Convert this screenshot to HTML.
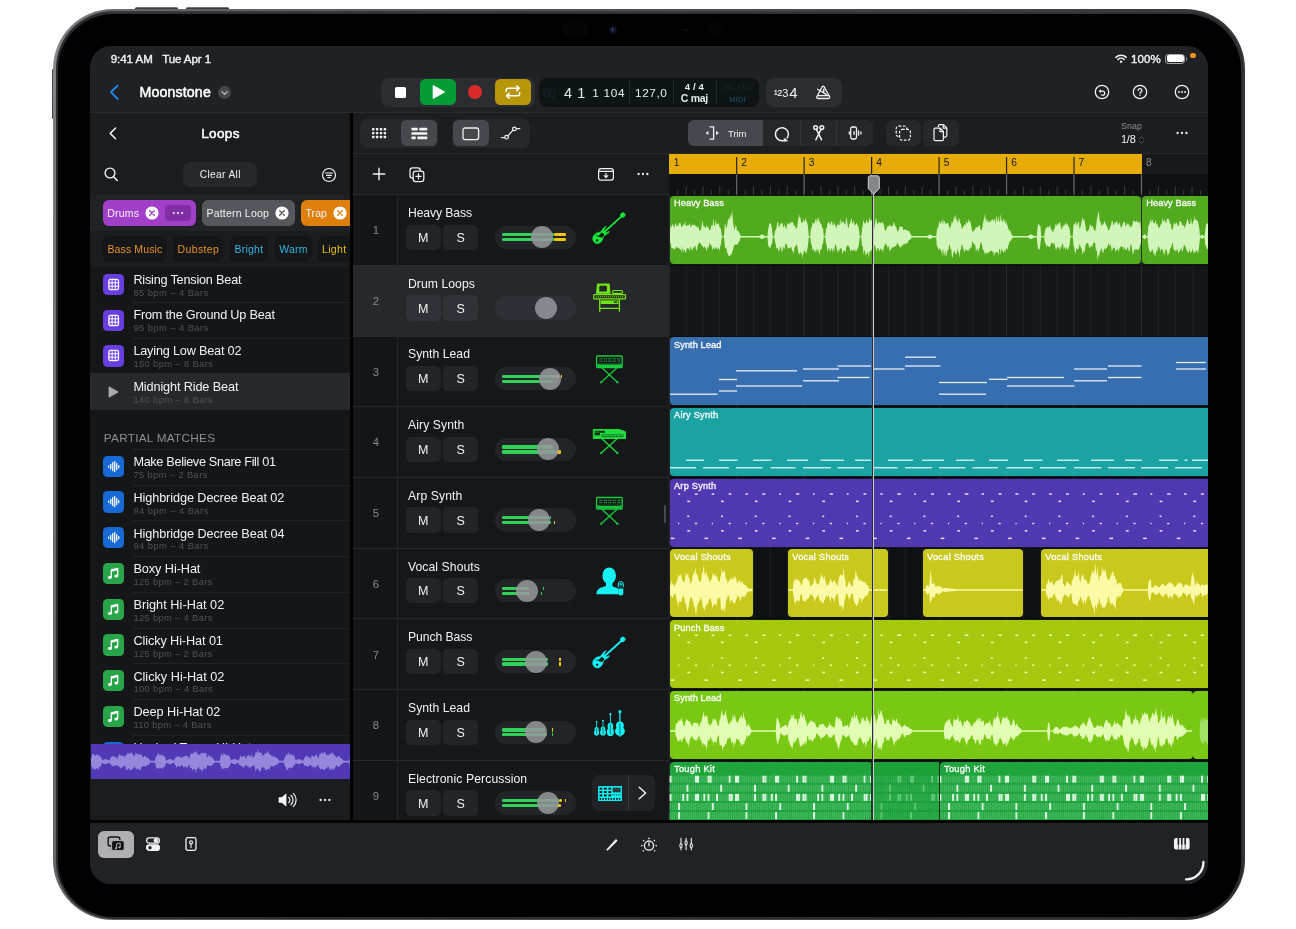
<!DOCTYPE html>
<html><head><meta charset="utf-8"><title>Logic Pro for iPad</title>
<style>
html,body{margin:0;padding:0;background:#fff}
body{width:1296px;height:929px;position:relative;overflow:hidden;font-family:"Liberation Sans",sans-serif}
#root div,#root span,#root svg{position:absolute;display:block}
#root span{white-space:pre}
#root{position:absolute;left:0;top:0;width:1296px;height:929px;will-change:transform}
</style></head><body><div id="root">
<div style="left:135.3px;top:6.9px;width:42.7px;height:4px;background:linear-gradient(180deg,#9a9a9e 0,#3c3d41 1.2px,#2a2a2e 100%);border-radius:1.5px;"></div>
<div style="left:186.2px;top:6.9px;width:42.8px;height:4px;background:linear-gradient(180deg,#9a9a9e 0,#3c3d41 1.2px,#2a2a2e 100%);border-radius:1.5px;"></div>
<div style="left:51.9px;top:68.5px;width:3px;height:50.5px;background:#47484c;border-radius:1px;"></div>
<div style="left:53px;top:9.300px;width:1191.500px;height:911.200px;border-radius:60px;background:linear-gradient(97deg,#9a9a9e 0,#7a7b7f 1.2%,#66676b 6%,#55565a 30%,#404145 70%,#343438 100%)"></div>
<div style="left:55.800px;top:11.400px;width:1187.400px;height:907.800px;border-radius:57.500px;background:linear-gradient(180deg,#3e3e42 0,#2c2c30 3px,#2c2c30 100%)"></div>
<div style="left:57.800px;top:13.600px;width:1183.400px;height:903.800px;border-radius:55.500px;background:#000"></div>
<div style="left:561px;top:22.4px;width:27.6px;height:13.6px;background:#050506;border-radius:6.8px;"></div>
<div style="left:609.600px;top:26.600px;width:6px;height:6px;border-radius:50%;background:#121828;box-shadow:0 0 0 1px #0a0c12"></div>
<div style="left:611.700px;top:28.200px;width:1.800px;height:2.800px;border-radius:50%;background:#3a58b8"></div>
<div style="left:685px;top:28.6px;width:2px;height:2px;background:#161618;border-radius:1px;"></div>
<div style="left:708px;top:22.4px;width:14px;height:14px;background:#040405;border-radius:7px;"></div>
<div id="scr" style="left:90.300px;top:46px;width:1117.900px;height:838px;border-radius:21px;background:#202125;overflow:hidden">
<div style="left:-90.300px;top:-46px;width:1296px;height:929px">
<span style="left:110.70px;top:52.10px;font-size:11.5px;line-height:14px;color:#f2f2f4;font-weight:400;letter-spacing:-0.027px;-webkit-text-stroke:0.4px #f2f2f4;">9:41 AM</span>
<span style="left:162.20px;top:52.10px;font-size:11.5px;line-height:14px;color:#f2f2f4;font-weight:400;letter-spacing:-0.070px;-webkit-text-stroke:0.4px #f2f2f4;">Tue Apr 1</span>
<svg style="left:1114px;top:53px;" width="14" height="11" viewBox="0 0 14 11"><path d="M1.900 4.300A7.600 7.600 0 0 1 12.300 4.300" fill="none" stroke="#f2f2f4" stroke-width="1.600" stroke-linecap="round"/><path d="M4 6.500A4.500 4.500 0 0 1 10.200 6.500" fill="none" stroke="#f2f2f4" stroke-width="1.600" stroke-linecap="round"/><circle cx="7.100" cy="8.800" r="1.200" fill="#f2f2f4"/></svg>
<span style="left:1131.00px;top:52.10px;font-size:11.5px;line-height:14px;color:#f2f2f4;font-weight:400;letter-spacing:0.072px;-webkit-text-stroke:0.4px #f2f2f4;">100%</span>
<div style="left:1164.7px;top:53.6px;width:20.4px;height:10.6px;border-radius:3.4px;border:1.200px solid #a8a8ac;box-sizing:border-box"></div>
<div style="left:1166.5px;top:55.3px;width:17px;height:7.2px;background:#fff;border-radius:2px;"></div>
<div style="left:1185.6px;top:57.2px;width:1.3px;height:3.4px;background:#8a8a8e;border-radius:0.6px;"></div>
<div style="left:1190.2px;top:53.1px;width:5.4px;height:5.4px;background:#f0941c;border-radius:2.7px;"></div>
<svg style="left:108px;top:83px;" width="14" height="18" viewBox="0 0 14 18"><path d="M9.6 2.6L3 9.2l6.6 6.6" fill="none" stroke="#1f8cf2" stroke-width="1.9" stroke-linecap="round" stroke-linejoin="round"/></svg>
<span style="left:139.50px;top:83.60px;font-size:14.2px;line-height:17px;color:#fff;font-weight:400;letter-spacing:0.137px;-webkit-text-stroke:0.5px #fff;">Moonstone</span>
<div style="left:218.2px;top:85.7px;width:13.2px;height:13.2px;background:#47474c;border-radius:6.6px;"></div>
<svg style="left:218.2px;top:85.7px;" width="13.2" height="13.2" viewBox="0 0 13.2 13.2"><path d="M3.9 5.6L6.6 8.3l2.7-2.7" fill="none" stroke="#b8b8be" stroke-width="1.3" stroke-linecap="round" stroke-linejoin="round"/></svg>
<div style="left:381.2px;top:77.9px;width:153.8px;height:29.2px;background:#2c2d31;border-radius:7.5px;"></div>
<div style="left:394.7px;top:86.6px;width:11.5px;height:11.6px;background:#fff;border-radius:1.5px;"></div>
<div style="left:419.9px;top:78.9px;width:36.1px;height:26.4px;background:#039b34;border-radius:5.5px;"></div>
<svg style="left:420px;top:79.3px;" width="36" height="26" viewBox="0 0 36 26"><path d="M13.2 6.6L24.6 13 13.2 19.4z" fill="#fff" stroke="#fff" stroke-width="1" stroke-linejoin="round"/></svg>
<div style="left:468.2px;top:85.4px;width:13.6px;height:13.6px;background:#d92a2a;border-radius:6.8px;"></div>
<div style="left:494.8px;top:78.9px;width:35.8px;height:26.4px;background:#b8960a;border-radius:5.5px;"></div>
<svg style="left:494.8px;top:79.3px;" width="35.8" height="26" viewBox="0 0 35.8 26"><g fill="none" stroke="#fff" stroke-width="1.5" stroke-linecap="round" stroke-linejoin="round"><path d="M11.2 12.4v-1.2a2 2 0 0 1 2-2h10.6"/><path d="M21.6 6.8l2.6 2.4-2.6 2.4"/><path d="M24.6 13.6v1.2a2 2 0 0 1-2 2H12"/><path d="M14.2 19.2l-2.6-2.4 2.6-2.4"/></g></svg>
<div style="left:539px;top:77.9px;width:220px;height:29.2px;background:#0e1416;border-radius:7.5px;"></div>
<span style="left:542.50px;top:84.60px;font-size:14.5px;line-height:17px;color:#17252a;font-weight:400;transform:scaleX(.78);transform-origin:0 50%;">0</span>
<span style="left:548.80px;top:84.60px;font-size:14.5px;line-height:17px;color:#17252a;font-weight:400;transform:scaleX(.78);transform-origin:0 50%;">0</span>
<span style="left:564.00px;top:84.60px;font-size:14.5px;line-height:17px;color:#e6ecee;font-weight:400;">4</span>
<span style="left:577.30px;top:84.60px;font-size:14.5px;line-height:17px;color:#e6ecee;font-weight:400;">1</span>
<span style="left:592.30px;top:86.10px;font-size:11.8px;line-height:14px;color:#e6ecee;font-weight:400;letter-spacing:0.694px;">1 104</span>
<div style="left:629px;top:80px;width:1px;height:24px;background:#1d2a2d;"></div>
<span style="left:635.00px;top:86.10px;font-size:11.8px;line-height:14px;color:#e6ecee;font-weight:400;letter-spacing:0.594px;">127,0</span>
<div style="left:672.6px;top:80px;width:1px;height:24px;background:#1d2a2d;"></div>
<span style="left:684.80px;top:81.10px;font-size:9.5px;line-height:11px;color:#e6ecee;font-weight:700;letter-spacing:0.102px;">4 / 4</span>
<span style="left:680.80px;top:91.60px;font-size:10.5px;line-height:13px;color:#e6ecee;font-weight:700;letter-spacing:-0.319px;">C maj</span>
<div style="left:716px;top:80px;width:1px;height:24px;background:#1d2a2d;"></div>
<span style="left:724.28px;top:81.10px;font-size:9.5px;line-height:11px;color:#15201f;font-weight:700;">In</span>
<span style="left:737.32px;top:81.10px;font-size:9.5px;line-height:11px;color:#15201f;font-weight:700;">Out</span>
<span style="left:729.25px;top:95.10px;font-size:7.5px;line-height:9px;color:#23506c;font-weight:400;letter-spacing:0.168px;">MIDI</span>
<div style="left:766px;top:77.9px;width:76px;height:29.2px;background:#2c2d31;border-radius:7.5px;"></div>
<span style="left:774.00px;top:88.60px;font-size:6.5px;line-height:8px;color:#f2f2f4;font-weight:400;-webkit-text-stroke:0.2px #f2f2f4;">1</span>
<span style="left:777.40px;top:88.10px;font-size:8.3px;line-height:10px;color:#f2f2f4;font-weight:400;-webkit-text-stroke:0.2px #f2f2f4;">2</span>
<span style="left:782.30px;top:86.60px;font-size:11px;line-height:13px;color:#f2f2f4;font-weight:400;">3</span>
<span style="left:789.30px;top:83.60px;font-size:15px;line-height:18px;color:#f2f2f4;font-weight:400;">4</span>
<svg style="left:814px;top:84px;" width="18" height="16" viewBox="0 0 18 16"><g fill="none" stroke="#f2f2f4" stroke-width="1.300" stroke-linejoin="round" stroke-linecap="round"><path d="M8.300 2.700Q9.200 1.500 10.100 2.700L15.500 12.500Q16.200 14.500 14.300 14.500H4.100Q2.200 14.500 2.900 12.500Z"/><path d="M3.600 11.700H14.800"/><path d="M12.600 10.600L3.600 5.200"/><path d="M9.700 5.600v2.200" stroke-width="1.600"/></g></svg>
<svg style="left:1093.3px;top:83.2px;" width="18" height="18" viewBox="0 0 18 18"><circle cx="9" cy="9" r="6.7" fill="none" stroke="#f2f2f4" stroke-width="1.25"/><path d="M6.4 8.2h3.3a2 2 0 0 1 0 4H8.6" fill="none" stroke="#f2f2f4" stroke-width="1.2" stroke-linecap="round"/><path d="M8 6.2L5.9 8.2 8 10.2z" fill="#f2f2f4"/></svg>
<svg style="left:1130.8px;top:83.2px;" width="18" height="18" viewBox="0 0 18 18"><circle cx="9" cy="9" r="6.7" fill="none" stroke="#f2f2f4" stroke-width="1.25"/><path d="M7.2 7.4a1.85 1.85 0 1 1 2.7 1.7c-.6.4-.9.7-.9 1.4" fill="none" stroke="#f2f2f4" stroke-width="1.2" stroke-linecap="round"/><circle cx="9" cy="12.3" r=".8" fill="#f2f2f4"/></svg>
<svg style="left:1173px;top:83.2px;" width="18" height="18" viewBox="0 0 18 18"><circle cx="9" cy="9" r="6.7" fill="none" stroke="#f2f2f4" stroke-width="1.25"/><circle cx="5.9" cy="9" r=".95" fill="#f2f2f4"/><circle cx="9" cy="9" r=".95" fill="#f2f2f4"/><circle cx="12.1" cy="9" r=".95" fill="#f2f2f4"/></svg>
<div style="left:90px;top:112px;width:1119px;height:1px;background:#2a2b2f;"></div>
<div style="left:353px;top:113px;width:856px;height:40.3px;background:#1c1d20;"></div>
<div style="left:353px;top:153.1px;width:856px;height:1px;background:#26272a;"></div>
<div style="left:359.8px;top:118.7px;width:78.6px;height:29.2px;background:#26272b;border-radius:7px;"></div>
<div style="left:401.3px;top:120.1px;width:35.8px;height:26px;background:#47484d;border-radius:5.5px;"></div>
<svg style="left:372px;top:127.8px;" width="15" height="11" viewBox="0 0 15 11"><rect x="0" y="0" width="2.4" height="2.4" rx=".5" fill="#f2f2f4"/><rect x="0" y="3.9" width="2.4" height="2.4" rx=".5" fill="#f2f2f4"/><rect x="0" y="7.8" width="2.4" height="2.4" rx=".5" fill="#f2f2f4"/><rect x="3.9" y="0" width="2.4" height="2.4" rx=".5" fill="#f2f2f4"/><rect x="3.9" y="3.9" width="2.4" height="2.4" rx=".5" fill="#f2f2f4"/><rect x="3.9" y="7.8" width="2.4" height="2.4" rx=".5" fill="#f2f2f4"/><rect x="7.8" y="0" width="2.4" height="2.4" rx=".5" fill="#f2f2f4"/><rect x="7.8" y="3.9" width="2.4" height="2.4" rx=".5" fill="#f2f2f4"/><rect x="7.8" y="7.8" width="2.4" height="2.4" rx=".5" fill="#f2f2f4"/><rect x="11.7" y="0" width="2.4" height="2.4" rx=".5" fill="#f2f2f4"/><rect x="11.7" y="3.9" width="2.4" height="2.4" rx=".5" fill="#f2f2f4"/><rect x="11.7" y="7.8" width="2.4" height="2.4" rx=".5" fill="#f2f2f4"/></svg>
<svg style="left:411px;top:127px;" width="17" height="13" viewBox="0 0 17 13"><g fill="#f2f2f4"><rect x="0.5" y="0.8" width="6.2" height="2.6" rx=".6"/><rect x="8.3" y="0.8" width="8" height="2.6" rx=".6"/><rect x="0.5" y="5.2" width="15.8" height="2.6" rx=".6"/><rect x="0.5" y="9.6" width="4.2" height="2.6" rx=".6"/><rect x="6.3" y="9.6" width="10" height="2.6" rx=".6"/></g></svg>
<div style="left:451.8px;top:118.7px;width:78.4px;height:29.2px;background:#26272b;border-radius:7px;"></div>
<div style="left:453.1px;top:120.1px;width:36.2px;height:26px;background:#47484d;border-radius:5.5px;"></div>
<svg style="left:462px;top:126.5px;" width="18" height="14" viewBox="0 0 18 14"><rect x="1" y="1" width="15.6" height="11.6" rx="2" fill="none" stroke="#f2f2f4" stroke-width="1.3"/></svg>
<svg style="left:500px;top:124px;" width="22" height="18" viewBox="0 0 22 18"><g fill="none" stroke="#f2f2f4" stroke-width="1.2" stroke-linecap="round"><path d="M1.5 13.6h3"/><circle cx="6.6" cy="13.2" r="1.8"/><path d="M7.9 11.8l5.2-5.6"/><circle cx="14.4" cy="4.9" r="1.8"/><path d="M16.4 4.6h3.4"/></g></svg>
<div style="left:688.2px;top:120.4px;width:184.7px;height:25.7px;background:#26272b;border-radius:6px;"></div>
<div style="left:688.200px;top:120.400px;width:74.800px;height:25.700px;background:#47484d;border-radius:6px 0 0 6px"></div>
<div style="left:800.2px;top:121px;width:1px;height:24.5px;background:#34353a;"></div>
<div style="left:835.8px;top:121px;width:1px;height:24.5px;background:#34353a;"></div>
<svg style="left:704px;top:125px;" width="18" height="16" viewBox="0 0 18 16"><g fill="none" stroke="#f2f2f4" stroke-width="1.3" stroke-linecap="round" stroke-linejoin="round"><path d="M6 1.8h3.6v12.4H6"/></g><path d="M1.600 8L4.400 6.100v3.800z" fill="#f2f2f4"/><path d="M12 6l3 2-3 2z" fill="#f2f2f4"/></svg>
<span style="left:728.00px;top:128.10px;font-size:9.5px;line-height:11px;color:#f2f2f4;font-weight:400;letter-spacing:-0.035px;">Trim</span>
<svg style="left:772px;top:124.5px;" width="20" height="19" viewBox="0 0 20 19"><path d="M12.400 15.200A6.500 6.500 0 1 1 15.200 13" fill="none" stroke="#f2f2f4" stroke-width="1.450" stroke-linecap="round"/><path d="M16.200 16.300l-4.900.5 1.400-4z" fill="#f2f2f4"/></svg>
<svg style="left:808.5px;top:124.3px;" width="20" height="18" viewBox="0 0 20 18"><g fill="none" stroke="#f2f2f4" stroke-width="1.500" stroke-linecap="round"><circle cx="6.6" cy="3.6" r="1.9"/><circle cx="12.8" cy="3.6" r="1.9"/><path d="M7.4 5.4l5.2 10.4"/><path d="M12 5.4L6.8 15.8"/></g></svg>
<svg style="left:845px;top:124px;" width="20" height="18" viewBox="0 0 20 18"><g fill="none" stroke="#f2f2f4" stroke-width="1.300" stroke-linecap="round" stroke-linejoin="round"><path d="M8.400 3H7.400a1.700 1.700 0 0 0-1.700 1.700v8.600A1.700 1.700 0 0 0 7.400 15h1"/><path d="M8.400 3h1.400a1.700 1.700 0 0 1 1.700 1.700v8.600a1.700 1.700 0 0 1-1.700 1.700H8.400"/><path d="M4.300 8v2"/><path d="M9 7.600v2.800"/><path d="M13.500 6.800v4.400"/><path d="M15.900 8v2"/></g></svg>
<div style="left:886px;top:120.2px;width:35.3px;height:26px;background:#26272b;border-radius:6px;"></div>
<div style="left:923.3px;top:120.2px;width:35.7px;height:26px;background:#26272b;border-radius:6px;"></div>
<svg style="left:894px;top:124px;" width="20" height="18" viewBox="0 0 20 18"><g fill="none" stroke="#f2f2f4" stroke-width="1.25"><rect x="2.2" y="2" width="10.6" height="10.6" rx="2.6" stroke-dasharray="2.6 1.5"/><rect x="5.6" y="5.4" width="10.8" height="10.8" rx="2.6" fill="#26272b" stroke-dasharray="2.6 1.5"/></g></svg>
<svg style="left:931px;top:123px;" width="20" height="20" viewBox="0 0 20 20"><g fill="none" stroke="#f2f2f4" stroke-width="1.25" stroke-linejoin="round"><path d="M7.4 4V3a1.4 1.4 0 0 1 1.4-1.4h3.6l3.4 3.4v7.6a1.4 1.4 0 0 1-1.4 1.4H13"/><path d="M12.2 1.8v3.4h3.4"/><path d="M4.4 5.2h4.8l3.2 3.2v7.800a1.400 1.400 0 0 1-1.400 1.400H4.400a1.400 1.400 0 0 1-1.400-1.400V6.600a1.400 1.400 0 0 1 1.400-1.400z" fill="#26272b"/><path d="M9 5.400v3.200h3.200"/></g></svg>
<span style="left:1121.00px;top:120.60px;font-size:8.8px;line-height:11px;color:#8e8e93;font-weight:400;letter-spacing:0.111px;">Snap</span>
<span style="left:1121.00px;top:132.60px;font-size:11px;line-height:13px;color:#f2f2f4;font-weight:400;letter-spacing:-0.263px;">1/8</span>
<svg style="left:1137.5px;top:134.5px;" width="7" height="10" viewBox="0 0 7 10"><path d="M1.4 3.800L3.500 1.700l2.100 2.100M1.400 6.400l2.100 2.100 2.100-2.100" fill="none" stroke="#55565a" stroke-width="1" stroke-linecap="round" stroke-linejoin="round"/></svg>
<svg style="left:1174.4px;top:130.2px;" width="16" height="6" viewBox="0 0 16 6"><circle cx="3.5999999999999996" cy="3" r="1.15" fill="#f2f2f4"/><circle cx="8.0" cy="3" r="1.15" fill="#f2f2f4"/><circle cx="12.4" cy="3" r="1.15" fill="#f2f2f4"/></svg>
<div style="left:90px;top:113px;width:260px;height:708.5px;background:#1b1c1e;"></div>
<div style="left:350px;top:113px;width:3px;height:709px;background:#000;"></div>
<svg style="left:107px;top:126px;" width="12" height="15" viewBox="0 0 12 15"><path d="M8.6 2L3.2 7.4l5.400 5.400" fill="none" stroke="#f2f2f4" stroke-width="1.5" stroke-linecap="round" stroke-linejoin="round"/></svg>
<span style="left:201.25px;top:125.60px;font-size:13.5px;line-height:16px;color:#fff;font-weight:400;letter-spacing:0.344px;-webkit-text-stroke:0.5px #fff;">Loops</span>
<svg style="left:103px;top:166px;" width="17" height="17" viewBox="0 0 17 17"><circle cx="7" cy="7" r="4.900" fill="none" stroke="#f2f2f4" stroke-width="1.4"/><path d="M10.600 10.800l3.600 3.700" stroke="#f2f2f4" stroke-width="1.600" stroke-linecap="round"/></svg>
<div style="left:183.4px;top:161.5px;width:73.4px;height:25.7px;background:#26272b;border-radius:6px;"></div>
<span style="left:199.80px;top:168.60px;font-size:10.2px;line-height:12px;color:#f2f2f4;font-weight:400;letter-spacing:0.336px;">Clear All</span>
<svg style="left:320px;top:165.5px;" width="18" height="18" viewBox="0 0 18 18"><circle cx="9" cy="9" r="6.500" fill="none" stroke="#f2f2f4" stroke-width="1.200"/><path d="M5.400 7h7.200M6.600 9.300h4.800M7.800 11.500h2.400" stroke="#f2f2f4" stroke-width="1.200" stroke-linecap="round"/></svg>
<div style="left:90px;top:194.6px;width:260px;height:36.4px;background:#212225;"></div>
<div style="left:103.2px;top:200px;width:92.8px;height:26px;background:#a23fc9;border-radius:6px;"></div>
<span style="left:107.30px;top:206.60px;font-size:10.5px;line-height:13px;color:#f2f2f4;font-weight:400;letter-spacing:0.217px;">Drums</span>
<svg style="left:144.8px;top:206px;" width="14" height="14" viewBox="0 0 14 14"><circle cx="7" cy="7" r="6.600" fill="#fff"/><path d="M4.700 4.700l4.600 4.600M9.300 4.700L4.700 9.300" stroke="#a23fc9" stroke-width="1.300" stroke-linecap="round"/></svg>
<div style="left:165.3px;top:205.2px;width:25.4px;height:15.6px;background:#7f2ea3;border-radius:4px;"></div>
<svg style="left:170px;top:210px;" width="16" height="6" viewBox="0 0 16 6"><circle cx="3.8" cy="3" r="1.05" fill="#f2f2f4"/><circle cx="8.0" cy="3" r="1.05" fill="#f2f2f4"/><circle cx="12.2" cy="3" r="1.05" fill="#f2f2f4"/></svg>
<div style="left:202.4px;top:200px;width:92.6px;height:26px;background:#56575c;border-radius:6px;"></div>
<span style="left:206.50px;top:206.60px;font-size:10.5px;line-height:13px;color:#f2f2f4;font-weight:400;letter-spacing:0.197px;">Pattern Loop</span>
<svg style="left:274.8px;top:206px;" width="14" height="14" viewBox="0 0 14 14"><circle cx="7" cy="7" r="6.600" fill="#fff"/><path d="M4.700 4.700l4.600 4.600M9.300 4.700L4.700 9.300" stroke="#56575c" stroke-width="1.300" stroke-linecap="round"/></svg>
<div style="left:301px;top:200px;width:49px;height:26px;background:#e0800c;border-radius:6px 0 0 6px"></div>
<span style="left:305.50px;top:206.60px;font-size:10.5px;line-height:13px;color:#f2f2f4;font-weight:400;letter-spacing:0.075px;">Trap</span>
<svg style="left:333px;top:206px;" width="14" height="14" viewBox="0 0 14 14"><circle cx="7" cy="7" r="6.600" fill="#fff"/><path d="M4.700 4.700l4.600 4.600M9.300 4.700L4.700 9.300" stroke="#e0800c" stroke-width="1.300" stroke-linecap="round"/></svg>
<div style="left:90px;top:231px;width:260px;height:35.6px;background:#1b1c1e;"></div>
<div style="left:103.2px;top:236px;width:64px;height:25.7px;background:#151618;border-radius:6px;"></div>
<span style="left:107.40px;top:242.60px;font-size:10.5px;line-height:13px;color:#e8912e;font-weight:400;letter-spacing:0.132px;">Bass Music</span>
<div style="left:173.4px;top:236px;width:50px;height:25.7px;background:#151618;border-radius:6px;"></div>
<span style="left:177.60px;top:242.60px;font-size:10.5px;line-height:13px;color:#e8912e;font-weight:400;letter-spacing:0.342px;">Dubstep</span>
<div style="left:230.2px;top:236px;width:38px;height:25.7px;background:#151618;border-radius:6px;"></div>
<span style="left:234.40px;top:242.60px;font-size:10.5px;line-height:13px;color:#35b4e6;font-weight:400;letter-spacing:0.262px;">Bright</span>
<div style="left:275px;top:236px;width:36.5px;height:25.7px;background:#151618;border-radius:6px;"></div>
<span style="left:279.20px;top:242.60px;font-size:10.5px;line-height:13px;color:#35b4e6;font-weight:400;letter-spacing:0.225px;">Warm</span>
<div style="left:317.8px;top:236px;width:40px;height:25.7px;background:#151618;border-radius:6px;"></div>
<span style="left:322.00px;top:242.60px;font-size:10.5px;line-height:13px;color:#e8c21a;font-weight:400;letter-spacing:0.346px;">Light</span>
<div style="left:350px;top:113px;width:3px;height:709px;background:#000;"></div>
<div style="left:90px;top:266.6px;width:260px;height:478px;background:#151618;"></div>
<div style="left:103.2px;top:273.9px;width:21.2px;height:21.2px;background:#683ee0;border-radius:4.5px;"></div>
<svg style="left:103.2px;top:273.9px;" width="21.2" height="21.2" viewBox="0 0 21.2 21.2"><rect x="5.900" y="5.300" width="9.600" height="10.400" rx="1.800" fill="none" stroke="#fff" stroke-width="1.300"/><path d="M5.900 8.800h9.600M5.900 12.200h9.600M9.100 5.300v10.400M12.300 5.300v10.400" stroke="#fff" stroke-width="1"/></svg>
<span style="left:133.40px;top:272.60px;font-size:12.7px;line-height:15px;color:#f2f2f4;font-weight:400;letter-spacing:-0.211px;">Rising Tension Beat</span>
<span style="left:133.40px;top:287.10px;font-size:9.4px;line-height:11px;color:#505156;font-weight:400;letter-spacing:0.434px;">85 bpm – 4 Bars</span>
<div style="left:133.4px;top:302.2px;width:216.6px;height:1px;background:#222326;"></div>
<div style="left:103.2px;top:309.65px;width:21.2px;height:21.2px;background:#683ee0;border-radius:4.5px;"></div>
<svg style="left:103.2px;top:309.65px;" width="21.2" height="21.2" viewBox="0 0 21.2 21.2"><rect x="5.900" y="5.300" width="9.600" height="10.400" rx="1.800" fill="none" stroke="#fff" stroke-width="1.300"/><path d="M5.900 8.800h9.600M5.900 12.200h9.600M9.100 5.300v10.400M12.300 5.300v10.400" stroke="#fff" stroke-width="1"/></svg>
<span style="left:133.40px;top:307.60px;font-size:12.7px;line-height:15px;color:#f2f2f4;font-weight:400;letter-spacing:-0.201px;">From the Ground Up Beat</span>
<span style="left:133.40px;top:322.10px;font-size:9.4px;line-height:11px;color:#505156;font-weight:400;letter-spacing:0.434px;">95 bpm – 4 Bars</span>
<div style="left:133.4px;top:337.95px;width:216.6px;height:1px;background:#222326;"></div>
<div style="left:103.2px;top:345.4px;width:21.2px;height:21.2px;background:#683ee0;border-radius:4.5px;"></div>
<svg style="left:103.2px;top:345.4px;" width="21.2" height="21.2" viewBox="0 0 21.2 21.2"><rect x="5.900" y="5.300" width="9.600" height="10.400" rx="1.800" fill="none" stroke="#fff" stroke-width="1.300"/><path d="M5.900 8.800h9.600M5.900 12.200h9.600M9.100 5.300v10.400M12.300 5.300v10.400" stroke="#fff" stroke-width="1"/></svg>
<span style="left:133.40px;top:343.60px;font-size:12.7px;line-height:15px;color:#f2f2f4;font-weight:400;letter-spacing:-0.197px;">Laying Low Beat 02</span>
<span style="left:133.40px;top:358.10px;font-size:9.4px;line-height:11px;color:#505156;font-weight:400;letter-spacing:0.361px;">150 bpm – 8 Bars</span>
<div style="left:133.4px;top:373.7px;width:216.6px;height:1px;background:#222326;"></div>
<div style="left:90px;top:373.45px;width:260px;height:36.1px;background:#27282c;"></div>
<svg style="left:106px;top:385.35px;" width="14" height="14" viewBox="0 0 14 14"><path d="M3 1.800L12.400 7 3 12.200z" fill="#a9a9ad" stroke="#a9a9ad" stroke-width=".8" stroke-linejoin="round"/></svg>
<span style="left:133.40px;top:379.60px;font-size:12.7px;line-height:15px;color:#f2f2f4;font-weight:400;letter-spacing:-0.128px;">Midnight Ride Beat</span>
<span style="left:133.40px;top:394.10px;font-size:9.4px;line-height:11px;color:#505156;font-weight:400;letter-spacing:0.361px;">140 bpm – 8 Bars</span>
<span style="left:103.80px;top:431.10px;font-size:11.8px;line-height:14px;color:#8e8e93;font-weight:400;letter-spacing:0.251px;">PARTIAL MATCHES</span>
<div style="left:133.4px;top:449px;width:216.6px;height:1px;background:#222326;"></div>
<div style="left:103.2px;top:455.6px;width:21.2px;height:21.2px;background:#1769d6;border-radius:4.5px;"></div>
<svg style="left:103.2px;top:455.6px;" width="21.2" height="21.2" viewBox="0 0 21.2 21.2"><rect x="5.00" y="9.40" width="1.250" height="2.4" rx=".6" fill="#fff"/><rect x="7.10" y="7.80" width="1.250" height="5.6" rx=".6" fill="#fff"/><rect x="9.10" y="5.90" width="1.250" height="9.4" rx=".6" fill="#fff"/><rect x="11.10" y="4.90" width="1.250" height="11.4" rx=".6" fill="#fff"/><rect x="13.10" y="7.00" width="1.250" height="7.2" rx=".6" fill="#fff"/><rect x="15.10" y="8.90" width="1.250" height="3.4" rx=".6" fill="#fff"/></svg>
<span style="left:133.40px;top:454.60px;font-size:12.7px;line-height:15px;color:#f2f2f4;font-weight:400;letter-spacing:-0.329px;">Make Believe Snare Fill 01</span>
<span style="left:133.40px;top:469.10px;font-size:9.4px;line-height:11px;color:#505156;font-weight:400;letter-spacing:0.367px;">75 bpm – 2 Bars</span>
<div style="left:133.4px;top:484.6px;width:216.6px;height:1px;background:#222326;"></div>
<div style="left:103.2px;top:491.35px;width:21.2px;height:21.2px;background:#1769d6;border-radius:4.5px;"></div>
<svg style="left:103.2px;top:491.35px;" width="21.2" height="21.2" viewBox="0 0 21.2 21.2"><rect x="5.00" y="9.40" width="1.250" height="2.4" rx=".6" fill="#fff"/><rect x="7.10" y="7.80" width="1.250" height="5.6" rx=".6" fill="#fff"/><rect x="9.10" y="5.90" width="1.250" height="9.4" rx=".6" fill="#fff"/><rect x="11.10" y="4.90" width="1.250" height="11.4" rx=".6" fill="#fff"/><rect x="13.10" y="7.00" width="1.250" height="7.2" rx=".6" fill="#fff"/><rect x="15.10" y="8.90" width="1.250" height="3.4" rx=".6" fill="#fff"/></svg>
<span style="left:133.40px;top:490.60px;font-size:12.7px;line-height:15px;color:#f2f2f4;font-weight:400;letter-spacing:-0.087px;">Highbridge Decree Beat 02</span>
<span style="left:133.40px;top:505.10px;font-size:9.4px;line-height:11px;color:#505156;font-weight:400;letter-spacing:0.434px;">94 bpm – 4 Bars</span>
<div style="left:133.4px;top:520.35px;width:216.6px;height:1px;background:#222326;"></div>
<div style="left:103.2px;top:527.1px;width:21.2px;height:21.2px;background:#1769d6;border-radius:4.5px;"></div>
<svg style="left:103.2px;top:527.1px;" width="21.2" height="21.2" viewBox="0 0 21.2 21.2"><rect x="5.00" y="9.40" width="1.250" height="2.4" rx=".6" fill="#fff"/><rect x="7.10" y="7.80" width="1.250" height="5.6" rx=".6" fill="#fff"/><rect x="9.10" y="5.90" width="1.250" height="9.4" rx=".6" fill="#fff"/><rect x="11.10" y="4.90" width="1.250" height="11.4" rx=".6" fill="#fff"/><rect x="13.10" y="7.00" width="1.250" height="7.2" rx=".6" fill="#fff"/><rect x="15.10" y="8.90" width="1.250" height="3.4" rx=".6" fill="#fff"/></svg>
<span style="left:133.40px;top:526.60px;font-size:12.7px;line-height:15px;color:#f2f2f4;font-weight:400;letter-spacing:-0.075px;">Highbridge Decree Beat 04</span>
<span style="left:133.40px;top:540.10px;font-size:9.4px;line-height:11px;color:#505156;font-weight:400;letter-spacing:0.434px;">94 bpm – 4 Bars</span>
<div style="left:133.4px;top:556.1px;width:216.6px;height:1px;background:#222326;"></div>
<div style="left:103.2px;top:562.85px;width:21.2px;height:21.2px;background:#28a548;border-radius:4.5px;"></div>
<svg style="left:103.2px;top:562.85px;" width="21.2" height="21.2" viewBox="0 0 21.2 21.2"><path d="M8.300 14.300V6.800l6.400-1.500v7.400" fill="none" stroke="#fff" stroke-width="1.300" stroke-linejoin="round"/><path d="M8.300 6.800l6.400-1.500v2l-6.400 1.500z" fill="#fff"/><ellipse cx="6.900" cy="14.500" rx="1.900" ry="1.500" fill="#fff"/><ellipse cx="13.300" cy="12.900" rx="1.900" ry="1.500" fill="#fff"/></svg>
<span style="left:133.40px;top:561.60px;font-size:12.7px;line-height:15px;color:#f2f2f4;font-weight:400;letter-spacing:-0.068px;">Boxy Hi-Hat</span>
<span style="left:133.40px;top:576.10px;font-size:9.4px;line-height:11px;color:#505156;font-weight:400;letter-spacing:0.330px;">125 bpm – 2 Bars</span>
<div style="left:133.4px;top:591.85px;width:216.6px;height:1px;background:#222326;"></div>
<div style="left:103.2px;top:598.6px;width:21.2px;height:21.2px;background:#28a548;border-radius:4.5px;"></div>
<svg style="left:103.2px;top:598.6px;" width="21.2" height="21.2" viewBox="0 0 21.2 21.2"><path d="M8.300 14.300V6.800l6.400-1.500v7.400" fill="none" stroke="#fff" stroke-width="1.300" stroke-linejoin="round"/><path d="M8.300 6.800l6.400-1.500v2l-6.400 1.500z" fill="#fff"/><ellipse cx="6.900" cy="14.500" rx="1.900" ry="1.500" fill="#fff"/><ellipse cx="13.300" cy="12.900" rx="1.900" ry="1.500" fill="#fff"/></svg>
<span style="left:133.40px;top:597.60px;font-size:12.7px;line-height:15px;color:#f2f2f4;font-weight:400;letter-spacing:0.041px;">Bright Hi-Hat 02</span>
<span style="left:133.40px;top:612.10px;font-size:9.4px;line-height:11px;color:#505156;font-weight:400;letter-spacing:0.330px;">125 bpm – 4 Bars</span>
<div style="left:133.4px;top:627.6px;width:216.6px;height:1px;background:#222326;"></div>
<div style="left:103.2px;top:634.35px;width:21.2px;height:21.2px;background:#28a548;border-radius:4.5px;"></div>
<svg style="left:103.2px;top:634.35px;" width="21.2" height="21.2" viewBox="0 0 21.2 21.2"><path d="M8.300 14.300V6.800l6.400-1.500v7.400" fill="none" stroke="#fff" stroke-width="1.300" stroke-linejoin="round"/><path d="M8.300 6.800l6.400-1.500v2l-6.400 1.500z" fill="#fff"/><ellipse cx="6.900" cy="14.500" rx="1.900" ry="1.500" fill="#fff"/><ellipse cx="13.300" cy="12.900" rx="1.900" ry="1.500" fill="#fff"/></svg>
<span style="left:133.40px;top:633.60px;font-size:12.7px;line-height:15px;color:#f2f2f4;font-weight:400;letter-spacing:-0.096px;">Clicky Hi-Hat 01</span>
<span style="left:133.40px;top:648.10px;font-size:9.4px;line-height:11px;color:#505156;font-weight:400;letter-spacing:0.330px;">125 bpm – 2 Bars</span>
<div style="left:133.4px;top:663.35px;width:216.6px;height:1px;background:#222326;"></div>
<div style="left:103.2px;top:670.1px;width:21.2px;height:21.2px;background:#28a548;border-radius:4.5px;"></div>
<svg style="left:103.2px;top:670.1px;" width="21.2" height="21.2" viewBox="0 0 21.2 21.2"><path d="M8.300 14.300V6.800l6.400-1.500v7.400" fill="none" stroke="#fff" stroke-width="1.300" stroke-linejoin="round"/><path d="M8.300 6.800l6.400-1.500v2l-6.400 1.500z" fill="#fff"/><ellipse cx="6.900" cy="14.500" rx="1.900" ry="1.500" fill="#fff"/><ellipse cx="13.300" cy="12.900" rx="1.900" ry="1.500" fill="#fff"/></svg>
<span style="left:133.40px;top:669.60px;font-size:12.7px;line-height:15px;color:#f2f2f4;font-weight:400;letter-spacing:-0.002px;">Clicky Hi-Hat 02</span>
<span style="left:133.40px;top:683.10px;font-size:9.4px;line-height:11px;color:#505156;font-weight:400;letter-spacing:0.361px;">100 bpm – 4 Bars</span>
<div style="left:133.4px;top:699.1px;width:216.6px;height:1px;background:#222326;"></div>
<div style="left:103.2px;top:705.85px;width:21.2px;height:21.2px;background:#28a548;border-radius:4.5px;"></div>
<svg style="left:103.2px;top:705.85px;" width="21.2" height="21.2" viewBox="0 0 21.2 21.2"><path d="M8.300 14.300V6.800l6.400-1.500v7.400" fill="none" stroke="#fff" stroke-width="1.300" stroke-linejoin="round"/><path d="M8.300 6.800l6.400-1.500v2l-6.400 1.500z" fill="#fff"/><ellipse cx="6.900" cy="14.500" rx="1.900" ry="1.500" fill="#fff"/><ellipse cx="13.300" cy="12.900" rx="1.900" ry="1.500" fill="#fff"/></svg>
<span style="left:133.40px;top:704.60px;font-size:12.7px;line-height:15px;color:#f2f2f4;font-weight:400;letter-spacing:-0.037px;">Deep Hi-Hat 02</span>
<span style="left:133.40px;top:719.10px;font-size:9.4px;line-height:11px;color:#505156;font-weight:400;letter-spacing:0.311px;">110 bpm – 4 Bars</span>
<div style="left:133.4px;top:734.85px;width:216.6px;height:1px;background:#222326;"></div>
<div style="left:103.2px;top:741.6px;width:21.2px;height:21.2px;background:#1769d6;border-radius:4.5px;"></div>
<svg style="left:103.2px;top:741.6px;" width="21.2" height="21.2" viewBox="0 0 21.2 21.2"><rect x="5.00" y="9.40" width="1.250" height="2.4" rx=".6" fill="#fff"/><rect x="7.10" y="7.80" width="1.250" height="5.6" rx=".6" fill="#fff"/><rect x="9.10" y="5.90" width="1.250" height="9.4" rx=".6" fill="#fff"/><rect x="11.10" y="4.90" width="1.250" height="11.4" rx=".6" fill="#fff"/><rect x="13.10" y="7.00" width="1.250" height="7.2" rx=".6" fill="#fff"/><rect x="15.10" y="8.90" width="1.250" height="3.4" rx=".6" fill="#fff"/></svg>
<span style="left:133.40px;top:740.60px;font-size:12.7px;line-height:15px;color:#f2f2f4;font-weight:400;letter-spacing:-0.130px;">Hushed Tones Hi-Hat</span>
<span style="left:133.40px;top:755.10px;font-size:9.4px;line-height:11px;color:#505156;font-weight:400;letter-spacing:0.401px;">90 bpm – 4 Bars</span>
<div style="left:133.4px;top:770.6px;width:216.6px;height:1px;background:#222326;"></div>
<div style="left:91px;top:744px;width:259px;height:35.3px;background:#5238b4;"></div>
<svg style="left:91px;top:744px;" width="259" height="35.3" viewBox="91 744 259 35.300"><path d="M91.0,757.7 91.8,756.4 92.6,753.5 93.4,754.2 94.2,754.4 95.0,755.9 95.8,755.1 96.6,755.1 97.4,754.1 98.2,755.7 99.0,755.6 99.8,755.2 100.6,757.1 101.4,757.3 102.2,760.6 103.0,760.0 103.8,759.5 104.6,759.2 105.4,759.1 106.2,759.2 107.0,759.4 107.8,759.8 108.6,760.3 109.4,760.8 110.2,758.5 111.0,757.5 111.8,756.3 112.6,755.8 113.4,757.0 114.2,756.3 115.0,757.1 115.8,757.1 116.6,758.7 117.4,758.3 118.2,756.5 119.0,755.2 119.8,754.0 120.6,755.7 121.4,755.7 122.2,755.6 123.0,755.4 123.8,756.6 124.6,756.8 125.4,755.8 126.2,754.7 127.0,754.5 127.8,752.6 128.6,753.7 129.4,753.8 130.2,753.0 131.0,753.6 131.8,751.4 132.6,754.6 133.4,754.8 134.2,756.7 135.0,754.9 135.8,752.4 136.6,754.7 137.4,752.8 138.2,754.9 139.0,755.0 139.8,753.5 140.6,754.8 141.4,754.4 142.2,755.9 143.0,757.8 143.8,756.8 144.6,755.8 145.4,756.0 146.2,757.5 147.0,757.3 147.8,757.6 148.6,758.3 149.4,759.8 150.2,760.7 151.0,760.7 151.8,760.7 152.6,760.7 153.4,760.7 154.2,760.7 155.0,760.7 155.8,756.5 156.6,755.9 157.4,754.7 158.2,752.4 159.0,753.8 159.8,755.7 160.6,755.1 161.4,754.2 162.2,755.8 163.0,755.1 163.8,755.9 164.6,756.6 165.4,757.9 166.2,761.0 167.0,760.3 167.8,759.8 168.6,759.4 169.4,759.1 170.2,759.1 171.0,759.2 171.8,759.6 172.6,760.0 173.4,760.5 174.2,761.0 175.0,757.9 175.8,757.6 176.6,756.7 177.4,756.0 178.2,756.7 179.0,757.3 179.8,756.1 180.6,757.6 181.4,758.1 182.2,757.9 183.0,756.3 183.8,756.9 184.6,755.9 185.4,755.8 186.2,756.0 187.0,755.7 187.8,756.1 188.6,757.7 189.4,758.4 190.2,754.9 191.0,753.6 191.8,753.3 192.6,754.3 193.4,752.7 194.2,752.7 195.0,750.8 195.8,753.0 196.6,751.4 197.4,754.3 198.2,755.1 199.0,754.0 199.8,755.3 200.6,752.9 201.4,753.7 202.2,752.4 203.0,753.0 203.8,753.4 204.6,753.3 205.4,752.7 206.2,753.2 207.0,756.5 207.8,757.6 208.6,754.7 209.4,755.8 210.2,756.2 211.0,757.5 211.8,756.1 212.6,758.3 213.4,758.7 214.2,760.2 215.0,760.9 215.8,760.7 216.6,760.7 217.4,760.7 218.2,760.7 219.0,760.7 219.8,760.7 220.6,756.2 221.4,753.5 222.2,754.5 223.0,755.7 223.8,752.3 224.6,754.4 225.4,754.5 226.2,755.5 227.0,755.2 227.8,755.5 228.6,755.0 229.4,756.6 230.2,758.1 231.0,760.7 231.8,760.1 232.6,759.6 233.4,759.2 234.2,759.1 235.0,759.1 235.8,759.3 236.6,759.7 237.4,760.2 238.2,760.7 239.0,759.5 239.8,758.1 240.6,755.8 241.4,756.2 242.2,757.1 243.0,756.5 243.8,756.3 244.6,755.8 245.4,758.4 246.2,758.3 247.0,755.5 247.8,756.3 248.6,754.6 249.4,755.7 250.2,756.2 251.0,757.0 251.8,753.4 252.6,757.3 253.4,757.8 254.2,756.6 255.0,755.6 255.8,752.0 256.6,752.6 257.4,752.8 258.2,748.9 259.0,752.8 259.8,753.0 260.6,752.0 261.4,753.0 262.2,754.5 263.0,756.0 263.8,755.0 264.6,754.1 265.4,753.4 266.2,752.4 267.0,753.5 267.8,750.0 268.6,752.9 269.4,754.6 270.2,754.2 271.0,755.2 271.8,756.6 272.6,756.6 273.4,756.3 274.2,755.8 275.0,757.5 275.8,757.4 276.6,757.9 277.4,758.1 278.2,759.6 279.0,760.5 279.8,761.1 280.6,760.7 281.4,760.7 282.2,760.7 283.0,760.7 283.8,760.7 284.6,757.9 285.4,757.0 286.2,754.3 287.0,754.1 287.8,755.6 288.6,751.8 289.4,755.2 290.2,754.2 291.0,754.2 291.8,754.4 292.6,755.7 293.4,755.1 294.2,755.5 295.0,758.0 295.8,760.5 296.6,759.9 297.4,759.4 298.2,759.2 299.0,759.1 299.8,759.2 300.6,759.5 301.4,759.9 302.2,760.4 303.0,760.9 303.8,758.9 304.6,757.7 305.4,756.4 306.2,756.3 307.0,756.1 307.8,756.5 308.6,756.9 309.4,757.4 310.2,758.2 311.0,758.6 311.8,754.8 312.6,756.0 313.4,756.5 314.2,756.1 315.0,756.7 315.8,754.5 316.6,754.5 317.4,756.5 318.2,758.8 319.0,756.4 319.8,753.5 320.6,753.9 321.4,751.9 322.2,752.7 323.0,754.2 323.8,752.5 324.6,751.6 325.4,753.0 326.2,754.6 327.0,755.6 327.8,754.4 328.6,755.5 329.4,753.8 330.2,753.9 331.0,752.9 331.8,754.0 332.6,751.5 333.4,755.1 334.2,754.2 335.0,755.5 335.8,757.0 336.6,757.9 337.4,756.2 338.2,756.3 339.0,756.3 339.8,756.9 340.6,757.5 341.4,758.7 342.2,759.0 343.0,760.0 343.8,760.8 344.6,760.7 345.4,760.7 346.2,760.7 347.0,760.7 347.8,760.7 348.6,760.7 349.4,756.9 L349.4,766.0 348.6,762.6 347.8,762.6 347.0,762.6 346.2,762.6 345.4,762.6 344.6,762.6 343.8,762.5 343.0,763.3 342.2,764.0 341.4,764.7 340.6,764.8 339.8,766.4 339.0,767.0 338.2,767.0 337.4,765.5 336.6,765.6 335.8,766.1 335.0,768.2 334.2,768.7 333.4,770.5 332.6,768.8 331.8,767.9 331.0,770.9 330.2,768.3 329.4,770.0 328.6,766.8 327.8,766.3 327.0,768.2 326.2,768.1 325.4,769.1 324.6,769.5 323.8,770.7 323.0,769.2 322.2,768.4 321.4,769.1 320.6,769.5 319.8,768.6 319.0,767.5 318.2,764.5 317.4,765.2 316.6,767.4 315.8,767.2 315.0,766.3 314.2,768.9 313.4,766.0 312.6,767.2 311.8,766.4 311.0,765.0 310.2,765.2 309.4,765.0 308.6,766.4 307.8,766.9 307.0,765.8 306.2,766.3 305.4,766.1 304.6,765.4 303.8,764.7 303.0,762.4 302.2,762.9 301.4,763.3 300.6,763.7 299.8,764.0 299.0,764.1 298.2,764.0 297.4,763.7 296.6,763.3 295.8,762.8 295.0,765.0 294.2,765.1 293.4,766.3 292.6,767.3 291.8,768.2 291.0,767.5 290.2,767.3 289.4,768.8 288.6,767.5 287.8,769.4 287.0,770.7 286.2,767.5 285.4,767.2 284.6,765.2 283.8,762.6 283.0,762.6 282.2,762.6 281.4,762.6 280.6,762.6 279.8,762.2 279.0,762.8 278.2,763.6 277.4,764.6 276.6,764.5 275.8,765.2 275.0,765.8 274.2,765.8 273.4,766.7 272.6,766.3 271.8,765.7 271.0,766.5 270.2,767.4 269.4,769.5 268.6,768.8 267.8,768.7 267.0,769.4 266.2,770.8 265.4,769.7 264.6,767.8 263.8,768.0 263.0,766.9 262.2,767.1 261.4,768.1 260.6,771.2 259.8,772.2 259.0,770.1 258.2,769.4 257.4,768.5 256.6,768.6 255.8,771.7 255.0,768.3 254.2,765.7 253.4,764.9 252.6,766.2 251.8,766.7 251.0,766.5 250.2,767.5 249.4,768.2 248.6,766.4 247.8,766.5 247.0,766.1 246.2,765.0 245.4,765.1 244.6,766.4 243.8,768.5 243.0,766.6 242.2,766.0 241.4,766.5 240.6,765.4 239.8,764.9 239.0,764.4 238.2,762.6 237.4,763.1 236.6,763.5 235.8,763.8 235.0,764.0 234.2,764.0 233.4,763.9 232.6,763.6 231.8,763.1 231.0,762.6 230.2,765.0 229.4,766.2 228.6,767.8 227.8,768.0 227.0,767.9 226.2,768.5 225.4,767.7 224.6,768.1 223.8,768.7 223.0,769.1 222.2,769.0 221.4,766.9 220.6,766.3 219.8,762.6 219.0,762.6 218.2,762.6 217.4,762.6 216.6,762.6 215.8,762.6 215.0,762.4 214.2,763.1 213.4,763.8 212.6,764.7 211.8,765.8 211.0,765.8 210.2,766.0 209.4,766.1 208.6,765.5 207.8,765.1 207.0,766.2 206.2,768.5 205.4,769.4 204.6,768.0 203.8,768.9 203.0,769.2 202.2,772.3 201.4,769.7 200.6,769.1 199.8,770.0 199.0,767.0 198.2,767.3 197.4,769.4 196.6,768.7 195.8,773.8 195.0,769.1 194.2,769.1 193.4,769.2 192.6,770.6 191.8,768.5 191.0,767.4 190.2,768.8 189.4,764.6 188.6,765.0 187.8,767.5 187.0,768.6 186.2,766.6 185.4,766.5 184.6,766.9 183.8,768.1 183.0,766.6 182.2,765.7 181.4,764.8 180.6,766.0 179.8,766.4 179.0,767.1 178.2,765.9 177.4,765.8 176.6,767.9 175.8,765.7 175.0,765.0 174.2,762.3 173.4,762.8 172.6,763.2 171.8,763.6 171.0,763.9 170.2,764.0 169.4,764.0 168.6,763.8 167.8,763.4 167.0,762.9 166.2,762.3 165.4,765.6 164.6,766.4 163.8,766.8 163.0,769.3 162.2,767.9 161.4,769.0 160.6,767.4 159.8,767.7 159.0,768.7 158.2,768.4 157.4,767.7 156.6,769.3 155.8,765.8 155.0,762.6 154.2,762.6 153.4,762.6 152.6,762.6 151.8,762.6 151.0,762.6 150.2,762.6 149.4,763.4 148.6,765.2 147.8,764.9 147.0,765.0 146.2,766.2 145.4,767.1 144.6,766.2 143.8,765.4 143.0,767.0 142.2,766.6 141.4,767.2 140.6,770.8 139.8,769.4 139.0,769.1 138.2,769.7 137.4,767.9 136.6,769.6 135.8,768.8 135.0,767.6 134.2,766.0 133.4,768.3 132.6,768.9 131.8,769.6 131.0,769.6 130.2,770.7 129.4,768.8 128.6,768.3 127.8,769.4 127.0,769.6 126.2,770.4 125.4,766.8 124.6,765.0 123.8,765.9 123.0,767.3 122.2,767.4 121.4,767.4 120.6,768.4 119.8,767.5 119.0,766.1 118.2,766.5 117.4,765.0 116.6,765.6 115.8,765.4 115.0,766.1 114.2,766.1 113.4,766.6 112.6,766.1 111.8,765.5 111.0,764.8 110.2,764.0 109.4,762.5 108.6,763.0 107.8,763.4 107.0,763.7 106.2,764.0 105.4,764.1 104.6,764.0 103.8,763.7 103.0,763.3 102.2,762.7 101.4,764.6 100.6,767.4 99.8,766.1 99.0,768.0 98.2,769.9 97.4,768.5 96.6,768.0 95.8,768.4 95.0,769.8 94.2,770.0 93.4,767.1 92.6,770.0 91.8,766.6 91.0,765.4Z" fill="#9687dc"/><path d="M91 761.600H350" stroke="#9687dc" stroke-width="1"/></svg>
<div style="left:90px;top:779.3px;width:260px;height:42.2px;background:#1b1c1e;"></div>
<svg style="left:277px;top:791px;" width="22" height="18" viewBox="0 0 22 18"><path d="M2 6.600h2.800l4.200-3.600v12l-4.200-3.600H2z" fill="#f2f2f4" stroke="#f2f2f4" stroke-width=".8" stroke-linejoin="round"/><path d="M11.700 6.300a3.600 3.600 0 0 1 0 5.400M14 4.200a6.600 6.600 0 0 1 0 9.600M16.400 2.400a9.400 9.400 0 0 1 0 13.200" fill="none" stroke="#f2f2f4" stroke-width="1.200" stroke-linecap="round"/></svg>
<svg style="left:316.5px;top:796.8px;" width="16" height="6" viewBox="0 0 16 6"><circle cx="3.5999999999999996" cy="3" r="1.15" fill="#f2f2f4"/><circle cx="8.0" cy="3" r="1.15" fill="#f2f2f4"/><circle cx="12.4" cy="3" r="1.15" fill="#f2f2f4"/></svg>
<div style="left:353px;top:153.5px;width:316px;height:41.1px;background:#1b1c1e;"></div>
<div style="left:353px;top:194.6px;width:316px;height:627px;background:#161719;"></div>
<div style="left:353px;top:194.6px;width:44.6px;height:627px;background:#141517;"></div>
<svg style="left:372.2px;top:167.2px;" width="14" height="14" viewBox="0 0 14 14"><path d="M7 1.300v11.400M1.300 7h11.400" stroke="#f2f2f4" stroke-width="1.400" stroke-linecap="round"/></svg>
<svg style="left:408px;top:166px;" width="18" height="18" viewBox="0 0 18 18"><g fill="none" stroke="#f2f2f4" stroke-width="1.250"><rect x="2" y="1.800" width="10.400" height="10.400" rx="2.600"/><rect x="5.200" y="5" width="10.600" height="10.600" rx="2.600" fill="#1b1c1e"/><path d="M10.500 7.700v5.200M7.900 10.300h5.200" stroke-linecap="round"/></g></svg>
<svg style="left:597px;top:166px;" width="18" height="17" viewBox="0 0 18 17"><g fill="none" stroke="#f2f2f4" stroke-width="1.200" stroke-linecap="round" stroke-linejoin="round"><rect x="1.600" y="2.600" width="14.800" height="11.600" rx="2.400"/><path d="M1.600 5.400h14.800"/><path d="M9 7.300v4M7.200 9.700L9 11.500l1.800-1.800"/></g></svg>
<svg style="left:635px;top:171px;" width="16" height="6" viewBox="0 0 16 6"><circle cx="3.5999999999999996" cy="3" r="1.15" fill="#f2f2f4"/><circle cx="8.0" cy="3" r="1.15" fill="#f2f2f4"/><circle cx="12.4" cy="3" r="1.15" fill="#f2f2f4"/></svg>
<div style="left:353px;top:194.1px;width:316px;height:1px;background:#2a2b2f;"></div>
<span style="left:372.66px;top:223.10px;font-size:11.3px;line-height:14px;color:#8a8a8f;font-weight:400;">1</span>
<span style="left:408.00px;top:205.60px;font-size:12.2px;line-height:15px;color:#f2f2f4;font-weight:400;letter-spacing:-0.109px;">Heavy Bass</span>
<div style="left:405.5px;top:224.5px;width:35.4px;height:25.3px;background:#232428;border-radius:5px;"></div>
<div style="left:443px;top:224.5px;width:35.4px;height:25.3px;background:#232428;border-radius:5px;"></div>
<span style="left:417.99px;top:230.60px;font-size:12.5px;line-height:15px;color:#f2f2f4;font-weight:400;">M</span>
<span style="left:456.53px;top:230.60px;font-size:12.5px;line-height:15px;color:#f2f2f4;font-weight:400;">S</span>
<div style="left:494.6px;top:225.6px;width:81.4px;height:23.2px;background:#232428;border-radius:11.6px;"></div>
<div style="left:502px;top:233.3px;width:51.7px;height:3.2px;background:#2fd158;border-radius:1.2px;"></div>
<div style="left:553.7px;top:233.3px;width:12.3px;height:3.2px;background:#f0c810;border-radius:1.2px;"></div>
<div style="left:502px;top:238.1px;width:51.7px;height:3.3px;background:#2fd158;border-radius:1.2px;"></div>
<div style="left:553.7px;top:238.1px;width:12.3px;height:3.3px;background:#f0c810;border-radius:1.2px;"></div>
<div style="left:530.7px;top:226.2px;width:22px;height:22px;border-radius:50%;background:rgba(150,151,156,.86)"></div>
<div style="left:353px;top:265.32px;width:316px;height:70.72px;background:#27282c;"></div>
<div style="left:353px;top:264.82px;width:316px;height:1px;background:#27282c;"></div>
<span style="left:372.66px;top:294.10px;font-size:11.3px;line-height:14px;color:#8a8a8f;font-weight:400;">2</span>
<span style="left:408.00px;top:276.60px;font-size:12.2px;line-height:15px;color:#f2f2f4;font-weight:400;letter-spacing:0.055px;">Drum Loops</span>
<div style="left:405.5px;top:295.22px;width:35.4px;height:25.3px;background:#313237;border-radius:5px;"></div>
<div style="left:443px;top:295.22px;width:35.4px;height:25.3px;background:#313237;border-radius:5px;"></div>
<span style="left:417.99px;top:301.60px;font-size:12.5px;line-height:15px;color:#f2f2f4;font-weight:400;">M</span>
<span style="left:456.53px;top:301.60px;font-size:12.5px;line-height:15px;color:#f2f2f4;font-weight:400;">S</span>
<div style="left:494.6px;top:296.32px;width:81.4px;height:23.2px;background:#2f3035;border-radius:11.6px;"></div>
<div style="left:534.8px;top:296.9px;width:22px;height:22px;border-radius:50%;background:rgba(150,151,156,.86)"></div>
<div style="left:353px;top:335.54px;width:316px;height:1px;background:#27282c;"></div>
<span style="left:372.66px;top:365.10px;font-size:11.3px;line-height:14px;color:#8a8a8f;font-weight:400;">3</span>
<span style="left:408.00px;top:346.60px;font-size:12.2px;line-height:15px;color:#f2f2f4;font-weight:400;letter-spacing:0.028px;">Synth Lead</span>
<div style="left:405.5px;top:365.94px;width:35.4px;height:25.3px;background:#232428;border-radius:5px;"></div>
<div style="left:443px;top:365.94px;width:35.4px;height:25.3px;background:#232428;border-radius:5px;"></div>
<span style="left:417.99px;top:371.60px;font-size:12.5px;line-height:15px;color:#f2f2f4;font-weight:400;">M</span>
<span style="left:456.53px;top:371.60px;font-size:12.5px;line-height:15px;color:#f2f2f4;font-weight:400;">S</span>
<div style="left:494.6px;top:367.04px;width:81.4px;height:23.2px;background:#232428;border-radius:11.6px;"></div>
<div style="left:502px;top:374.74px;width:54px;height:3.2px;background:#2fd158;border-radius:1.2px;"></div>
<div style="left:556px;top:374.74px;width:3px;height:3.2px;background:#f0c810;"></div>
<div style="left:561px;top:374.74px;width:1.3px;height:3.2px;background:#f0c810;"></div>
<div style="left:502px;top:379.54px;width:50.5px;height:3.3px;background:#2fd158;border-radius:1.2px;"></div>
<div style="left:555px;top:379.54px;width:1.2px;height:3.3px;background:#f0c810;"></div>
<div style="left:539.0px;top:367.6px;width:22px;height:22px;border-radius:50%;background:rgba(150,151,156,.86)"></div>
<div style="left:353px;top:406.26px;width:316px;height:1px;background:#27282c;"></div>
<span style="left:372.66px;top:435.10px;font-size:11.3px;line-height:14px;color:#8a8a8f;font-weight:400;">4</span>
<span style="left:408.00px;top:417.60px;font-size:12.2px;line-height:15px;color:#f2f2f4;font-weight:400;letter-spacing:0.090px;">Airy Synth</span>
<div style="left:405.5px;top:436.66px;width:35.4px;height:25.3px;background:#232428;border-radius:5px;"></div>
<div style="left:443px;top:436.66px;width:35.4px;height:25.3px;background:#232428;border-radius:5px;"></div>
<span style="left:417.99px;top:442.60px;font-size:12.5px;line-height:15px;color:#f2f2f4;font-weight:400;">M</span>
<span style="left:456.53px;top:442.60px;font-size:12.5px;line-height:15px;color:#f2f2f4;font-weight:400;">S</span>
<div style="left:494.6px;top:437.76px;width:81.4px;height:23.2px;background:#232428;border-radius:11.6px;"></div>
<div style="left:502px;top:445.46px;width:51px;height:3.2px;background:#2fd158;border-radius:1.2px;"></div>
<div style="left:502px;top:450.26px;width:54px;height:3.3px;background:#2fd158;border-radius:1.2px;"></div>
<div style="left:556px;top:450.26px;width:4.5px;height:3.3px;background:#f0c810;border-radius:1.2px;"></div>
<div style="left:536.5px;top:438.4px;width:22px;height:22px;border-radius:50%;background:rgba(150,151,156,.86)"></div>
<div style="left:353px;top:476.98px;width:316px;height:1px;background:#27282c;"></div>
<span style="left:372.66px;top:506.10px;font-size:11.3px;line-height:14px;color:#8a8a8f;font-weight:400;">5</span>
<span style="left:408.00px;top:488.60px;font-size:12.2px;line-height:15px;color:#f2f2f4;font-weight:400;letter-spacing:0.103px;">Arp Synth</span>
<div style="left:405.5px;top:507.38px;width:35.4px;height:25.3px;background:#232428;border-radius:5px;"></div>
<div style="left:443px;top:507.38px;width:35.4px;height:25.3px;background:#232428;border-radius:5px;"></div>
<span style="left:417.99px;top:513.60px;font-size:12.5px;line-height:15px;color:#f2f2f4;font-weight:400;">M</span>
<span style="left:456.53px;top:513.60px;font-size:12.5px;line-height:15px;color:#f2f2f4;font-weight:400;">S</span>
<div style="left:494.6px;top:508.48px;width:81.4px;height:23.2px;background:#232428;border-radius:11.6px;"></div>
<div style="left:502px;top:516.18px;width:46.5px;height:3.2px;background:#2fd158;border-radius:1.2px;"></div>
<div style="left:550px;top:516.18px;width:1px;height:3.2px;background:#2fd158;"></div>
<div style="left:502px;top:520.98px;width:49px;height:3.3px;background:#2fd158;border-radius:1.2px;"></div>
<div style="left:554px;top:520.98px;width:1.3px;height:3.3px;background:#f0c810;"></div>
<div style="left:528.3px;top:509.1px;width:22px;height:22px;border-radius:50%;background:rgba(150,151,156,.86)"></div>
<div style="left:353px;top:547.7px;width:316px;height:1px;background:#27282c;"></div>
<span style="left:372.66px;top:577.10px;font-size:11.3px;line-height:14px;color:#8a8a8f;font-weight:400;">6</span>
<span style="left:408.00px;top:559.60px;font-size:12.2px;line-height:15px;color:#f2f2f4;font-weight:400;letter-spacing:0.065px;">Vocal Shouts</span>
<div style="left:405.5px;top:578.1px;width:35.4px;height:25.3px;background:#232428;border-radius:5px;"></div>
<div style="left:443px;top:578.1px;width:35.4px;height:25.3px;background:#232428;border-radius:5px;"></div>
<span style="left:417.99px;top:583.60px;font-size:12.5px;line-height:15px;color:#f2f2f4;font-weight:400;">M</span>
<span style="left:456.53px;top:583.60px;font-size:12.5px;line-height:15px;color:#f2f2f4;font-weight:400;">S</span>
<div style="left:494.6px;top:579.2px;width:81.4px;height:23.2px;background:#232428;border-radius:11.6px;"></div>
<div style="left:502px;top:586.9px;width:26.5px;height:3.2px;background:#2fd158;border-radius:1.2px;"></div>
<div style="left:543px;top:586.9px;width:1.2px;height:3.2px;background:#2fd158;"></div>
<div style="left:502px;top:591.7px;width:28px;height:3.3px;background:#2fd158;border-radius:1.2px;"></div>
<div style="left:541px;top:591.7px;width:1.2px;height:3.3px;background:#2fd158;"></div>
<div style="left:516.0px;top:579.8px;width:22px;height:22px;border-radius:50%;background:rgba(150,151,156,.86)"></div>
<div style="left:353px;top:618.42px;width:316px;height:1px;background:#27282c;"></div>
<span style="left:372.66px;top:648.10px;font-size:11.3px;line-height:14px;color:#8a8a8f;font-weight:400;">7</span>
<span style="left:408.00px;top:629.60px;font-size:12.2px;line-height:15px;color:#f2f2f4;font-weight:400;letter-spacing:-0.070px;">Punch Bass</span>
<div style="left:405.5px;top:648.82px;width:35.4px;height:25.3px;background:#232428;border-radius:5px;"></div>
<div style="left:443px;top:648.82px;width:35.4px;height:25.3px;background:#232428;border-radius:5px;"></div>
<span style="left:417.99px;top:654.60px;font-size:12.5px;line-height:15px;color:#f2f2f4;font-weight:400;">M</span>
<span style="left:456.53px;top:654.60px;font-size:12.5px;line-height:15px;color:#f2f2f4;font-weight:400;">S</span>
<div style="left:494.6px;top:649.92px;width:81.4px;height:23.2px;background:#232428;border-radius:11.6px;"></div>
<div style="left:502px;top:657.62px;width:45.5px;height:3.2px;background:#2fd158;border-radius:1.2px;"></div>
<div style="left:559.3px;top:657.62px;width:1.5px;height:3.2px;background:#f0c810;"></div>
<div style="left:502px;top:662.42px;width:45.5px;height:3.3px;background:#2fd158;border-radius:1.2px;"></div>
<div style="left:559.3px;top:662.42px;width:1.5px;height:3.3px;background:#f0c810;"></div>
<div style="left:524.7px;top:650.5px;width:22px;height:22px;border-radius:50%;background:rgba(150,151,156,.86)"></div>
<div style="left:353px;top:689.14px;width:316px;height:1px;background:#27282c;"></div>
<span style="left:372.66px;top:718.10px;font-size:11.3px;line-height:14px;color:#8a8a8f;font-weight:400;">8</span>
<span style="left:408.00px;top:700.60px;font-size:12.2px;line-height:15px;color:#f2f2f4;font-weight:400;letter-spacing:0.028px;">Synth Lead</span>
<div style="left:405.5px;top:719.54px;width:35.4px;height:25.3px;background:#232428;border-radius:5px;"></div>
<div style="left:443px;top:719.54px;width:35.4px;height:25.3px;background:#232428;border-radius:5px;"></div>
<span style="left:417.99px;top:725.60px;font-size:12.5px;line-height:15px;color:#f2f2f4;font-weight:400;">M</span>
<span style="left:456.53px;top:725.60px;font-size:12.5px;line-height:15px;color:#f2f2f4;font-weight:400;">S</span>
<div style="left:494.6px;top:720.64px;width:81.4px;height:23.2px;background:#232428;border-radius:11.6px;"></div>
<div style="left:502px;top:728.34px;width:43px;height:3.2px;background:#2fd158;border-radius:1.2px;"></div>
<div style="left:551.5px;top:728.34px;width:1.3px;height:3.2px;background:#b8d820;"></div>
<div style="left:502px;top:733.14px;width:45px;height:3.3px;background:#2fd158;border-radius:1.2px;"></div>
<div style="left:551.5px;top:733.14px;width:1.3px;height:3.3px;background:#2fd158;"></div>
<div style="left:525.3px;top:721.2px;width:22px;height:22px;border-radius:50%;background:rgba(150,151,156,.86)"></div>
<div style="left:353px;top:759.86px;width:316px;height:1px;background:#27282c;"></div>
<span style="left:372.66px;top:789.10px;font-size:11.3px;line-height:14px;color:#8a8a8f;font-weight:400;">9</span>
<span style="left:408.00px;top:771.60px;font-size:12.2px;line-height:15px;color:#f2f2f4;font-weight:400;letter-spacing:0.095px;">Electronic Percussion</span>
<div style="left:405.5px;top:790.26px;width:35.4px;height:25.3px;background:#232428;border-radius:5px;"></div>
<div style="left:443px;top:790.26px;width:35.4px;height:25.3px;background:#232428;border-radius:5px;"></div>
<span style="left:417.99px;top:796.60px;font-size:12.5px;line-height:15px;color:#f2f2f4;font-weight:400;">M</span>
<span style="left:456.53px;top:796.60px;font-size:12.5px;line-height:15px;color:#f2f2f4;font-weight:400;">S</span>
<div style="left:494.6px;top:791.36px;width:81.4px;height:23.2px;background:#232428;border-radius:11.6px;"></div>
<div style="left:502px;top:799.06px;width:56.5px;height:3.2px;background:#2fd158;border-radius:1.2px;"></div>
<div style="left:558.5px;top:799.06px;width:3.5px;height:3.2px;background:#f0c810;border-radius:1.2px;"></div>
<div style="left:564.5px;top:799.06px;width:1.3px;height:3.2px;background:#f0c810;"></div>
<div style="left:502px;top:803.86px;width:54px;height:3.3px;background:#2fd158;border-radius:1.2px;"></div>
<div style="left:556px;top:803.86px;width:5px;height:3.3px;background:#f0c810;border-radius:1.2px;"></div>
<div style="left:536.6px;top:792.0px;width:22px;height:22px;border-radius:50%;background:rgba(150,151,156,.86)"></div>
<div style="left:397.3px;top:194.6px;width:1px;height:627px;background:#26272a;"></div>
<div style="left:664.3px;top:505px;width:2px;height:18px;background:#4a4b50;border-radius:1px;"></div>
<div style="left:668.6px;top:153.5px;width:1px;height:668px;background:#0c0c0e;"></div>
<svg style="left:0px;top:0px;" width="1296" height="929" viewBox="0 0 1296 929"><g transform="translate(605.400 231.00) rotate(-42.2) scale(.96 .88)"><path d="M-1 0H23" stroke="#16e436" stroke-width="2.100" stroke-linecap="round" fill="none"/><path d="M22.400,-1.300 l1.300,-1.400 2,.3 1.300,1.500 -.2,2 -1.600,1.200 -1.900,-.2 -1.100,-1.500z" fill="#16e436" stroke="#16e436" stroke-width=".9" stroke-linejoin="round"/><path d="M3.5,-3.6 C1.5,-4.5 -1,-4.100 -2.5,-3.300 C-4,-2.600 -5,-3.200 -6.5,-4.300 C-9,-6 -13,-5.800 -15.200,-3.300 C-17.300,-0.800 -16.900,3 -14.600,4.900 C-12,6.800 -8.600,5.900 -6.600,4.200 C-5.200,3 -4,2.900 -2.600,3.500 C-1,4.200 1.300,4.400 2.500,3.700 C2.900,3.400 2.600,2.800 1.900,2.700 C0.400,2.500 -0.600,1.900 -0.800,1.100 L-0.800,-1.100 C-0.400,-1.900 1,-2.700 3.200,-2.900 C3.900,-3 4.100,-3.400 3.500,-3.600 Z" fill="#16e436" stroke="#16e436" stroke-width=".5"/><path d="M-9.600,-1.200 L-3.800,-1.600 L-3.200,2.200 L-7.200,3.400 Z" fill="#0f1a12"/><circle cx="-13" cy="1.600" r="1.250" fill="#0f1a12"/><path d="M-10.400,-3.600 L-9,-1" stroke="#0f1a12" stroke-width=".7"/></g><g transform="translate(0 0.02)" fill="none" stroke="#6fe616" stroke-width="1.200"><path d="M597.600 284.200h11.400l1 9h-13.400z" fill="#6fe616"/><rect x="599.300" y="285.800" width="7.600" height="5.800" rx="1.200" fill="#26272c" stroke="none"/><rect x="612.700" y="290.500" width="9.700" height="2.900" rx=".8"/><rect x="593.700" y="294.600" width="31.800" height="4.200" rx=".6"/><path d="M596 296.800h27.200" stroke-dasharray="1.200 .8" stroke-width="1"/><path d="M599.700 299v12.800M619.400 299v12.800M599.700 308.400h19.700" stroke-width="1.300"/><rect x="600.700" y="300.400" width="17.600" height="3.600" fill="#6fe616" stroke="none"/><rect x="613.800" y="301.400" width="3.400" height="1.400" fill="#26272c" stroke="none"/></g><rect x="596.600" y="356.0" width="25.600" height="11.700" rx="1" fill="none" stroke="#17cc3e" stroke-width="1.300"/><rect x="597.400" y="363.7" width="24" height="3.400" fill="#17cc3e"/><rect x="599" y="363.1" width="21" height="1.500" fill="#1a4a26"/><rect x="599.45" y="358.3" width="1.100" height="1.100" fill="#17cc3e"/><rect x="601.25" y="358.3" width="1.100" height="1.100" fill="#17cc3e"/><rect x="604.05" y="358.3" width="1.100" height="1.100" fill="#17cc3e"/><rect x="605.85" y="358.3" width="1.100" height="1.100" fill="#17cc3e"/><rect x="608.45" y="358.3" width="1.100" height="1.100" fill="#17cc3e"/><rect x="610.25" y="358.3" width="1.100" height="1.100" fill="#17cc3e"/><rect x="612.85" y="358.3" width="1.100" height="1.100" fill="#17cc3e"/><rect x="614.65" y="358.3" width="1.100" height="1.100" fill="#17cc3e"/><rect x="617.45" y="358.3" width="1.100" height="1.100" fill="#17cc3e"/><rect x="619.05" y="358.3" width="1.100" height="1.100" fill="#17cc3e"/><rect x="599.45" y="360.6" width="1.100" height="1.100" fill="#17cc3e"/><rect x="601.25" y="360.6" width="1.100" height="1.100" fill="#17cc3e"/><rect x="604.05" y="360.6" width="1.100" height="1.100" fill="#17cc3e"/><rect x="605.85" y="360.6" width="1.100" height="1.100" fill="#17cc3e"/><rect x="608.45" y="360.6" width="1.100" height="1.100" fill="#17cc3e"/><rect x="610.25" y="360.6" width="1.100" height="1.100" fill="#17cc3e"/><rect x="612.85" y="360.6" width="1.100" height="1.100" fill="#17cc3e"/><rect x="614.65" y="360.6" width="1.100" height="1.100" fill="#17cc3e"/><rect x="617.45" y="360.6" width="1.100" height="1.100" fill="#17cc3e"/><rect x="619.05" y="360.6" width="1.100" height="1.100" fill="#17cc3e"/><path d="M602.200 368.0L617.400 382.2M616.800 368.0L601.200 382.2" stroke="#17cc3e" stroke-width="1.300" stroke-linecap="round" fill="none"/><circle cx="601.200" cy="382.3" r="1.100" fill="#17cc3e"/><circle cx="617.400" cy="382.3" r="1.100" fill="#17cc3e"/><rect x="596.600" y="497.5" width="25.600" height="11.700" rx="1" fill="none" stroke="#17cc3e" stroke-width="1.300"/><rect x="597.400" y="505.2" width="24" height="3.400" fill="#17cc3e"/><rect x="599" y="504.6" width="21" height="1.500" fill="#1a4a26"/><rect x="599.45" y="499.8" width="1.100" height="1.100" fill="#17cc3e"/><rect x="601.25" y="499.8" width="1.100" height="1.100" fill="#17cc3e"/><rect x="604.05" y="499.8" width="1.100" height="1.100" fill="#17cc3e"/><rect x="605.85" y="499.8" width="1.100" height="1.100" fill="#17cc3e"/><rect x="608.45" y="499.8" width="1.100" height="1.100" fill="#17cc3e"/><rect x="610.25" y="499.8" width="1.100" height="1.100" fill="#17cc3e"/><rect x="612.85" y="499.8" width="1.100" height="1.100" fill="#17cc3e"/><rect x="614.65" y="499.8" width="1.100" height="1.100" fill="#17cc3e"/><rect x="617.45" y="499.8" width="1.100" height="1.100" fill="#17cc3e"/><rect x="619.05" y="499.8" width="1.100" height="1.100" fill="#17cc3e"/><rect x="599.45" y="502.1" width="1.100" height="1.100" fill="#17cc3e"/><rect x="601.25" y="502.1" width="1.100" height="1.100" fill="#17cc3e"/><rect x="604.05" y="502.1" width="1.100" height="1.100" fill="#17cc3e"/><rect x="605.85" y="502.1" width="1.100" height="1.100" fill="#17cc3e"/><rect x="608.45" y="502.1" width="1.100" height="1.100" fill="#17cc3e"/><rect x="610.25" y="502.1" width="1.100" height="1.100" fill="#17cc3e"/><rect x="612.85" y="502.1" width="1.100" height="1.100" fill="#17cc3e"/><rect x="614.65" y="502.1" width="1.100" height="1.100" fill="#17cc3e"/><rect x="617.45" y="502.1" width="1.100" height="1.100" fill="#17cc3e"/><rect x="619.05" y="502.1" width="1.100" height="1.100" fill="#17cc3e"/><path d="M602.200 509.5L617.400 523.7M616.800 509.5L601.200 523.7" stroke="#17cc3e" stroke-width="1.300" stroke-linecap="round" fill="none"/><circle cx="601.200" cy="523.8" r="1.100" fill="#17cc3e"/><circle cx="617.400" cy="523.8" r="1.100" fill="#17cc3e"/><path d="M593.300 429.5h25.600l6.600 2.300v6.700h-32.200z" fill="#1fdc3c" stroke="#1fdc3c" stroke-width="1" stroke-linejoin="round"/><rect x="601.500" y="434.4" width="22" height="2.700" fill="#17702a"/><path d="M602.400 435.7h20.400" stroke="#1fdc3c" stroke-width="1" stroke-dasharray="3 .7"/><path d="M594.600 430.8h10.200v2h-5v2.400h-5.200z" fill="#102a16"/><rect x="595.300" y="431.5" width="1.200" height="1.200" fill="#1fdc3c"/><rect x="597.600" y="431.5" width="1.200" height="1.200" fill="#1fdc3c"/><path d="M602.200 439.0L617.400 453.0M616.800 439.0L601.200 453.0" stroke="#1fdc3c" stroke-width="1.300" stroke-linecap="round" fill="none"/><circle cx="601.200" cy="453.1" r="1.100" fill="#1fdc3c"/><circle cx="617.400" cy="453.1" r="1.100" fill="#1fdc3c"/><g transform="translate(0 0.00)" fill="#14f2f4"><ellipse cx="609.200" cy="575.800" rx="6.800" ry="8.400"/><path d="M606 582h6.400v3.200c0 .9.500 1.400 1.500 1.700l2.700.8c1.300.4 2 1.300 2 2.500v4H596.300c.3-3.300 1.800-5.600 4.800-6.600l3.400-1c1-.3 1.500-.8 1.500-1.700z"/><path d="M618.300 588.500h5v4.600a2.500 2.500 0 0 1-5 0z"/><path d="M618.300 587.400v-3.400a2.500 2.500 0 0 1 5 0v3.400z" fill="none" stroke="#14f2f4" stroke-width="1"/><rect x="619.300" y="583" width="3" height="2.600" rx="1" fill="#14f2f4" opacity=".75"/><path d="M617.600 587.600h6.400" stroke="#151618" stroke-width=".9"/></g><g transform="translate(605.400 655.32) rotate(-42.2) scale(.96 .88)"><path d="M-1 0H23" stroke="#14f2f4" stroke-width="2.100" stroke-linecap="round" fill="none"/><path d="M22.400,-1.300 l1.300,-1.400 2,.3 1.300,1.500 -.2,2 -1.600,1.200 -1.900,-.2 -1.100,-1.500z" fill="#14f2f4" stroke="#14f2f4" stroke-width=".9" stroke-linejoin="round"/><path d="M3.5,-3.6 C1.5,-4.5 -1,-4.100 -2.5,-3.300 C-4,-2.600 -5,-3.200 -6.5,-4.300 C-9,-6 -13,-5.800 -15.200,-3.300 C-17.300,-0.800 -16.900,3 -14.600,4.900 C-12,6.800 -8.600,5.900 -6.600,4.200 C-5.200,3 -4,2.900 -2.600,3.500 C-1,4.200 1.300,4.400 2.500,3.700 C2.900,3.400 2.600,2.800 1.900,2.700 C0.400,2.500 -0.600,1.900 -0.800,1.100 L-0.800,-1.100 C-0.400,-1.900 1,-2.700 3.200,-2.900 C3.900,-3 4.100,-3.400 3.500,-3.600 Z" fill="#14f2f4" stroke="#14f2f4" stroke-width=".5"/><path d="M-9.600,-1.200 L-3.800,-1.600 L-3.200,2.200 L-7.200,3.400 Z" fill="#0f1a12"/><circle cx="-13" cy="1.600" r="1.250" fill="#0f1a12"/><path d="M-10.400,-3.600 L-9,-1" stroke="#0f1a12" stroke-width=".7"/></g><ellipse cx="596.6" cy="732.77" rx="2.60" ry="2.70" fill="#14f2f4"/><ellipse cx="596.6" cy="729.27" rx="2.08" ry="2.21" fill="#14f2f4"/><rect x="595.56" y="729.52" width="2.08" height="2.45" fill="#14f2f4"/><path d="M596.6 721.64V736.04" stroke="#14f2f4" stroke-width="0.80"/><circle cx="596.6" cy="721.84" r="0.90" fill="#14f2f4"/><path d="M596.6 727.88V734.24" stroke="#151618" stroke-width=".55"/><ellipse cx="603" cy="732.39" rx="3.00" ry="2.92" fill="#14f2f4"/><ellipse cx="603" cy="728.78" rx="2.40" ry="2.39" fill="#14f2f4"/><rect x="601.80" y="729.05" width="2.40" height="2.65" fill="#14f2f4"/><path d="M603 720.44V736.04" stroke="#14f2f4" stroke-width="0.80"/><circle cx="603" cy="720.64" r="0.96" fill="#14f2f4"/><path d="M603 727.28V734.24" stroke="#151618" stroke-width=".55"/><ellipse cx="610.4" cy="731.91" rx="3.50" ry="4.14" fill="#14f2f4"/><ellipse cx="610.4" cy="726.08" rx="2.80" ry="3.39" fill="#14f2f4"/><rect x="609.00" y="726.46" width="2.80" height="3.76" fill="#14f2f4"/><path d="M610.4 713.84V736.04" stroke="#14f2f4" stroke-width="0.91"/><circle cx="610.4" cy="714.04" r="1.12" fill="#14f2f4"/><path d="M610.4 723.95V734.24" stroke="#151618" stroke-width=".55"/><ellipse cx="619.9" cy="731.19" rx="4.90" ry="4.69" fill="#14f2f4"/><ellipse cx="619.9" cy="725.46" rx="3.92" ry="3.84" fill="#14f2f4"/><rect x="617.94" y="725.88" width="3.92" height="4.27" fill="#14f2f4"/><path d="M619.9 711.44V736.64" stroke="#14f2f4" stroke-width="1.27"/><circle cx="619.9" cy="711.64" r="1.57" fill="#14f2f4"/><path d="M619.9 723.04V734.84" stroke="#151618" stroke-width=".55"/></svg>
<div style="left:592.4px;top:775.36px;width:62.4px;height:35.8px;background:#212226;border-radius:6px;"></div>
<div style="left:628.2px;top:775.36px;width:1px;height:35.8px;background:#3a3b40;"></div>
<svg style="left:598px;top:785.56px;" width="24.4" height="15.6" viewBox="0 0 24.4 15.6"><rect x=".6" y=".6" width="23.200" height="14.400" fill="#12eef0" stroke="#12eef0" stroke-width="1"/><rect x="1.6" y="1.7" width="2.700" height="1.900" fill="#0a1416"/><rect x="6.0" y="1.7" width="2.700" height="1.900" fill="#0a1416"/><rect x="10.4" y="1.7" width="2.700" height="1.900" fill="#0a1416"/><rect x="1.6" y="5.1" width="2.700" height="1.900" fill="#0a1416"/><rect x="6.0" y="5.1" width="2.700" height="1.900" fill="#0a1416"/><rect x="10.4" y="5.1" width="2.700" height="1.900" fill="#0a1416"/><rect x="1.6" y="8.5" width="2.700" height="1.900" fill="#0a1416"/><rect x="6.0" y="8.5" width="2.700" height="1.900" fill="#0a1416"/><rect x="10.4" y="8.5" width="2.700" height="1.900" fill="#0a1416"/><rect x="14.600" y="1.700" width="8" height="4.600" fill="#2a3a3e"/><rect x="1.60" y="12" width="1.500" height="1.800" fill="#0a1416"/><rect x="4.35" y="12" width="1.500" height="1.800" fill="#0a1416"/><rect x="7.10" y="12" width="1.500" height="1.800" fill="#0a1416"/><rect x="9.85" y="12" width="1.500" height="1.800" fill="#0a1416"/><rect x="12.60" y="12" width="1.500" height="1.800" fill="#0a1416"/><rect x="15.35" y="12" width="1.500" height="1.800" fill="#0a1416"/><rect x="18.10" y="12" width="1.500" height="1.800" fill="#0a1416"/><rect x="20.85" y="12" width="1.500" height="1.800" fill="#0a1416"/><rect x="14.20" y="8.400" width=".9" height=".9" fill="#0a1416"/><rect x="16.10" y="8.400" width=".9" height=".9" fill="#0a1416"/><rect x="18.00" y="8.400" width=".9" height=".9" fill="#0a1416"/><rect x="19.90" y="8.400" width=".9" height=".9" fill="#0a1416"/><rect x="21.80" y="8.400" width=".9" height=".9" fill="#0a1416"/></svg>
<svg style="left:636px;top:784.36px;" width="12" height="18" viewBox="0 0 12 18"><path d="M3.200 3.300L9.600 9l-6.400 5.700" fill="none" stroke="#f2f2f4" stroke-width="1.500" stroke-linecap="round" stroke-linejoin="round"/></svg>
<div style="left:669px;top:153.5px;width:541px;height:668px;background:#151618;"></div>
<div style="left:669px;top:548.2px;width:541px;height:70.72px;background:#0f1012;"></div>
<svg style="left:0px;top:0px;" width="1296" height="929" viewBox="0 0 1296 929"><rect x="668.70" y="195" width="1" height="626" fill="#2b2c30"/><rect x="685.57" y="195" width="1" height="626" fill="#202125"/><rect x="702.44" y="195" width="1" height="626" fill="#202125"/><rect x="719.30" y="195" width="1" height="626" fill="#202125"/><rect x="736.17" y="195" width="1" height="626" fill="#2b2c30"/><rect x="753.04" y="195" width="1" height="626" fill="#202125"/><rect x="769.91" y="195" width="1" height="626" fill="#202125"/><rect x="786.77" y="195" width="1" height="626" fill="#202125"/><rect x="803.64" y="195" width="1" height="626" fill="#2b2c30"/><rect x="820.51" y="195" width="1" height="626" fill="#202125"/><rect x="837.38" y="195" width="1" height="626" fill="#202125"/><rect x="854.24" y="195" width="1" height="626" fill="#202125"/><rect x="871.11" y="195" width="1" height="626" fill="#2b2c30"/><rect x="887.98" y="195" width="1" height="626" fill="#202125"/><rect x="904.85" y="195" width="1" height="626" fill="#202125"/><rect x="921.71" y="195" width="1" height="626" fill="#202125"/><rect x="938.58" y="195" width="1" height="626" fill="#2b2c30"/><rect x="955.45" y="195" width="1" height="626" fill="#202125"/><rect x="972.32" y="195" width="1" height="626" fill="#202125"/><rect x="989.18" y="195" width="1" height="626" fill="#202125"/><rect x="1006.05" y="195" width="1" height="626" fill="#2b2c30"/><rect x="1022.92" y="195" width="1" height="626" fill="#202125"/><rect x="1039.79" y="195" width="1" height="626" fill="#202125"/><rect x="1056.65" y="195" width="1" height="626" fill="#202125"/><rect x="1073.52" y="195" width="1" height="626" fill="#2b2c30"/><rect x="1090.39" y="195" width="1" height="626" fill="#202125"/><rect x="1107.26" y="195" width="1" height="626" fill="#202125"/><rect x="1124.12" y="195" width="1" height="626" fill="#202125"/><rect x="1140.99" y="195" width="1" height="626" fill="#2b2c30"/><rect x="1157.86" y="195" width="1" height="626" fill="#202125"/><rect x="1174.72" y="195" width="1" height="626" fill="#202125"/><rect x="1191.59" y="195" width="1" height="626" fill="#202125"/></svg>
<div style="left:669px;top:264.82px;width:539px;height:1px;background:#0c0d0f;"></div>
<div style="left:669px;top:335.54px;width:539px;height:1px;background:#0c0d0f;"></div>
<div style="left:669px;top:406.26px;width:539px;height:1px;background:#0c0d0f;"></div>
<div style="left:669px;top:476.98px;width:539px;height:1px;background:#0c0d0f;"></div>
<div style="left:669px;top:547.7px;width:539px;height:1px;background:#0c0d0f;"></div>
<div style="left:669px;top:618.42px;width:539px;height:1px;background:#0c0d0f;"></div>
<div style="left:669px;top:689.14px;width:539px;height:1px;background:#0c0d0f;"></div>
<div style="left:669px;top:759.86px;width:539px;height:1px;background:#0c0d0f;"></div>
<div style="left:669px;top:153.5px;width:539px;height:1.2px;background:#1b1c1f;"></div>
<div style="left:669px;top:154.2px;width:472.6px;height:20.1px;background:#e6ad0a;"></div>
<div style="left:1141.6px;top:154.2px;width:68.4px;height:20.1px;background:#18191c;"></div>
<div style="left:669px;top:174.3px;width:539px;height:20.3px;background:#101113;"></div>
<svg style="left:0px;top:0px;" width="1296" height="929" viewBox="0 0 1296 929"><rect x="736.07" y="157" width="1.200" height="17.300" fill="#2a2208"/><rect x="736.07" y="174.300" width="1.200" height="20.300" fill="#6a6b70"/><rect x="803.54" y="157" width="1.200" height="17.300" fill="#2a2208"/><rect x="803.54" y="174.300" width="1.200" height="20.300" fill="#6a6b70"/><rect x="871.01" y="157" width="1.200" height="17.300" fill="#2a2208"/><rect x="871.01" y="174.300" width="1.200" height="20.300" fill="#6a6b70"/><rect x="938.48" y="157" width="1.200" height="17.300" fill="#2a2208"/><rect x="938.48" y="174.300" width="1.200" height="20.300" fill="#6a6b70"/><rect x="1005.95" y="157" width="1.200" height="17.300" fill="#2a2208"/><rect x="1005.95" y="174.300" width="1.200" height="20.300" fill="#6a6b70"/><rect x="1073.42" y="157" width="1.200" height="17.300" fill="#2a2208"/><rect x="1073.42" y="174.300" width="1.200" height="20.300" fill="#6a6b70"/><rect x="1140.89" y="174.300" width="1.200" height="20.300" fill="#6a6b70"/><rect x="677.13" y="190.40" width="1" height="4.2" fill="#3c3d42"/><rect x="685.57" y="186.40" width="1" height="8.2" fill="#3c3d42"/><rect x="694.00" y="190.40" width="1" height="4.2" fill="#3c3d42"/><rect x="702.44" y="186.40" width="1" height="8.2" fill="#3c3d42"/><rect x="710.87" y="190.40" width="1" height="4.2" fill="#3c3d42"/><rect x="719.30" y="186.40" width="1" height="8.2" fill="#3c3d42"/><rect x="727.74" y="190.40" width="1" height="4.2" fill="#3c3d42"/><rect x="744.60" y="190.40" width="1" height="4.2" fill="#3c3d42"/><rect x="753.04" y="186.40" width="1" height="8.2" fill="#3c3d42"/><rect x="761.47" y="190.40" width="1" height="4.2" fill="#3c3d42"/><rect x="769.91" y="186.40" width="1" height="8.2" fill="#3c3d42"/><rect x="778.34" y="190.40" width="1" height="4.2" fill="#3c3d42"/><rect x="786.77" y="186.40" width="1" height="8.2" fill="#3c3d42"/><rect x="795.21" y="190.40" width="1" height="4.2" fill="#3c3d42"/><rect x="812.07" y="190.40" width="1" height="4.2" fill="#3c3d42"/><rect x="820.51" y="186.40" width="1" height="8.2" fill="#3c3d42"/><rect x="828.94" y="190.40" width="1" height="4.2" fill="#3c3d42"/><rect x="837.38" y="186.40" width="1" height="8.2" fill="#3c3d42"/><rect x="845.81" y="190.40" width="1" height="4.2" fill="#3c3d42"/><rect x="854.24" y="186.40" width="1" height="8.2" fill="#3c3d42"/><rect x="862.68" y="190.40" width="1" height="4.2" fill="#3c3d42"/><rect x="879.54" y="190.40" width="1" height="4.2" fill="#3c3d42"/><rect x="887.98" y="186.40" width="1" height="8.2" fill="#3c3d42"/><rect x="896.41" y="190.40" width="1" height="4.2" fill="#3c3d42"/><rect x="904.85" y="186.40" width="1" height="8.2" fill="#3c3d42"/><rect x="913.28" y="190.40" width="1" height="4.2" fill="#3c3d42"/><rect x="921.71" y="186.40" width="1" height="8.2" fill="#3c3d42"/><rect x="930.15" y="190.40" width="1" height="4.2" fill="#3c3d42"/><rect x="947.01" y="190.40" width="1" height="4.2" fill="#3c3d42"/><rect x="955.45" y="186.40" width="1" height="8.2" fill="#3c3d42"/><rect x="963.88" y="190.40" width="1" height="4.2" fill="#3c3d42"/><rect x="972.32" y="186.40" width="1" height="8.2" fill="#3c3d42"/><rect x="980.75" y="190.40" width="1" height="4.2" fill="#3c3d42"/><rect x="989.18" y="186.40" width="1" height="8.2" fill="#3c3d42"/><rect x="997.62" y="190.40" width="1" height="4.2" fill="#3c3d42"/><rect x="1014.48" y="190.40" width="1" height="4.2" fill="#3c3d42"/><rect x="1022.92" y="186.40" width="1" height="8.2" fill="#3c3d42"/><rect x="1031.35" y="190.40" width="1" height="4.2" fill="#3c3d42"/><rect x="1039.79" y="186.40" width="1" height="8.2" fill="#3c3d42"/><rect x="1048.22" y="190.40" width="1" height="4.2" fill="#3c3d42"/><rect x="1056.65" y="186.40" width="1" height="8.2" fill="#3c3d42"/><rect x="1065.09" y="190.40" width="1" height="4.2" fill="#3c3d42"/><rect x="1081.95" y="190.40" width="1" height="4.2" fill="#3c3d42"/><rect x="1090.39" y="186.40" width="1" height="8.2" fill="#3c3d42"/><rect x="1098.82" y="190.40" width="1" height="4.2" fill="#3c3d42"/><rect x="1107.26" y="186.40" width="1" height="8.2" fill="#3c3d42"/><rect x="1115.69" y="190.40" width="1" height="4.2" fill="#3c3d42"/><rect x="1124.12" y="186.40" width="1" height="8.2" fill="#3c3d42"/><rect x="1132.56" y="190.40" width="1" height="4.2" fill="#3c3d42"/><rect x="1149.42" y="190.40" width="1" height="4.2" fill="#3c3d42"/><rect x="1157.86" y="186.40" width="1" height="8.2" fill="#3c3d42"/><rect x="1166.29" y="190.40" width="1" height="4.2" fill="#3c3d42"/><rect x="1174.72" y="186.40" width="1" height="8.2" fill="#3c3d42"/><rect x="1183.16" y="190.40" width="1" height="4.2" fill="#3c3d42"/><rect x="1191.59" y="186.40" width="1" height="8.2" fill="#3c3d42"/><rect x="1200.03" y="190.40" width="1" height="4.2" fill="#3c3d42"/></svg>
<span style="left:673.80px;top:156.60px;font-size:10.2px;line-height:12px;color:#1c1602;font-weight:400;">1</span>
<span style="left:741.27px;top:156.60px;font-size:10.2px;line-height:12px;color:#1c1602;font-weight:400;">2</span>
<span style="left:808.74px;top:156.60px;font-size:10.2px;line-height:12px;color:#1c1602;font-weight:400;">3</span>
<span style="left:876.21px;top:156.60px;font-size:10.2px;line-height:12px;color:#1c1602;font-weight:400;">4</span>
<span style="left:943.68px;top:156.60px;font-size:10.2px;line-height:12px;color:#1c1602;font-weight:400;">5</span>
<span style="left:1011.15px;top:156.60px;font-size:10.2px;line-height:12px;color:#1c1602;font-weight:400;">6</span>
<span style="left:1078.62px;top:156.60px;font-size:10.2px;line-height:12px;color:#1c1602;font-weight:400;">7</span>
<span style="left:1146.09px;top:156.60px;font-size:10.2px;line-height:12px;color:#8e8e93;font-weight:400;">8</span>
<div style="left:670.0px;top:195.8px;width:471.0px;height:68px;background:#52aa1e;border-radius:4px 4px 4px 4px;opacity:1"></div>
<span style="left:674.00px;top:197.60px;font-size:9.2px;line-height:11px;color:rgba(255,255,255,.92);font-weight:400;letter-spacing:0.092px;-webkit-text-stroke:0.35px rgba(255,255,255,.92);">Heavy Bass</span>
<div style="left:1142.3px;top:195.8px;width:69.7px;height:68px;background:#52aa1e;border-radius:4px 0px 0px 4px;opacity:1"></div>
<span style="left:1146.30px;top:197.60px;font-size:9.2px;line-height:11px;color:rgba(255,255,255,.92);font-weight:400;letter-spacing:0.092px;-webkit-text-stroke:0.35px rgba(255,255,255,.92);">Heavy Bass</span>
<svg style="left:0px;top:0px;" width="1296" height="929" viewBox="0 0 1296 929"><path d="M670.0,231.1 670.8,224.4 671.5,227.6 672.2,225.3 673.0,223.4 673.8,227.3 674.5,227.4 675.2,223.4 676.0,223.7 676.8,227.1 677.5,225.5 678.2,225.7 679.0,223.3 679.8,222.8 680.5,223.0 681.2,226.6 682.0,227.3 682.8,225.6 683.5,223.4 684.2,226.0 685.0,220.4 685.8,225.6 686.5,226.1 687.2,225.4 688.0,224.9 688.8,225.5 689.5,222.9 690.2,224.8 691.0,227.3 691.8,225.9 692.5,224.3 693.2,224.7 694.0,225.8 694.8,223.9 695.5,226.1 696.2,226.7 697.0,226.0 697.8,228.4 698.5,226.1 699.2,230.9 700.0,230.1 700.8,230.2 701.5,227.8 702.2,220.4 703.0,223.9 703.8,227.2 704.5,225.9 705.2,227.9 706.0,228.0 706.8,224.3 707.5,227.5 708.2,227.0 709.0,229.3 709.8,230.7 710.5,229.7 711.2,225.1 712.0,226.6 712.8,224.7 713.5,217.7 714.2,226.5 715.0,225.1 715.8,219.5 716.5,225.0 717.2,223.8 718.0,223.7 718.8,223.3 719.5,226.9 720.2,228.1 721.0,228.8 721.8,236.3 722.5,236.3 723.2,236.3 724.0,236.3 724.8,224.1 725.5,224.4 726.2,228.6 727.0,226.5 727.8,220.6 728.5,219.7 729.2,216.9 730.0,219.7 730.8,214.6 731.5,215.7 732.2,210.3 733.0,222.1 733.8,226.7 734.5,229.9 735.2,227.3 736.0,224.0 736.8,229.7 737.5,230.8 738.2,231.0 739.0,232.1 739.8,233.5 740.5,235.8 741.2,236.0 742.0,236.0 742.8,236.0 743.5,236.0 744.2,236.0 745.0,236.0 745.8,236.0 746.5,236.0 747.2,236.0 748.0,236.0 748.8,236.0 749.5,236.0 750.2,236.0 751.0,236.0 751.8,236.0 752.5,236.0 753.2,236.0 754.0,236.0 754.8,236.0 755.5,236.0 756.2,236.0 757.0,236.0 757.8,236.0 758.5,236.0 759.2,236.0 760.0,235.4 760.8,234.9 761.5,234.6 762.2,234.5 763.0,234.7 763.8,235.2 764.5,235.8 765.2,236.0 766.0,236.0 766.8,236.0 767.5,236.3 768.2,229.3 769.0,225.0 769.8,223.0 770.5,223.3 771.2,224.7 772.0,229.5 772.8,236.3 773.5,236.3 774.2,236.3 775.0,231.1 775.8,229.7 776.5,227.9 777.2,222.7 778.0,221.2 778.8,227.4 779.5,226.8 780.2,224.1 781.0,223.1 781.8,223.7 782.5,222.7 783.2,227.4 784.0,226.6 784.8,224.2 785.5,227.7 786.2,230.0 787.0,224.7 787.8,222.5 788.5,224.0 789.2,224.8 790.0,222.4 790.8,222.4 791.5,222.6 792.2,222.7 793.0,221.4 793.8,225.8 794.5,225.6 795.2,226.6 796.0,228.6 796.8,228.5 797.5,224.5 798.2,220.1 799.0,214.2 799.8,218.0 800.5,217.7 801.2,222.8 802.0,222.2 802.8,223.1 803.5,218.6 804.2,222.1 805.0,220.7 805.8,217.3 806.5,221.4 807.2,222.7 808.0,226.6 808.8,236.3 809.5,236.3 810.2,236.3 811.0,226.7 811.8,228.4 812.5,221.8 813.2,224.6 814.0,222.4 814.8,222.9 815.5,219.2 816.2,218.8 817.0,222.9 817.8,217.7 818.5,218.3 819.2,220.9 820.0,222.0 820.8,224.2 821.5,224.2 822.2,228.0 823.0,227.7 823.8,236.3 824.5,236.3 825.2,236.3 826.0,228.6 826.8,228.0 827.5,223.4 828.2,223.2 829.0,221.3 829.8,223.4 830.5,225.2 831.2,221.7 832.0,221.1 832.8,225.5 833.5,225.2 834.2,222.5 835.0,224.6 835.8,226.5 836.5,228.8 837.2,224.2 838.0,224.6 838.8,225.3 839.5,225.0 840.2,218.1 841.0,225.1 841.8,219.9 842.5,222.8 843.2,221.3 844.0,222.5 844.8,224.4 845.5,224.5 846.2,216.4 847.0,220.4 847.8,226.5 848.5,229.0 849.2,224.6 850.0,223.7 850.8,220.2 851.5,217.4 852.2,223.6 853.0,223.0 853.8,219.9 854.5,225.2 855.2,225.2 856.0,223.5 856.8,223.1 857.5,225.3 858.2,226.0 859.0,229.9 859.8,236.3 860.5,236.3 861.2,236.3 862.0,229.9 862.8,224.3 863.5,219.3 864.2,223.8 865.0,222.3 865.8,224.3 866.5,218.8 867.2,222.3 868.0,222.4 868.8,222.5 869.5,217.6 870.2,219.7 871.0,220.9 871.8,219.4 872.5,224.3 873.2,222.3 874.0,229.6 874.8,224.8 875.5,219.6 876.2,217.9 877.0,224.6 877.8,223.6 878.5,222.3 879.2,221.7 880.0,223.3 880.8,223.0 881.5,222.7 882.2,221.6 883.0,223.6 883.8,224.0 884.5,229.0 885.2,231.1 886.0,230.2 886.8,228.3 887.5,226.3 888.2,226.2 889.0,225.9 889.8,224.2 890.5,226.0 891.2,226.6 892.0,225.3 892.8,227.1 893.5,221.7 894.2,223.1 895.0,225.5 895.8,226.9 896.5,227.6 897.2,232.1 898.0,230.5 898.8,229.9 899.5,227.8 900.2,225.8 901.0,226.9 901.8,227.0 902.5,226.4 903.2,230.1 904.0,230.0 904.8,229.5 905.5,229.5 906.2,230.1 907.0,230.2 907.8,231.2 908.5,230.0 909.2,231.8 910.0,233.3 910.8,234.3 911.5,236.0 912.2,236.0 913.0,236.0 913.8,236.0 914.5,236.0 915.2,236.0 916.0,236.0 916.8,236.0 917.5,236.0 918.2,236.0 919.0,236.0 919.8,236.0 920.5,236.0 921.2,236.0 922.0,236.0 922.8,236.0 923.5,236.0 924.2,236.0 925.0,236.0 925.8,236.0 926.5,236.0 927.2,236.0 928.0,235.5 928.8,235.0 929.5,234.7 930.2,234.6 931.0,234.8 931.8,235.3 932.5,235.9 933.2,236.0 934.0,236.0 934.8,236.0 935.5,236.0 936.2,236.3 937.0,229.2 937.8,227.4 938.5,226.4 939.2,220.2 940.0,223.8 940.8,223.3 941.5,220.2 942.2,224.4 943.0,217.8 943.8,224.0 944.5,220.2 945.2,223.3 946.0,224.1 946.8,223.6 947.5,222.4 948.2,223.6 949.0,225.9 949.8,228.3 950.5,227.4 951.2,224.5 952.0,220.5 952.8,223.8 953.5,219.8 954.2,215.0 955.0,220.4 955.8,214.3 956.5,219.8 957.2,220.5 958.0,223.6 958.8,217.8 959.5,219.0 960.2,223.0 961.0,224.1 961.8,228.7 962.5,228.4 963.2,226.5 964.0,225.8 964.8,224.0 965.5,225.7 966.2,221.1 967.0,223.0 967.8,223.6 968.5,218.6 969.2,222.4 970.0,220.0 970.8,223.7 971.5,227.4 972.2,231.6 973.0,231.4 973.8,230.8 974.5,230.1 975.2,229.1 976.0,227.2 976.8,227.2 977.5,227.1 978.2,227.6 979.0,224.5 979.8,226.1 980.5,228.8 981.2,230.8 982.0,229.4 982.8,224.1 983.5,221.0 984.2,218.3 985.0,213.6 985.8,222.6 986.5,218.1 987.2,222.9 988.0,219.0 988.8,222.7 989.5,221.8 990.2,221.8 991.0,220.9 991.8,219.4 992.5,219.1 993.2,221.1 994.0,220.4 994.8,218.6 995.5,224.4 996.2,215.7 997.0,218.9 997.8,222.4 998.5,214.5 999.2,221.9 1000.0,221.1 1000.8,214.0 1001.5,220.4 1002.2,221.5 1003.0,221.7 1003.8,218.3 1004.5,220.5 1005.2,224.3 1006.0,220.5 1006.8,224.1 1007.5,225.2 1008.2,228.3 1009.0,230.1 1009.8,231.1 1010.5,230.6 1011.2,233.7 1012.0,234.9 1012.8,236.1 1013.5,236.0 1014.2,236.0 1015.0,236.0 1015.8,236.0 1016.5,236.0 1017.2,236.0 1018.0,236.0 1018.8,236.0 1019.5,236.0 1020.2,236.0 1021.0,236.0 1021.8,236.0 1022.5,236.0 1023.2,236.0 1024.0,236.0 1024.8,236.0 1025.5,236.0 1026.2,236.0 1027.0,236.0 1027.8,236.0 1028.5,235.8 1029.2,235.1 1030.0,234.7 1030.8,234.4 1031.5,234.5 1032.2,234.8 1033.0,235.4 1033.8,236.0 1034.5,236.0 1035.2,236.0 1036.0,236.0 1036.8,236.3 1037.5,228.5 1038.2,223.7 1039.0,224.6 1039.8,225.8 1040.5,226.3 1041.2,236.3 1042.0,236.3 1042.8,236.3 1043.5,236.3 1044.2,236.3 1045.0,231.1 1045.8,227.9 1046.5,227.9 1047.2,226.7 1048.0,226.7 1048.8,227.6 1049.5,226.0 1050.2,225.0 1051.0,229.5 1051.8,230.1 1052.5,231.6 1053.2,232.0 1054.0,228.7 1054.8,228.5 1055.5,223.5 1056.2,225.9 1057.0,224.0 1057.8,225.0 1058.5,223.5 1059.2,222.6 1060.0,222.3 1060.8,226.4 1061.5,229.2 1062.2,228.7 1063.0,224.6 1063.8,226.8 1064.5,224.4 1065.2,224.7 1066.0,221.9 1066.8,225.2 1067.5,223.3 1068.2,227.1 1069.0,226.1 1069.8,230.3 1070.5,236.3 1071.2,236.3 1072.0,236.3 1072.8,236.3 1073.5,224.5 1074.2,224.6 1075.0,223.8 1075.8,221.3 1076.5,224.9 1077.2,226.1 1078.0,221.7 1078.8,221.6 1079.5,229.1 1080.2,228.0 1081.0,224.7 1081.8,220.5 1082.5,216.9 1083.2,221.3 1084.0,218.3 1084.8,222.0 1085.5,226.7 1086.2,231.5 1087.0,230.3 1087.8,232.1 1088.5,230.1 1089.2,228.7 1090.0,224.0 1090.8,225.3 1091.5,227.0 1092.2,225.7 1093.0,226.8 1093.8,229.4 1094.5,230.6 1095.2,231.3 1096.0,227.2 1096.8,220.0 1097.5,217.0 1098.2,212.2 1099.0,212.8 1099.8,222.7 1100.5,220.9 1101.2,225.6 1102.0,225.5 1102.8,223.4 1103.5,225.1 1104.2,220.9 1105.0,221.9 1105.8,224.0 1106.5,226.0 1107.2,226.3 1108.0,229.7 1108.8,230.6 1109.5,228.9 1110.2,226.5 1111.0,225.2 1111.8,221.2 1112.5,220.9 1113.2,224.4 1114.0,225.3 1114.8,221.4 1115.5,223.6 1116.2,221.7 1117.0,221.2 1117.8,223.9 1118.5,225.0 1119.2,222.0 1120.0,223.7 1120.8,227.3 1121.5,227.4 1122.2,225.8 1123.0,223.3 1123.8,222.2 1124.5,221.0 1125.2,225.2 1126.0,226.7 1126.8,222.5 1127.5,224.1 1128.2,225.2 1129.0,222.9 1129.8,227.9 1130.5,225.5 1131.2,226.7 1132.0,226.6 1132.8,222.7 1133.5,220.1 1134.2,221.2 1135.0,221.6 1135.8,221.9 1136.5,220.0 1137.2,222.1 1138.0,222.6 1138.8,223.0 1139.5,221.9 1140.2,221.3 1141.0,229.3 L1141.0,243.0 1140.2,244.8 1139.5,247.3 1138.8,249.5 1138.0,250.0 1137.2,250.1 1136.5,249.0 1135.8,248.9 1135.0,251.3 1134.2,248.4 1133.5,254.2 1132.8,254.0 1132.0,248.6 1131.2,244.5 1130.5,244.3 1129.8,250.8 1129.0,251.8 1128.2,248.5 1127.5,246.7 1126.8,250.2 1126.0,249.5 1125.2,249.6 1124.5,246.6 1123.8,250.6 1123.0,246.9 1122.2,246.3 1121.5,246.7 1120.8,246.0 1120.0,248.5 1119.2,248.3 1118.5,252.8 1117.8,247.9 1117.0,250.5 1116.2,249.7 1115.5,252.2 1114.8,248.5 1114.0,247.8 1113.2,247.5 1112.5,249.5 1111.8,251.4 1111.0,246.6 1110.2,243.9 1109.5,246.5 1108.8,242.9 1108.0,245.3 1107.2,247.8 1106.5,248.0 1105.8,248.8 1105.0,249.7 1104.2,247.5 1103.5,252.6 1102.8,253.1 1102.0,250.6 1101.2,247.3 1100.5,251.0 1099.8,251.8 1099.0,257.6 1098.2,254.1 1097.5,260.7 1096.8,249.1 1096.0,252.1 1095.2,243.4 1094.5,242.0 1093.8,243.0 1093.0,243.6 1092.2,247.6 1091.5,246.0 1090.8,245.7 1090.0,248.3 1089.2,247.4 1088.5,244.4 1087.8,243.0 1087.0,243.4 1086.2,242.9 1085.5,246.0 1084.8,250.7 1084.0,253.5 1083.2,250.1 1082.5,255.4 1081.8,249.2 1081.0,248.1 1080.2,245.5 1079.5,244.3 1078.8,247.9 1078.0,248.9 1077.2,249.4 1076.5,247.9 1075.8,251.7 1075.0,253.8 1074.2,247.4 1073.5,244.7 1072.8,237.3 1072.0,237.3 1071.2,237.3 1070.5,237.3 1069.8,243.5 1069.0,247.0 1068.2,248.9 1067.5,250.6 1066.8,246.8 1066.0,248.7 1065.2,249.4 1064.5,246.0 1063.8,249.4 1063.0,244.1 1062.2,243.7 1061.5,247.3 1060.8,246.1 1060.0,251.6 1059.2,247.5 1058.5,247.8 1057.8,246.7 1057.0,247.7 1056.2,249.5 1055.5,248.8 1054.8,244.6 1054.0,242.1 1053.2,245.0 1052.5,243.1 1051.8,242.0 1051.0,243.7 1050.2,246.7 1049.5,246.6 1048.8,247.3 1048.0,245.7 1047.2,245.4 1046.5,247.4 1045.8,243.4 1045.0,243.5 1044.2,237.3 1043.5,237.3 1042.8,237.3 1042.0,237.3 1041.2,237.3 1040.5,243.6 1039.8,248.4 1039.0,250.1 1038.2,248.5 1037.5,245.8 1036.8,237.3 1036.0,237.6 1035.2,237.6 1034.5,237.6 1033.8,237.6 1033.0,238.2 1032.2,238.7 1031.5,239.0 1030.8,239.1 1030.0,238.8 1029.2,238.4 1028.5,237.7 1027.8,237.6 1027.0,237.6 1026.2,237.6 1025.5,237.6 1024.8,237.6 1024.0,237.6 1023.2,237.6 1022.5,237.6 1021.8,237.6 1021.0,237.6 1020.2,237.6 1019.5,237.6 1018.8,237.6 1018.0,237.6 1017.2,237.6 1016.5,237.6 1015.8,237.6 1015.0,237.6 1014.2,237.6 1013.5,237.6 1012.8,237.5 1012.0,238.6 1011.2,239.9 1010.5,241.2 1009.8,240.7 1009.0,243.4 1008.2,245.9 1007.5,250.5 1006.8,247.9 1006.0,248.8 1005.2,253.2 1004.5,248.9 1003.8,253.3 1003.0,251.5 1002.2,249.9 1001.5,248.6 1000.8,255.0 1000.0,249.9 999.2,248.5 998.5,256.8 997.8,251.3 997.0,253.1 996.2,252.0 995.5,253.1 994.8,252.4 994.0,257.4 993.2,250.8 992.5,252.6 991.8,250.4 991.0,250.5 990.2,252.2 989.5,250.7 988.8,253.6 988.0,251.4 987.2,254.2 986.5,252.7 985.8,252.7 985.0,254.7 984.2,251.5 983.5,249.9 982.8,249.8 982.0,244.6 981.2,242.3 980.5,242.5 979.8,247.6 979.0,248.9 978.2,252.3 977.5,248.6 976.8,249.1 976.0,251.7 975.2,243.9 974.5,245.1 973.8,243.7 973.0,242.7 972.2,240.8 971.5,248.1 970.8,247.1 970.0,249.8 969.2,247.9 968.5,251.2 967.8,251.1 967.0,250.0 966.2,250.2 965.5,248.6 964.8,251.8 964.0,251.6 963.2,248.4 962.5,245.2 961.8,244.2 961.0,249.2 960.2,250.3 959.5,258.0 958.8,252.1 958.0,252.2 957.2,248.3 956.5,254.9 955.8,254.3 955.0,252.7 954.2,250.3 953.5,253.0 952.8,256.5 952.0,258.0 951.2,248.6 950.5,249.9 949.8,244.5 949.0,245.6 948.2,250.9 947.5,249.7 946.8,254.4 946.0,256.9 945.2,249.4 944.5,257.0 943.8,249.0 943.0,257.0 942.2,248.3 941.5,254.1 940.8,250.2 940.0,248.6 939.2,248.7 938.5,250.6 937.8,246.0 937.0,248.0 936.2,237.3 935.5,237.6 934.8,237.6 934.0,237.6 933.2,237.6 932.5,237.7 931.8,238.3 931.0,238.7 930.2,238.9 929.5,238.8 928.8,238.6 928.0,238.1 927.2,237.6 926.5,237.6 925.8,237.6 925.0,237.6 924.2,237.6 923.5,237.6 922.8,237.6 922.0,237.6 921.2,237.6 920.5,237.6 919.8,237.6 919.0,237.6 918.2,237.6 917.5,237.6 916.8,237.6 916.0,237.6 915.2,237.6 914.5,237.6 913.8,237.6 913.0,237.6 912.2,237.6 911.5,237.6 910.8,239.2 910.0,239.6 909.2,240.1 908.5,240.8 907.8,243.5 907.0,242.1 906.2,244.2 905.5,243.6 904.8,244.4 904.0,243.2 903.2,244.8 902.5,246.3 901.8,244.5 901.0,248.4 900.2,246.2 899.5,247.2 898.8,244.9 898.0,244.1 897.2,242.6 896.5,245.0 895.8,246.0 895.0,246.8 894.2,246.1 893.5,247.4 892.8,248.0 892.0,246.5 891.2,250.3 890.5,248.9 889.8,252.2 889.0,247.7 888.2,245.6 887.5,248.6 886.8,244.1 886.0,245.7 885.2,242.9 884.5,245.8 883.8,247.2 883.0,252.9 882.2,248.7 881.5,250.6 880.8,247.8 880.0,250.4 879.2,250.8 878.5,248.8 877.8,248.1 877.0,248.8 876.2,252.0 875.5,247.2 874.8,244.9 874.0,245.8 873.2,245.8 872.5,250.8 871.8,248.9 871.0,251.2 870.2,251.2 869.5,251.4 868.8,258.4 868.0,251.5 867.2,253.3 866.5,253.9 865.8,256.0 865.0,251.7 864.2,249.7 863.5,255.5 862.8,246.1 862.0,245.8 861.2,237.3 860.5,237.3 859.8,237.3 859.0,243.8 858.2,247.9 857.5,248.7 856.8,252.2 856.0,248.6 855.2,252.2 854.5,249.8 853.8,250.4 853.0,250.1 852.2,251.0 851.5,248.9 850.8,252.2 850.0,249.4 849.2,247.1 848.5,245.8 847.8,245.5 847.0,245.5 846.2,247.9 845.5,252.7 844.8,250.7 844.0,249.9 843.2,251.8 842.5,254.5 841.8,248.8 841.0,248.5 840.2,248.3 839.5,249.6 838.8,252.7 838.0,248.5 837.2,253.1 836.5,247.2 835.8,244.6 835.0,244.9 834.2,252.3 833.5,247.2 832.8,253.0 832.0,248.5 831.2,248.5 830.5,251.6 829.8,251.5 829.0,247.4 828.2,249.4 827.5,252.5 826.8,245.9 826.0,243.6 825.2,237.3 824.5,237.3 823.8,237.3 823.0,244.1 822.2,244.5 821.5,250.3 820.8,248.2 820.0,251.2 819.2,254.9 818.5,250.5 817.8,248.5 817.0,252.8 816.2,248.4 815.5,251.9 814.8,252.3 814.0,249.4 813.2,249.2 812.5,251.0 811.8,245.1 811.0,243.5 810.2,237.3 809.5,237.3 808.8,237.3 808.0,245.1 807.2,250.0 806.5,253.3 805.8,254.0 805.0,249.9 804.2,251.6 803.5,252.1 802.8,258.7 802.0,252.8 801.2,254.7 800.5,251.6 799.8,253.3 799.0,255.1 798.2,251.7 797.5,247.4 796.8,244.2 796.0,245.5 795.2,247.0 794.5,247.3 793.8,254.4 793.0,250.6 792.2,251.4 791.5,247.3 790.8,247.0 790.0,248.8 789.2,247.7 788.5,248.0 787.8,249.0 787.0,245.3 786.2,244.1 785.5,242.9 784.8,247.6 784.0,250.0 783.2,245.8 782.5,250.7 781.8,252.6 781.0,246.9 780.2,246.8 779.5,250.3 778.8,251.9 778.0,248.8 777.2,247.8 776.5,249.0 775.8,244.6 775.0,241.6 774.2,237.3 773.5,237.3 772.8,237.3 772.0,244.3 771.2,244.2 770.5,247.7 769.8,247.9 769.0,247.0 768.2,245.6 767.5,237.3 766.8,237.6 766.0,237.6 765.2,237.6 764.5,237.7 763.8,238.3 763.0,238.8 762.2,239.0 761.5,238.9 760.8,238.6 760.0,238.1 759.2,237.6 758.5,237.6 757.8,237.6 757.0,237.6 756.2,237.6 755.5,237.6 754.8,237.6 754.0,237.6 753.2,237.6 752.5,237.6 751.8,237.6 751.0,237.6 750.2,237.6 749.5,237.6 748.8,237.6 748.0,237.6 747.2,237.6 746.5,237.6 745.8,237.6 745.0,237.6 744.2,237.6 743.5,237.6 742.8,237.6 742.0,237.6 741.2,237.6 740.5,237.8 739.8,240.2 739.0,241.7 738.2,243.2 737.5,244.9 736.8,244.2 736.0,244.7 735.2,244.8 734.5,244.7 733.8,246.1 733.0,250.4 732.2,251.6 731.5,255.7 730.8,253.3 730.0,256.4 729.2,256.0 728.5,255.8 727.8,253.8 727.0,252.2 726.2,247.5 725.5,249.1 724.8,246.1 724.0,237.3 723.2,237.3 722.5,237.3 721.8,237.3 721.0,244.1 720.2,246.6 719.5,251.0 718.8,248.2 718.0,248.3 717.2,250.0 716.5,246.6 715.8,247.8 715.0,249.3 714.2,248.6 713.5,246.8 712.8,251.3 712.0,247.5 711.2,244.6 710.5,245.6 709.8,242.2 709.0,245.9 708.2,248.2 707.5,246.2 706.8,251.7 706.0,248.7 705.2,247.4 704.5,246.2 703.8,248.1 703.0,246.8 702.2,245.6 701.5,245.6 700.8,243.5 700.0,242.8 699.2,242.4 698.5,243.3 697.8,245.4 697.0,249.3 696.2,251.3 695.5,246.6 694.8,245.7 694.0,248.3 693.2,247.0 692.5,249.9 691.8,250.3 691.0,248.4 690.2,245.7 689.5,251.6 688.8,248.8 688.0,248.4 687.2,247.9 686.5,249.9 685.8,253.3 685.0,250.8 684.2,249.6 683.5,252.8 682.8,246.3 682.0,253.1 681.2,249.3 680.5,249.7 679.8,248.6 679.0,248.7 678.2,247.2 677.5,248.4 676.8,246.2 676.0,247.6 675.2,248.8 674.5,249.5 673.8,249.0 673.0,247.9 672.2,248.5 671.5,248.6 670.8,243.3 670.0,243.0Z" fill="#d2f5ba"/><path d="M1142.3,235.8 1143.0,235.8 1143.8,234.9 1144.5,234.2 1145.3,234.5 1146.0,235.5 1146.8,236.3 1147.5,236.3 1148.3,226.2 1149.0,224.7 1149.8,223.0 1150.5,218.6 1151.3,223.2 1152.0,218.8 1152.8,221.0 1153.5,223.0 1154.3,223.5 1155.0,222.9 1155.8,219.4 1156.5,224.8 1157.3,223.4 1158.0,226.4 1158.8,228.3 1159.5,227.6 1160.3,225.7 1161.0,223.9 1161.8,223.3 1162.5,217.8 1163.3,221.6 1164.0,221.6 1164.8,218.5 1165.5,222.7 1166.3,223.3 1167.0,217.9 1167.8,219.2 1168.5,218.6 1169.3,221.1 1170.0,224.6 1170.8,222.4 1171.5,229.4 1172.3,229.2 1173.0,229.1 1173.8,222.3 1174.5,223.5 1175.3,225.1 1176.0,222.0 1176.8,223.0 1177.5,225.5 1178.3,226.2 1179.0,224.2 1179.8,220.3 1180.5,221.4 1181.3,222.0 1182.0,224.6 1182.8,225.3 1183.5,225.2 1184.3,226.6 1185.0,228.5 1185.8,224.3 1186.5,222.7 1187.3,219.3 1188.0,219.6 1188.8,224.1 1189.5,224.1 1190.3,223.8 1191.0,216.8 1191.8,223.8 1192.5,224.8 1193.3,220.0 1194.0,221.3 1194.8,215.5 1195.5,220.4 1196.3,219.2 1197.0,220.6 1197.8,221.1 1198.5,224.2 1199.3,228.3 1200.0,236.2 1200.8,235.4 1201.5,234.9 1202.3,234.8 1203.0,235.3 1203.8,236.1 1204.5,236.3 1205.3,230.4 1206.0,225.0 1206.8,223.8 1207.5,223.2 1208.3,224.1 1209.0,224.4 1209.8,225.6 L1209.8,248.1 1209.0,246.5 1208.3,248.6 1207.5,248.9 1206.8,248.8 1206.0,245.3 1205.3,245.8 1204.5,237.3 1203.8,237.5 1203.0,238.2 1202.3,238.7 1201.5,238.6 1200.8,238.1 1200.0,237.3 1199.3,245.5 1198.5,250.9 1197.8,253.9 1197.0,249.9 1196.3,250.4 1195.5,251.7 1194.8,253.7 1194.0,251.0 1193.3,252.8 1192.5,248.2 1191.8,251.9 1191.0,251.7 1190.3,253.3 1189.5,248.6 1188.8,252.6 1188.0,252.7 1187.3,250.8 1186.5,250.5 1185.8,246.6 1185.0,247.1 1184.3,243.9 1183.5,247.1 1182.8,251.4 1182.0,251.2 1181.3,247.2 1180.5,249.5 1179.8,251.8 1179.0,250.9 1178.3,254.3 1177.5,248.7 1176.8,249.4 1176.0,252.1 1175.3,250.3 1174.5,249.9 1173.8,250.4 1173.0,244.6 1172.3,242.4 1171.5,246.8 1170.8,247.4 1170.0,249.0 1169.3,252.5 1168.5,254.2 1167.8,255.9 1167.0,251.2 1166.3,249.0 1165.5,250.0 1164.8,256.1 1164.0,248.9 1163.3,254.8 1162.5,249.5 1161.8,249.0 1161.0,249.1 1160.3,251.9 1159.5,248.1 1158.8,247.1 1158.0,246.3 1157.3,252.4 1156.5,249.8 1155.8,253.6 1155.0,257.2 1154.3,252.5 1153.5,254.2 1152.8,249.7 1152.0,249.2 1151.3,251.2 1150.5,252.8 1149.8,250.9 1149.0,249.7 1148.3,245.7 1147.5,237.3 1146.8,237.3 1146.0,238.1 1145.3,239.0 1144.5,239.2 1143.8,238.6 1143.0,237.8 1142.3,237.8Z" fill="#d2f5ba"/></svg>
<div style="left:670.0px;top:337.2px;width:542.0px;height:68px;background:#376eaf;border-radius:4px 0px 0px 4px;opacity:1"></div>
<span style="left:674.00px;top:339.60px;font-size:9.2px;line-height:11px;color:rgba(255,255,255,.92);font-weight:400;letter-spacing:0.095px;-webkit-text-stroke:0.35px rgba(255,255,255,.92);">Synth Lead</span>
<svg style="left:0px;top:0px;" width="1296" height="929" viewBox="0 0 1296 929"><rect x="670" y="393.55" width="47.5" height="1.300" fill="#e6eef8"/><rect x="719" y="378.85" width="18.0" height="1.300" fill="#e6eef8"/><rect x="719" y="390.35" width="18.0" height="1.300" fill="#e6eef8"/><rect x="736" y="370.15" width="61.0" height="1.300" fill="#e6eef8"/><rect x="736" y="385.35" width="66.0" height="1.300" fill="#e6eef8"/><rect x="803" y="368.35" width="36.0" height="1.300" fill="#e6eef8"/><rect x="803" y="380.15" width="36.0" height="1.300" fill="#e6eef8"/><rect x="837.5" y="365.35" width="33.5" height="1.300" fill="#e6eef8"/><rect x="837.5" y="376.85" width="32.0" height="1.300" fill="#e6eef8"/><rect x="872" y="368.35" width="32.5" height="1.300" fill="#e6eef8"/><rect x="905" y="356.55" width="31.0" height="1.300" fill="#e6eef8"/><rect x="905" y="365.35" width="35.5" height="1.300" fill="#e6eef8"/><rect x="939" y="381.85" width="48.0" height="1.300" fill="#e6eef8"/><rect x="939" y="393.55" width="47.0" height="1.300" fill="#e6eef8"/><rect x="989" y="378.65" width="18.5" height="1.300" fill="#e6eef8"/><rect x="1007" y="376.85" width="57.0" height="1.300" fill="#e6eef8"/><rect x="1007" y="385.35" width="67.5" height="1.300" fill="#e6eef8"/><rect x="1074" y="368.35" width="33.0" height="1.300" fill="#e6eef8"/><rect x="1074" y="380.15" width="33.0" height="1.300" fill="#e6eef8"/><rect x="1108" y="365.35" width="33.5" height="1.300" fill="#e6eef8"/><rect x="1108" y="376.85" width="33.5" height="1.300" fill="#e6eef8"/><rect x="1176" y="361.85" width="30.0" height="1.300" fill="#e6eef8"/><rect x="1176" y="368.35" width="30.0" height="1.300" fill="#e6eef8"/></svg>
<div style="left:670.0px;top:408.0px;width:542.0px;height:68px;background:#1ba3a3;border-radius:4px 0px 0px 4px;opacity:1"></div>
<span style="left:674.00px;top:409.60px;font-size:9.2px;line-height:11px;color:rgba(255,255,255,.92);font-weight:400;letter-spacing:0.258px;-webkit-text-stroke:0.35px rgba(255,255,255,.92);">Airy Synth</span>
<svg style="left:0px;top:0px;" width="1296" height="929" viewBox="0 0 1296 929"><rect x="686" y="459.600" width="18.0" height="1.300" fill="#d8f2f2"/><rect x="719" y="459.600" width="18.5" height="1.300" fill="#d8f2f2"/><rect x="753" y="459.600" width="18.5" height="1.300" fill="#d8f2f2"/><rect x="787" y="459.600" width="21.0" height="1.300" fill="#d8f2f2"/><rect x="820.5" y="459.600" width="23.5" height="1.300" fill="#d8f2f2"/><rect x="855" y="459.600" width="16.0" height="1.300" fill="#d8f2f2"/><rect x="888" y="459.600" width="25.0" height="1.300" fill="#d8f2f2"/><rect x="922" y="459.600" width="22.0" height="1.300" fill="#d8f2f2"/><rect x="956" y="459.600" width="18.5" height="1.300" fill="#d8f2f2"/><rect x="989" y="459.600" width="19.0" height="1.300" fill="#d8f2f2"/><rect x="1024" y="459.600" width="18.5" height="1.300" fill="#d8f2f2"/><rect x="1057" y="459.600" width="22.0" height="1.300" fill="#d8f2f2"/><rect x="1091" y="459.600" width="23.0" height="1.300" fill="#d8f2f2"/><rect x="1125" y="459.600" width="17.0" height="1.300" fill="#d8f2f2"/><rect x="1159" y="459.600" width="19.0" height="1.300" fill="#d8f2f2"/><rect x="1184.5" y="459.600" width="3.0" height="1.300" fill="#d8f2f2"/><rect x="1192" y="459.600" width="16.0" height="1.300" fill="#d8f2f2"/><rect x="670" y="467.100" width="26.0" height="1.300" fill="#d8f2f2"/><rect x="703" y="467.100" width="26.0" height="1.300" fill="#d8f2f2"/><rect x="736" y="467.100" width="26.5" height="1.300" fill="#d8f2f2"/><rect x="770.5" y="467.100" width="25.0" height="1.300" fill="#d8f2f2"/><rect x="803" y="467.100" width="28.0" height="1.300" fill="#d8f2f2"/><rect x="837.5" y="467.100" width="26.5" height="1.300" fill="#d8f2f2"/><rect x="872" y="467.100" width="25.5" height="1.300" fill="#d8f2f2"/><rect x="905" y="467.100" width="27.0" height="1.300" fill="#d8f2f2"/><rect x="939" y="467.100" width="26.5" height="1.300" fill="#d8f2f2"/><rect x="972.5" y="467.100" width="25.5" height="1.300" fill="#d8f2f2"/><rect x="1006.5" y="467.100" width="26.5" height="1.300" fill="#d8f2f2"/><rect x="1040" y="467.100" width="26.0" height="1.300" fill="#d8f2f2"/><rect x="1074" y="467.100" width="27.5" height="1.300" fill="#d8f2f2"/><rect x="1108" y="467.100" width="27.0" height="1.300" fill="#d8f2f2"/><rect x="1141" y="467.100" width="27.0" height="1.300" fill="#d8f2f2"/><rect x="1175" y="467.100" width="27.0" height="1.300" fill="#d8f2f2"/></svg>
<div style="left:670.0px;top:478.7px;width:542.0px;height:68px;background:#5039b0;border-radius:4px 0px 0px 4px;opacity:1"></div>
<span style="left:674.00px;top:480.60px;font-size:9.2px;line-height:11px;color:rgba(255,255,255,.92);font-weight:400;letter-spacing:0.234px;-webkit-text-stroke:0.35px rgba(255,255,255,.92);">Arp Synth</span>
<svg style="left:0px;top:0px;" width="1296" height="929" viewBox="0 0 1296 929"><rect x="678.0" y="493.3" width="2.2" height="1.500" fill="#e4defa"/><rect x="678.0" y="522.8" width="1.3" height="1.400" fill="#e4defa"/><rect x="694.9" y="493.3" width="2.8" height="1.500" fill="#e4defa"/><rect x="694.9" y="522.8" width="2.2" height="1.400" fill="#e4defa"/><rect x="711.7" y="493.3" width="2.6" height="1.500" fill="#e4defa"/><rect x="711.7" y="522.8" width="1.3" height="1.400" fill="#e4defa"/><rect x="728.6" y="493.3" width="2.7" height="1.500" fill="#e4defa"/><rect x="728.6" y="522.8" width="2.2" height="1.400" fill="#e4defa"/><rect x="745.5" y="493.3" width="2.4" height="1.500" fill="#e4defa"/><rect x="745.5" y="522.8" width="1.3" height="1.400" fill="#e4defa"/><rect x="762.3" y="493.3" width="3.0" height="1.500" fill="#e4defa"/><rect x="762.3" y="522.8" width="2.2" height="1.400" fill="#e4defa"/><rect x="779.2" y="493.3" width="1.9" height="1.500" fill="#e4defa"/><rect x="779.2" y="522.8" width="1.3" height="1.400" fill="#e4defa"/><rect x="796.1" y="493.3" width="3.2" height="1.500" fill="#e4defa"/><rect x="796.1" y="522.8" width="2.2" height="1.400" fill="#e4defa"/><rect x="812.9" y="493.3" width="1.8" height="1.500" fill="#e4defa"/><rect x="812.9" y="522.8" width="1.3" height="1.400" fill="#e4defa"/><rect x="829.8" y="493.3" width="3.1" height="1.500" fill="#e4defa"/><rect x="829.8" y="522.8" width="2.2" height="1.400" fill="#e4defa"/><rect x="846.7" y="493.3" width="1.9" height="1.500" fill="#e4defa"/><rect x="846.7" y="522.8" width="1.3" height="1.400" fill="#e4defa"/><rect x="863.5" y="493.3" width="2.7" height="1.500" fill="#e4defa"/><rect x="863.5" y="522.8" width="2.2" height="1.400" fill="#e4defa"/><rect x="880.4" y="493.3" width="2.3" height="1.500" fill="#e4defa"/><rect x="880.4" y="522.8" width="1.3" height="1.400" fill="#e4defa"/><rect x="897.3" y="493.3" width="3.6" height="1.500" fill="#e4defa"/><rect x="897.3" y="522.8" width="2.2" height="1.400" fill="#e4defa"/><rect x="914.1" y="493.3" width="1.9" height="1.500" fill="#e4defa"/><rect x="914.1" y="522.8" width="1.3" height="1.400" fill="#e4defa"/><rect x="931.0" y="493.3" width="2.9" height="1.500" fill="#e4defa"/><rect x="931.0" y="522.8" width="2.2" height="1.400" fill="#e4defa"/><rect x="947.9" y="493.3" width="2.6" height="1.500" fill="#e4defa"/><rect x="947.9" y="522.8" width="1.3" height="1.400" fill="#e4defa"/><rect x="964.7" y="493.3" width="3.7" height="1.500" fill="#e4defa"/><rect x="964.7" y="522.8" width="2.2" height="1.400" fill="#e4defa"/><rect x="981.6" y="493.3" width="2.5" height="1.500" fill="#e4defa"/><rect x="981.6" y="522.8" width="1.3" height="1.400" fill="#e4defa"/><rect x="998.5" y="493.3" width="3.1" height="1.500" fill="#e4defa"/><rect x="998.5" y="522.8" width="2.2" height="1.400" fill="#e4defa"/><rect x="1015.4" y="493.3" width="3.0" height="1.500" fill="#e4defa"/><rect x="1015.4" y="522.8" width="1.3" height="1.400" fill="#e4defa"/><rect x="1032.2" y="493.3" width="2.7" height="1.500" fill="#e4defa"/><rect x="1032.2" y="522.8" width="2.2" height="1.400" fill="#e4defa"/><rect x="1049.1" y="493.3" width="2.8" height="1.500" fill="#e4defa"/><rect x="1049.1" y="522.8" width="1.3" height="1.400" fill="#e4defa"/><rect x="1066.0" y="493.3" width="2.9" height="1.500" fill="#e4defa"/><rect x="1066.0" y="522.8" width="2.2" height="1.400" fill="#e4defa"/><rect x="1082.8" y="493.3" width="2.0" height="1.500" fill="#e4defa"/><rect x="1082.8" y="522.8" width="1.3" height="1.400" fill="#e4defa"/><rect x="1099.7" y="493.3" width="2.7" height="1.500" fill="#e4defa"/><rect x="1099.7" y="522.8" width="2.2" height="1.400" fill="#e4defa"/><rect x="1116.6" y="493.3" width="2.2" height="1.500" fill="#e4defa"/><rect x="1116.6" y="522.8" width="1.3" height="1.400" fill="#e4defa"/><rect x="1133.4" y="493.3" width="3.6" height="1.500" fill="#e4defa"/><rect x="1133.4" y="522.8" width="2.2" height="1.400" fill="#e4defa"/><rect x="1150.3" y="493.3" width="2.0" height="1.500" fill="#e4defa"/><rect x="1150.3" y="522.8" width="1.3" height="1.400" fill="#e4defa"/><rect x="1167.2" y="493.3" width="3.3" height="1.500" fill="#e4defa"/><rect x="1167.2" y="522.8" width="2.2" height="1.400" fill="#e4defa"/><rect x="1184.0" y="493.3" width="2.6" height="1.500" fill="#e4defa"/><rect x="1184.0" y="522.8" width="1.3" height="1.400" fill="#e4defa"/><rect x="1200.9" y="493.3" width="3.0" height="1.500" fill="#e4defa"/><rect x="1200.9" y="522.8" width="2.2" height="1.400" fill="#e4defa"/><rect x="687.3" y="500.6" width="2.8" height="1.500" fill="#e4defa"/><rect x="687.3" y="515.6" width="2.0" height="1.500" fill="#e4defa"/><rect x="687.3" y="530.1" width="2.8" height="1.500" fill="#e4defa"/><rect x="721.0" y="500.6" width="2.8" height="1.500" fill="#e4defa"/><rect x="721.0" y="515.6" width="2.0" height="1.500" fill="#e4defa"/><rect x="721.0" y="530.1" width="2.8" height="1.500" fill="#e4defa"/><rect x="754.8" y="500.6" width="2.8" height="1.500" fill="#e4defa"/><rect x="754.8" y="515.6" width="2.0" height="1.500" fill="#e4defa"/><rect x="754.8" y="530.1" width="2.8" height="1.500" fill="#e4defa"/><rect x="788.5" y="500.6" width="2.8" height="1.500" fill="#e4defa"/><rect x="788.5" y="515.6" width="2.0" height="1.500" fill="#e4defa"/><rect x="788.5" y="530.1" width="2.8" height="1.500" fill="#e4defa"/><rect x="822.2" y="500.6" width="2.8" height="1.500" fill="#e4defa"/><rect x="822.2" y="515.6" width="2.0" height="1.500" fill="#e4defa"/><rect x="822.2" y="530.1" width="2.8" height="1.500" fill="#e4defa"/><rect x="856.0" y="500.6" width="2.8" height="1.500" fill="#e4defa"/><rect x="856.0" y="515.6" width="2.0" height="1.500" fill="#e4defa"/><rect x="856.0" y="530.1" width="2.8" height="1.500" fill="#e4defa"/><rect x="889.7" y="500.6" width="2.8" height="1.500" fill="#e4defa"/><rect x="889.7" y="515.6" width="2.0" height="1.500" fill="#e4defa"/><rect x="889.7" y="530.1" width="2.8" height="1.500" fill="#e4defa"/><rect x="923.4" y="500.6" width="2.8" height="1.500" fill="#e4defa"/><rect x="923.4" y="515.6" width="2.0" height="1.500" fill="#e4defa"/><rect x="923.4" y="530.1" width="2.8" height="1.500" fill="#e4defa"/><rect x="957.2" y="500.6" width="2.8" height="1.500" fill="#e4defa"/><rect x="957.2" y="515.6" width="2.0" height="1.500" fill="#e4defa"/><rect x="957.2" y="530.1" width="2.8" height="1.500" fill="#e4defa"/><rect x="990.9" y="500.6" width="2.8" height="1.500" fill="#e4defa"/><rect x="990.9" y="515.6" width="2.0" height="1.500" fill="#e4defa"/><rect x="990.9" y="530.1" width="2.8" height="1.500" fill="#e4defa"/><rect x="1024.7" y="500.6" width="2.8" height="1.500" fill="#e4defa"/><rect x="1024.7" y="515.6" width="2.0" height="1.500" fill="#e4defa"/><rect x="1024.7" y="530.1" width="2.8" height="1.500" fill="#e4defa"/><rect x="1058.4" y="500.6" width="2.8" height="1.500" fill="#e4defa"/><rect x="1058.4" y="515.6" width="2.0" height="1.500" fill="#e4defa"/><rect x="1058.4" y="530.1" width="2.8" height="1.500" fill="#e4defa"/><rect x="1092.1" y="500.6" width="2.8" height="1.500" fill="#e4defa"/><rect x="1092.1" y="515.6" width="2.0" height="1.500" fill="#e4defa"/><rect x="1092.1" y="530.1" width="2.8" height="1.500" fill="#e4defa"/><rect x="1125.9" y="500.6" width="2.8" height="1.500" fill="#e4defa"/><rect x="1125.9" y="515.6" width="2.0" height="1.500" fill="#e4defa"/><rect x="1125.9" y="530.1" width="2.8" height="1.500" fill="#e4defa"/><rect x="1159.6" y="500.6" width="2.8" height="1.500" fill="#e4defa"/><rect x="1159.6" y="515.6" width="2.0" height="1.500" fill="#e4defa"/><rect x="1159.6" y="530.1" width="2.8" height="1.500" fill="#e4defa"/><rect x="1193.3" y="500.6" width="2.8" height="1.500" fill="#e4defa"/><rect x="1193.3" y="515.6" width="2.0" height="1.500" fill="#e4defa"/><rect x="1193.3" y="530.1" width="2.8" height="1.500" fill="#e4defa"/><rect x="670.8" y="537.6" width="3.600" height="1.500" fill="#e4defa"/><rect x="704.5" y="537.6" width="3.600" height="1.500" fill="#e4defa"/><rect x="738.3" y="537.6" width="3.600" height="1.500" fill="#e4defa"/><rect x="772.0" y="537.6" width="3.600" height="1.500" fill="#e4defa"/><rect x="805.7" y="537.6" width="3.600" height="1.500" fill="#e4defa"/><rect x="839.5" y="537.6" width="3.600" height="1.500" fill="#e4defa"/><rect x="873.2" y="537.6" width="3.600" height="1.500" fill="#e4defa"/><rect x="906.9" y="537.6" width="3.600" height="1.500" fill="#e4defa"/><rect x="940.7" y="537.6" width="3.600" height="1.500" fill="#e4defa"/><rect x="974.4" y="537.6" width="3.600" height="1.500" fill="#e4defa"/><rect x="1008.1" y="537.6" width="3.600" height="1.500" fill="#e4defa"/><rect x="1041.9" y="537.6" width="3.600" height="1.500" fill="#e4defa"/><rect x="1075.6" y="537.6" width="3.600" height="1.500" fill="#e4defa"/><rect x="1109.4" y="537.6" width="3.600" height="1.500" fill="#e4defa"/><rect x="1143.1" y="537.6" width="3.600" height="1.500" fill="#e4defa"/><rect x="1176.8" y="537.6" width="3.600" height="1.500" fill="#e4defa"/></svg>
<div style="left:670.0px;top:549.4px;width:83.0px;height:68px;background:#c9c81c;border-radius:4px 4px 4px 4px;opacity:1"></div>
<span style="left:674.00px;top:551.60px;font-size:9.2px;line-height:11px;color:rgba(255,255,255,.92);font-weight:400;letter-spacing:0.275px;-webkit-text-stroke:0.35px rgba(255,255,255,.92);">Vocal Shouts</span>
<div style="left:788.3px;top:549.4px;width:99.7px;height:68px;background:#c9c81c;border-radius:4px 4px 4px 4px;opacity:1"></div>
<span style="left:792.30px;top:551.60px;font-size:9.2px;line-height:11px;color:rgba(255,255,255,.92);font-weight:400;letter-spacing:0.275px;-webkit-text-stroke:0.35px rgba(255,255,255,.92);">Vocal Shouts</span>
<div style="left:923.1px;top:549.4px;width:100.4px;height:68px;background:#c9c81c;border-radius:4px 4px 4px 4px;opacity:1"></div>
<span style="left:927.10px;top:551.60px;font-size:9.2px;line-height:11px;color:rgba(255,255,255,.92);font-weight:400;letter-spacing:0.275px;-webkit-text-stroke:0.35px rgba(255,255,255,.92);">Vocal Shouts</span>
<div style="left:1041.3px;top:549.4px;width:170.7px;height:68px;background:#c9c81c;border-radius:4px 0px 0px 4px;opacity:1"></div>
<span style="left:1045.30px;top:551.60px;font-size:9.2px;line-height:11px;color:rgba(255,255,255,.92);font-weight:400;letter-spacing:0.275px;-webkit-text-stroke:0.35px rgba(255,255,255,.92);">Vocal Shouts</span>
<svg style="left:0px;top:0px;" width="1296" height="929" viewBox="0 0 1296 929"><path d="M670.0,586.1 670.8,584.7 671.5,580.2 672.2,583.5 673.0,584.8 673.8,584.7 674.5,586.4 675.2,584.9 676.0,582.5 676.8,582.3 677.5,579.6 678.2,575.3 679.0,574.9 679.8,577.2 680.5,573.6 681.2,574.9 682.0,578.7 682.8,581.5 683.5,582.0 684.2,582.0 685.0,578.4 685.8,572.3 686.5,573.6 687.2,575.9 688.0,572.5 688.8,578.0 689.5,577.8 690.2,583.2 691.0,583.0 691.8,581.2 692.5,576.2 693.2,573.2 694.0,575.3 694.8,571.1 695.5,567.4 696.2,574.4 697.0,573.1 697.8,576.8 698.5,580.2 699.2,580.6 700.0,581.7 700.8,582.2 701.5,576.6 702.2,572.9 703.0,570.9 703.8,564.2 704.5,573.6 705.2,575.6 706.0,571.7 706.8,572.4 707.5,577.4 708.2,575.8 709.0,580.9 709.8,582.5 710.5,580.1 711.2,579.2 712.0,578.5 712.8,572.2 713.5,574.7 714.2,576.3 715.0,573.7 715.8,575.4 716.5,576.7 717.2,576.4 718.0,580.5 718.8,581.1 719.5,582.6 720.2,577.4 721.0,575.4 721.8,567.2 722.5,572.9 723.2,570.5 724.0,573.3 724.8,570.1 725.5,577.2 726.2,579.1 727.0,579.9 727.8,583.9 728.5,581.2 729.2,580.8 730.0,579.6 730.8,578.1 731.5,577.4 732.2,579.9 733.0,579.2 733.8,575.8 734.5,579.0 735.2,576.3 736.0,577.2 736.8,582.1 737.5,583.5 738.2,582.3 739.0,579.6 739.8,581.0 740.5,583.0 741.2,582.9 742.0,580.4 742.8,582.8 743.5,584.4 744.2,584.9 745.0,584.8 745.8,584.8 746.5,586.6 747.2,587.3 748.0,588.0 748.8,589.0 749.5,588.7 750.2,588.5 751.0,588.5 751.8,588.8 752.5,589.2 L752.5,590.8 751.8,591.1 751.0,591.4 750.2,591.4 749.5,591.2 748.8,590.9 748.0,592.2 747.2,592.6 746.5,593.2 745.8,595.9 745.0,595.3 744.2,597.9 743.5,595.7 742.8,597.2 742.0,597.1 741.2,596.5 740.5,601.8 739.8,599.5 739.0,596.9 738.2,596.2 737.5,595.3 736.8,597.9 736.0,600.3 735.2,603.3 734.5,603.2 733.8,603.3 733.0,602.8 732.2,601.1 731.5,599.8 730.8,600.7 730.0,603.9 729.2,596.5 728.5,595.0 727.8,596.0 727.0,599.0 726.2,599.8 725.5,607.1 724.8,613.2 724.0,606.9 723.2,611.0 722.5,609.2 721.8,610.5 721.0,608.1 720.2,598.1 719.5,597.7 718.8,598.4 718.0,597.9 717.2,599.7 716.5,606.6 715.8,604.7 715.0,603.2 714.2,604.5 713.5,605.1 712.8,609.5 712.0,604.3 711.2,601.0 710.5,599.0 709.8,598.5 709.0,599.1 708.2,603.0 707.5,604.3 706.8,605.8 706.0,603.3 705.2,608.7 704.5,610.4 703.8,607.0 703.0,609.7 702.2,601.5 701.5,600.0 700.8,596.5 700.0,599.9 699.2,601.7 698.5,602.5 697.8,603.7 697.0,607.3 696.2,614.1 695.5,613.5 694.8,605.6 694.0,608.0 693.2,601.5 692.5,600.6 691.8,597.5 691.0,597.3 690.2,598.6 689.5,601.9 688.8,606.4 688.0,609.4 687.2,612.1 686.5,607.3 685.8,603.6 685.0,602.5 684.2,597.5 683.5,596.1 682.8,596.6 682.0,598.7 681.2,601.9 680.5,602.0 679.8,601.9 679.0,601.1 678.2,607.2 677.5,603.3 676.8,600.4 676.0,596.5 675.2,593.6 674.5,594.8 673.8,593.9 673.0,597.4 672.2,598.3 671.5,596.2 670.8,596.3 670.0,594.7Z" fill="#fbfaa6"/><path d="M788.3,589.3 789.0,589.3 789.8,589.3 790.5,589.3 791.3,589.3 792.0,589.3 792.8,589.3 793.5,582.4 794.3,579.9 795.0,577.8 795.8,581.3 796.5,579.6 797.3,579.8 798.0,579.0 798.8,581.0 799.5,580.9 800.3,582.7 801.0,585.0 801.8,585.5 802.5,581.7 803.3,578.9 804.0,578.4 804.8,577.2 805.5,579.1 806.3,576.3 807.0,579.1 807.8,579.5 808.5,581.4 809.3,578.8 810.0,586.1 810.8,585.9 811.5,585.4 812.3,584.4 813.0,584.1 813.8,580.8 814.5,576.6 815.3,579.1 816.0,582.3 816.8,584.0 817.5,583.3 818.3,584.9 819.0,584.0 819.8,579.7 820.5,577.1 821.3,573.4 822.0,577.5 822.8,575.7 823.5,580.0 824.3,575.3 825.0,578.8 825.8,581.9 826.5,584.8 827.3,585.5 828.0,585.3 828.8,583.8 829.5,582.3 830.3,579.5 831.0,578.3 831.8,582.2 832.5,582.3 833.3,582.5 834.0,580.6 834.8,579.7 835.5,583.6 836.3,582.8 837.0,585.6 837.8,586.0 838.5,580.1 839.3,577.2 840.0,575.8 840.8,574.0 841.5,575.9 842.3,575.1 843.0,574.8 843.8,567.4 844.5,577.7 845.3,579.9 846.0,587.1 846.8,587.0 847.5,585.8 848.3,583.8 849.0,580.7 849.8,582.4 850.5,583.6 851.3,584.9 852.0,587.1 852.8,585.9 853.5,578.7 854.3,580.2 855.0,577.1 855.8,569.1 856.5,574.0 857.3,577.3 858.0,577.2 858.8,580.4 859.5,581.2 860.3,578.7 861.0,580.9 861.8,580.5 862.5,581.5 863.3,581.9 864.0,581.4 864.8,582.8 865.5,582.0 866.3,584.5 867.0,584.8 867.8,584.9 868.5,586.9 869.3,589.3 870.0,589.3 870.8,589.3 871.5,589.3 872.3,589.3 873.0,589.3 873.8,589.3 874.5,589.3 875.3,589.3 876.0,589.3 876.8,589.3 877.5,589.3 878.3,589.3 879.0,589.3 879.8,589.3 880.5,589.3 881.3,589.3 882.0,589.3 882.8,589.3 883.5,589.3 884.3,589.3 885.0,589.3 885.8,589.3 886.5,589.3 887.3,589.3 L887.3,590.7 886.5,590.7 885.8,590.7 885.0,590.7 884.3,590.7 883.5,590.7 882.8,590.7 882.0,590.7 881.3,590.7 880.5,590.7 879.8,590.7 879.0,590.7 878.3,590.7 877.5,590.7 876.8,590.7 876.0,590.7 875.3,590.7 874.5,590.7 873.8,590.7 873.0,590.7 872.3,590.7 871.5,590.7 870.8,590.7 870.0,590.7 869.3,590.7 868.5,592.4 867.8,595.6 867.0,594.9 866.3,595.8 865.5,596.6 864.8,596.4 864.0,598.0 863.3,599.5 862.5,598.5 861.8,602.9 861.0,600.8 860.3,597.8 859.5,597.2 858.8,600.9 858.0,604.1 857.3,604.8 856.5,606.7 855.8,604.2 855.0,604.0 854.3,601.8 853.5,600.6 852.8,593.6 852.0,593.8 851.3,594.1 850.5,596.8 849.8,598.3 849.0,600.5 848.3,596.5 847.5,594.8 846.8,593.2 846.0,593.8 845.3,598.5 844.5,601.1 843.8,606.7 843.0,611.1 842.3,607.9 841.5,605.3 840.8,606.1 840.0,607.2 839.3,604.8 838.5,599.7 837.8,593.7 837.0,593.2 836.3,595.4 835.5,596.3 834.8,599.3 834.0,602.5 833.3,598.1 832.5,598.6 831.8,597.1 831.0,597.7 830.3,603.2 829.5,598.8 828.8,595.5 828.0,596.6 827.3,597.1 826.5,595.2 825.8,596.6 825.0,600.5 824.3,599.2 823.5,604.0 822.8,602.3 822.0,604.1 821.3,600.2 820.5,601.8 819.8,600.3 819.0,597.6 818.3,594.3 817.5,596.6 816.8,596.8 816.0,598.0 815.3,599.9 814.5,602.3 813.8,596.8 813.0,597.3 812.3,594.8 811.5,594.2 810.8,596.1 810.0,594.3 809.3,597.1 808.5,598.5 807.8,599.0 807.0,599.6 806.3,598.9 805.5,602.3 804.8,600.9 804.0,601.1 803.3,600.9 802.5,600.0 801.8,594.0 801.0,594.4 800.3,596.1 799.5,600.6 798.8,602.3 798.0,600.0 797.3,600.6 796.5,600.9 795.8,602.0 795.0,604.2 794.3,600.2 793.5,596.2 792.8,590.7 792.0,590.7 791.3,590.7 790.5,590.7 789.8,590.7 789.0,590.7 788.3,590.7Z" fill="#fbfaa6"/><path d="M923.1,589.3 923.9,589.3 924.6,589.3 925.4,589.3 926.1,586.9 926.9,585.4 927.6,584.4 928.4,586.3 929.1,587.2 929.9,578.7 930.6,569.7 931.4,576.3 932.1,584.1 932.9,583.9 933.6,583.2 934.4,582.6 935.1,586.4 935.9,586.6 936.6,586.4 937.4,586.7 938.1,585.1 938.9,586.7 939.6,586.6 940.4,586.2 941.1,587.1 941.9,587.6 942.6,588.3 943.4,589.0 944.1,587.8 944.9,587.9 945.6,588.0 946.4,588.1 947.1,588.1 947.9,588.2 948.6,588.3 949.4,588.4 950.1,588.5 950.9,588.5 951.6,588.6 952.4,588.7 953.1,588.8 953.9,588.9 954.6,588.9 955.4,589.0 956.1,589.3 956.9,589.3 957.6,589.3 958.4,589.3 959.1,589.3 959.9,589.3 960.6,589.3 961.4,589.3 962.1,589.3 962.9,589.3 963.6,589.3 964.4,589.3 965.1,589.3 965.9,589.3 966.6,589.3 967.4,589.3 968.1,589.3 968.9,589.3 969.6,589.3 970.4,589.3 971.1,589.3 971.9,589.3 972.6,589.3 973.4,589.3 974.1,589.3 974.9,589.3 975.6,589.3 976.4,589.3 977.1,589.3 977.9,589.3 978.6,589.3 979.4,589.3 980.1,589.3 980.9,589.3 981.6,589.3 982.4,589.3 983.1,589.3 983.9,589.3 984.6,589.3 985.4,589.3 986.1,589.3 986.9,589.3 987.6,589.3 988.4,589.3 989.1,589.3 989.9,589.3 990.6,589.3 991.4,589.3 992.1,589.3 992.9,589.3 993.6,589.3 994.4,589.3 995.1,589.3 995.9,589.3 996.6,589.3 997.4,589.3 998.1,589.3 998.9,589.3 999.6,589.3 1000.4,589.3 1001.1,589.3 1001.9,589.3 1002.6,589.3 1003.4,589.3 1004.1,589.3 1004.9,589.3 1005.6,589.3 1006.4,589.3 1007.1,589.3 1007.9,589.3 1008.6,589.3 1009.4,589.3 1010.1,589.3 1010.9,589.3 1011.6,589.3 1012.4,589.3 1013.1,589.3 1013.9,589.3 1014.6,589.3 1015.4,589.3 1016.1,589.3 1016.9,589.3 1017.6,589.3 1018.4,589.3 1019.1,589.3 1019.9,589.3 1020.6,589.3 1021.4,589.3 1022.1,589.3 1022.9,589.3 L1022.9,590.7 1022.1,590.7 1021.4,590.7 1020.6,590.7 1019.9,590.7 1019.1,590.7 1018.4,590.7 1017.6,590.7 1016.9,590.7 1016.1,590.7 1015.4,590.7 1014.6,590.7 1013.9,590.7 1013.1,590.7 1012.4,590.7 1011.6,590.7 1010.9,590.7 1010.1,590.7 1009.4,590.7 1008.6,590.7 1007.9,590.7 1007.1,590.7 1006.4,590.7 1005.6,590.7 1004.9,590.7 1004.1,590.7 1003.4,590.7 1002.6,590.7 1001.9,590.7 1001.1,590.7 1000.4,590.7 999.6,590.7 998.9,590.7 998.1,590.7 997.4,590.7 996.6,590.7 995.9,590.7 995.1,590.7 994.4,590.7 993.6,590.7 992.9,590.7 992.1,590.7 991.4,590.7 990.6,590.7 989.9,590.7 989.1,590.7 988.4,590.7 987.6,590.7 986.9,590.7 986.1,590.7 985.4,590.7 984.6,590.7 983.9,590.7 983.1,590.7 982.4,590.7 981.6,590.7 980.9,590.7 980.1,590.7 979.4,590.7 978.6,590.7 977.9,590.7 977.1,590.7 976.4,590.7 975.6,590.7 974.9,590.7 974.1,590.7 973.4,590.7 972.6,590.7 971.9,590.7 971.1,590.7 970.4,590.7 969.6,590.7 968.9,590.7 968.1,590.7 967.4,590.7 966.6,590.7 965.9,590.7 965.1,590.7 964.4,590.7 963.6,590.7 962.9,590.7 962.1,590.7 961.4,590.7 960.6,590.7 959.9,590.7 959.1,590.7 958.4,590.7 957.6,590.7 956.9,590.7 956.1,590.7 955.4,590.9 954.6,591.0 953.9,591.1 953.1,591.2 952.4,591.2 951.6,591.3 950.9,591.4 950.1,591.5 949.4,591.5 948.6,591.6 947.9,591.7 947.1,591.8 946.4,591.8 945.6,591.9 944.9,592.0 944.1,592.1 943.4,591.0 942.6,591.6 941.9,592.3 941.1,593.0 940.4,593.5 939.6,593.9 938.9,593.7 938.1,595.5 937.4,593.0 936.6,592.9 935.9,593.4 935.1,594.8 934.4,598.0 933.6,597.4 932.9,597.7 932.1,596.7 931.4,600.7 930.6,602.4 929.9,601.5 929.1,592.5 928.4,593.2 927.6,594.5 926.9,594.3 926.1,592.6 925.4,590.7 924.6,590.7 923.9,590.7 923.1,590.7Z" fill="#fbfaa6"/><path d="M1041.3,589.3 1042.0,589.3 1042.8,589.3 1043.5,589.3 1044.3,589.3 1045.0,589.3 1045.8,589.3 1046.5,583.5 1047.3,584.2 1048.0,580.6 1048.8,578.6 1049.5,582.9 1050.3,583.0 1051.0,581.6 1051.8,581.2 1052.5,583.0 1053.3,584.9 1054.0,584.9 1054.8,583.9 1055.5,581.8 1056.3,581.3 1057.0,579.9 1057.8,581.3 1058.5,579.6 1059.3,579.7 1060.0,579.7 1060.8,577.7 1061.5,574.0 1062.3,574.8 1063.0,583.1 1063.8,584.7 1064.5,586.6 1065.3,585.6 1066.0,584.5 1066.8,581.5 1067.5,582.2 1068.3,582.2 1069.0,583.9 1069.8,583.9 1070.5,585.8 1071.3,586.0 1072.0,580.5 1072.8,579.7 1073.5,577.3 1074.3,575.1 1075.0,568.6 1075.8,575.2 1076.5,576.8 1077.3,575.5 1078.0,575.3 1078.8,570.8 1079.5,579.7 1080.3,582.8 1081.0,579.6 1081.8,574.7 1082.5,576.2 1083.3,573.5 1084.0,579.9 1084.8,579.8 1085.5,579.5 1086.3,580.0 1087.0,582.1 1087.8,584.5 1088.5,584.0 1089.3,582.9 1090.0,581.1 1090.8,576.0 1091.5,574.1 1092.3,568.5 1093.0,574.0 1093.8,571.7 1094.5,571.6 1095.3,562.4 1096.0,571.5 1096.8,574.9 1097.5,566.1 1098.3,574.7 1099.0,582.2 1099.8,575.5 1100.5,576.4 1101.3,574.2 1102.0,565.8 1102.8,572.9 1103.5,568.6 1104.3,572.7 1105.0,568.0 1105.8,571.7 1106.5,576.3 1107.3,578.0 1108.0,581.4 1108.8,578.7 1109.5,579.9 1110.3,574.0 1111.0,577.3 1111.8,573.1 1112.5,571.7 1113.3,571.5 1114.0,575.9 1114.8,576.1 1115.5,579.0 1116.3,579.3 1117.0,584.8 1117.8,584.6 1118.5,581.7 1119.3,583.8 1120.0,582.8 1120.8,583.1 1121.5,584.9 1122.3,586.9 1123.0,588.6 1123.8,589.3 1124.5,589.3 1125.3,589.3 1126.0,589.3 1126.8,589.3 1127.5,589.3 1128.3,589.3 1129.0,589.3 1129.8,589.3 1130.5,589.3 1131.3,589.3 1132.0,589.3 1132.8,589.3 1133.5,589.3 1134.3,589.3 1135.0,589.3 1135.8,589.3 1136.5,589.3 1137.3,589.3 1138.0,589.3 1138.8,589.3 1139.5,589.3 1140.3,589.3 1141.0,589.3 1141.8,589.3 1142.5,589.3 1143.3,589.3 1144.0,589.3 1144.8,589.3 1145.5,589.3 1146.3,589.3 1147.0,589.3 1147.8,589.3 1148.5,581.6 1149.3,580.5 1150.0,581.0 1150.8,578.2 1151.5,587.4 1152.3,587.3 1153.0,587.9 1153.8,586.6 1154.5,585.7 1155.3,584.7 1156.0,586.0 1156.8,585.2 1157.5,586.7 1158.3,586.8 1159.0,586.9 1159.8,587.3 1160.5,585.2 1161.3,585.3 1162.0,583.8 1162.8,583.7 1163.5,584.8 1164.3,585.0 1165.0,585.2 1165.8,586.4 1166.5,585.7 1167.3,583.7 1168.0,583.8 1168.8,581.7 1169.5,583.9 1170.3,582.0 1171.0,582.6 1171.8,583.3 1172.5,584.4 1173.3,584.1 1174.0,587.1 1174.8,586.6 1175.5,586.9 1176.3,585.1 1177.0,585.3 1177.8,582.3 1178.5,584.5 1179.3,582.5 1180.0,582.0 1180.8,583.9 1181.5,583.1 1182.3,584.7 1183.0,586.9 1183.8,587.4 1184.5,584.6 1185.3,585.3 1186.0,583.6 1186.8,585.1 1187.5,585.3 1188.3,585.1 1189.0,585.6 1189.8,586.8 1190.5,586.2 1191.3,579.1 1192.0,573.4 1192.8,573.2 1193.5,576.4 1194.3,577.4 1195.0,586.3 1195.8,584.2 1196.5,582.9 1197.3,581.2 1198.0,583.8 1198.8,584.0 1199.5,584.6 1200.3,586.7 1201.0,585.3 1201.8,584.5 1202.5,584.0 1203.3,585.1 1204.0,585.3 1204.8,585.0 1205.5,584.7 1206.3,584.7 1207.0,583.6 1207.8,586.0 L1207.8,592.7 1207.0,593.8 1206.3,595.7 1205.5,595.2 1204.8,594.6 1204.0,595.2 1203.3,596.6 1202.5,597.2 1201.8,594.7 1201.0,592.9 1200.3,592.4 1199.5,594.8 1198.8,594.8 1198.0,595.6 1197.3,596.4 1196.5,596.9 1195.8,595.0 1195.0,595.4 1194.3,604.2 1193.5,603.3 1192.8,600.9 1192.0,598.9 1191.3,598.6 1190.5,593.4 1189.8,593.9 1189.0,594.1 1188.3,595.1 1187.5,595.2 1186.8,596.9 1186.0,595.9 1185.3,593.7 1184.5,594.2 1183.8,593.0 1183.0,592.5 1182.3,593.8 1181.5,596.2 1180.8,597.4 1180.0,597.0 1179.3,596.0 1178.5,599.1 1177.8,596.9 1177.0,594.4 1176.3,595.8 1175.5,594.4 1174.8,593.8 1174.0,593.3 1173.3,594.8 1172.5,599.2 1171.8,597.0 1171.0,596.2 1170.3,597.1 1169.5,595.8 1168.8,599.0 1168.0,597.1 1167.3,595.5 1166.5,593.8 1165.8,593.2 1165.0,594.3 1164.3,595.6 1163.5,597.0 1162.8,595.5 1162.0,596.0 1161.3,595.4 1160.5,595.0 1159.8,592.5 1159.0,592.6 1158.3,594.2 1157.5,593.6 1156.8,595.4 1156.0,594.7 1155.3,593.9 1154.5,594.6 1153.8,592.8 1153.0,592.0 1152.3,592.6 1151.5,592.5 1150.8,596.8 1150.0,601.3 1149.3,600.1 1148.5,597.4 1147.8,590.7 1147.0,590.7 1146.3,590.7 1145.5,590.7 1144.8,590.7 1144.0,590.7 1143.3,590.7 1142.5,590.7 1141.8,590.7 1141.0,590.7 1140.3,590.7 1139.5,590.7 1138.8,590.7 1138.0,590.7 1137.3,590.7 1136.5,590.7 1135.8,590.7 1135.0,590.7 1134.3,590.7 1133.5,590.7 1132.8,590.7 1132.0,590.7 1131.3,590.7 1130.5,590.7 1129.8,590.7 1129.0,590.7 1128.3,590.7 1127.5,590.7 1126.8,590.7 1126.0,590.7 1125.3,590.7 1124.5,590.7 1123.8,590.6 1123.0,591.3 1122.3,593.6 1121.5,593.6 1120.8,596.8 1120.0,595.8 1119.3,596.3 1118.5,598.0 1117.8,596.1 1117.0,596.6 1116.3,599.1 1115.5,609.8 1114.8,607.5 1114.0,604.9 1113.3,605.4 1112.5,603.3 1111.8,602.5 1111.0,606.3 1110.3,603.3 1109.5,601.9 1108.8,596.8 1108.0,596.5 1107.3,603.3 1106.5,602.9 1105.8,606.9 1105.0,606.4 1104.3,608.4 1103.5,606.6 1102.8,608.5 1102.0,607.8 1101.3,603.6 1100.5,605.5 1099.8,601.1 1099.0,597.2 1098.3,604.0 1097.5,604.1 1096.8,609.8 1096.0,605.9 1095.3,604.8 1094.5,615.1 1093.8,609.1 1093.0,605.4 1092.3,608.2 1091.5,603.6 1090.8,600.7 1090.0,599.2 1089.3,596.6 1088.5,595.8 1087.8,596.0 1087.0,598.9 1086.3,600.2 1085.5,605.3 1084.8,599.6 1084.0,601.5 1083.3,605.6 1082.5,601.0 1081.8,600.5 1081.0,597.4 1080.3,596.7 1079.5,600.2 1078.8,600.5 1078.0,603.0 1077.3,606.7 1076.5,605.1 1075.8,604.7 1075.0,604.0 1074.3,603.3 1073.5,604.2 1072.8,602.9 1072.0,599.3 1071.3,593.1 1070.5,593.8 1069.8,595.4 1069.0,596.2 1068.3,598.4 1067.5,596.4 1066.8,596.2 1066.0,594.9 1065.3,595.3 1064.5,593.8 1063.8,596.8 1063.0,596.8 1062.3,600.3 1061.5,605.6 1060.8,600.4 1060.0,605.1 1059.3,601.3 1058.5,600.8 1057.8,599.3 1057.0,602.0 1056.3,597.6 1055.5,597.0 1054.8,594.2 1054.0,593.4 1053.3,595.7 1052.5,596.8 1051.8,598.4 1051.0,597.1 1050.3,597.9 1049.5,597.8 1048.8,599.3 1048.0,599.5 1047.3,595.5 1046.5,596.2 1045.8,590.7 1045.0,590.7 1044.3,590.7 1043.5,590.7 1042.8,590.7 1042.0,590.7 1041.3,590.7Z" fill="#fbfaa6"/></svg>
<div style="left:670.0px;top:620.1px;width:542.0px;height:68px;background:#a6c910;border-radius:4px 0px 0px 4px;opacity:1"></div>
<span style="left:674.00px;top:622.60px;font-size:9.2px;line-height:11px;color:rgba(255,255,255,.92);font-weight:400;letter-spacing:0.141px;-webkit-text-stroke:0.35px rgba(255,255,255,.92);">Punch Bass</span>
<svg style="left:0px;top:0px;" width="1296" height="929" viewBox="0 0 1296 929"><rect x="678.0" y="634.5" width="2.2" height="1.500" fill="#f4fab0"/><rect x="678.0" y="664.5" width="1.3" height="1.400" fill="#f4fab0"/><rect x="694.9" y="634.5" width="2.8" height="1.500" fill="#f4fab0"/><rect x="694.9" y="664.5" width="2.2" height="1.400" fill="#f4fab0"/><rect x="711.7" y="634.5" width="2.6" height="1.500" fill="#f4fab0"/><rect x="711.7" y="664.5" width="1.3" height="1.400" fill="#f4fab0"/><rect x="728.6" y="634.5" width="2.7" height="1.500" fill="#f4fab0"/><rect x="728.6" y="664.5" width="2.2" height="1.400" fill="#f4fab0"/><rect x="745.5" y="634.5" width="2.4" height="1.500" fill="#f4fab0"/><rect x="745.5" y="664.5" width="1.3" height="1.400" fill="#f4fab0"/><rect x="762.3" y="634.5" width="3.0" height="1.500" fill="#f4fab0"/><rect x="762.3" y="664.5" width="2.2" height="1.400" fill="#f4fab0"/><rect x="779.2" y="634.5" width="1.9" height="1.500" fill="#f4fab0"/><rect x="779.2" y="664.5" width="1.3" height="1.400" fill="#f4fab0"/><rect x="796.1" y="634.5" width="3.2" height="1.500" fill="#f4fab0"/><rect x="796.1" y="664.5" width="2.2" height="1.400" fill="#f4fab0"/><rect x="812.9" y="634.5" width="1.8" height="1.500" fill="#f4fab0"/><rect x="812.9" y="664.5" width="1.3" height="1.400" fill="#f4fab0"/><rect x="829.8" y="634.5" width="3.1" height="1.500" fill="#f4fab0"/><rect x="829.8" y="664.5" width="2.2" height="1.400" fill="#f4fab0"/><rect x="846.7" y="634.5" width="1.9" height="1.500" fill="#f4fab0"/><rect x="846.7" y="664.5" width="1.3" height="1.400" fill="#f4fab0"/><rect x="863.5" y="634.5" width="2.7" height="1.500" fill="#f4fab0"/><rect x="863.5" y="664.5" width="2.2" height="1.400" fill="#f4fab0"/><rect x="880.4" y="634.5" width="2.3" height="1.500" fill="#f4fab0"/><rect x="880.4" y="664.5" width="1.3" height="1.400" fill="#f4fab0"/><rect x="897.3" y="634.5" width="3.6" height="1.500" fill="#f4fab0"/><rect x="897.3" y="664.5" width="2.2" height="1.400" fill="#f4fab0"/><rect x="914.1" y="634.5" width="1.9" height="1.500" fill="#f4fab0"/><rect x="914.1" y="664.5" width="1.3" height="1.400" fill="#f4fab0"/><rect x="931.0" y="634.5" width="2.9" height="1.500" fill="#f4fab0"/><rect x="931.0" y="664.5" width="2.2" height="1.400" fill="#f4fab0"/><rect x="947.9" y="634.5" width="2.6" height="1.500" fill="#f4fab0"/><rect x="947.9" y="664.5" width="1.3" height="1.400" fill="#f4fab0"/><rect x="964.7" y="634.5" width="3.7" height="1.500" fill="#f4fab0"/><rect x="964.7" y="664.5" width="2.2" height="1.400" fill="#f4fab0"/><rect x="981.6" y="634.5" width="2.5" height="1.500" fill="#f4fab0"/><rect x="981.6" y="664.5" width="1.3" height="1.400" fill="#f4fab0"/><rect x="998.5" y="634.5" width="3.1" height="1.500" fill="#f4fab0"/><rect x="998.5" y="664.5" width="2.2" height="1.400" fill="#f4fab0"/><rect x="1015.4" y="634.5" width="3.0" height="1.500" fill="#f4fab0"/><rect x="1015.4" y="664.5" width="1.3" height="1.400" fill="#f4fab0"/><rect x="1032.2" y="634.5" width="2.7" height="1.500" fill="#f4fab0"/><rect x="1032.2" y="664.5" width="2.2" height="1.400" fill="#f4fab0"/><rect x="1049.1" y="634.5" width="2.8" height="1.500" fill="#f4fab0"/><rect x="1049.1" y="664.5" width="1.3" height="1.400" fill="#f4fab0"/><rect x="1066.0" y="634.5" width="2.9" height="1.500" fill="#f4fab0"/><rect x="1066.0" y="664.5" width="2.2" height="1.400" fill="#f4fab0"/><rect x="1082.8" y="634.5" width="2.0" height="1.500" fill="#f4fab0"/><rect x="1082.8" y="664.5" width="1.3" height="1.400" fill="#f4fab0"/><rect x="1099.7" y="634.5" width="2.7" height="1.500" fill="#f4fab0"/><rect x="1099.7" y="664.5" width="2.2" height="1.400" fill="#f4fab0"/><rect x="1116.6" y="634.5" width="2.2" height="1.500" fill="#f4fab0"/><rect x="1116.6" y="664.5" width="1.3" height="1.400" fill="#f4fab0"/><rect x="1133.4" y="634.5" width="3.6" height="1.500" fill="#f4fab0"/><rect x="1133.4" y="664.5" width="2.2" height="1.400" fill="#f4fab0"/><rect x="1150.3" y="634.5" width="2.0" height="1.500" fill="#f4fab0"/><rect x="1150.3" y="664.5" width="1.3" height="1.400" fill="#f4fab0"/><rect x="1167.2" y="634.5" width="3.3" height="1.500" fill="#f4fab0"/><rect x="1167.2" y="664.5" width="2.2" height="1.400" fill="#f4fab0"/><rect x="1184.0" y="634.5" width="2.6" height="1.500" fill="#f4fab0"/><rect x="1184.0" y="664.5" width="1.3" height="1.400" fill="#f4fab0"/><rect x="1200.9" y="634.5" width="3.0" height="1.500" fill="#f4fab0"/><rect x="1200.9" y="664.5" width="2.2" height="1.400" fill="#f4fab0"/><rect x="687.3" y="641.7" width="2.8" height="1.500" fill="#f4fab0"/><rect x="687.3" y="657.3" width="2.0" height="1.500" fill="#f4fab0"/><rect x="687.3" y="671.7" width="2.8" height="1.500" fill="#f4fab0"/><rect x="721.0" y="641.7" width="2.8" height="1.500" fill="#f4fab0"/><rect x="721.0" y="657.3" width="2.0" height="1.500" fill="#f4fab0"/><rect x="721.0" y="671.7" width="2.8" height="1.500" fill="#f4fab0"/><rect x="754.8" y="641.7" width="2.8" height="1.500" fill="#f4fab0"/><rect x="754.8" y="657.3" width="2.0" height="1.500" fill="#f4fab0"/><rect x="754.8" y="671.7" width="2.8" height="1.500" fill="#f4fab0"/><rect x="788.5" y="641.7" width="2.8" height="1.500" fill="#f4fab0"/><rect x="788.5" y="657.3" width="2.0" height="1.500" fill="#f4fab0"/><rect x="788.5" y="671.7" width="2.8" height="1.500" fill="#f4fab0"/><rect x="822.2" y="641.7" width="2.8" height="1.500" fill="#f4fab0"/><rect x="822.2" y="657.3" width="2.0" height="1.500" fill="#f4fab0"/><rect x="822.2" y="671.7" width="2.8" height="1.500" fill="#f4fab0"/><rect x="856.0" y="641.7" width="2.8" height="1.500" fill="#f4fab0"/><rect x="856.0" y="657.3" width="2.0" height="1.500" fill="#f4fab0"/><rect x="856.0" y="671.7" width="2.8" height="1.500" fill="#f4fab0"/><rect x="889.7" y="641.7" width="2.8" height="1.500" fill="#f4fab0"/><rect x="889.7" y="657.3" width="2.0" height="1.500" fill="#f4fab0"/><rect x="889.7" y="671.7" width="2.8" height="1.500" fill="#f4fab0"/><rect x="923.4" y="641.7" width="2.8" height="1.500" fill="#f4fab0"/><rect x="923.4" y="657.3" width="2.0" height="1.500" fill="#f4fab0"/><rect x="923.4" y="671.7" width="2.8" height="1.500" fill="#f4fab0"/><rect x="957.2" y="641.7" width="2.8" height="1.500" fill="#f4fab0"/><rect x="957.2" y="657.3" width="2.0" height="1.500" fill="#f4fab0"/><rect x="957.2" y="671.7" width="2.8" height="1.500" fill="#f4fab0"/><rect x="990.9" y="641.7" width="2.8" height="1.500" fill="#f4fab0"/><rect x="990.9" y="657.3" width="2.0" height="1.500" fill="#f4fab0"/><rect x="990.9" y="671.7" width="2.8" height="1.500" fill="#f4fab0"/><rect x="1024.7" y="641.7" width="2.8" height="1.500" fill="#f4fab0"/><rect x="1024.7" y="657.3" width="2.0" height="1.500" fill="#f4fab0"/><rect x="1024.7" y="671.7" width="2.8" height="1.500" fill="#f4fab0"/><rect x="1058.4" y="641.7" width="2.8" height="1.500" fill="#f4fab0"/><rect x="1058.4" y="657.3" width="2.0" height="1.500" fill="#f4fab0"/><rect x="1058.4" y="671.7" width="2.8" height="1.500" fill="#f4fab0"/><rect x="1092.1" y="641.7" width="2.8" height="1.500" fill="#f4fab0"/><rect x="1092.1" y="657.3" width="2.0" height="1.500" fill="#f4fab0"/><rect x="1092.1" y="671.7" width="2.8" height="1.500" fill="#f4fab0"/><rect x="1125.9" y="641.7" width="2.8" height="1.500" fill="#f4fab0"/><rect x="1125.9" y="657.3" width="2.0" height="1.500" fill="#f4fab0"/><rect x="1125.9" y="671.7" width="2.8" height="1.500" fill="#f4fab0"/><rect x="1159.6" y="641.7" width="2.8" height="1.500" fill="#f4fab0"/><rect x="1159.6" y="657.3" width="2.0" height="1.500" fill="#f4fab0"/><rect x="1159.6" y="671.7" width="2.8" height="1.500" fill="#f4fab0"/><rect x="1193.3" y="641.7" width="2.8" height="1.500" fill="#f4fab0"/><rect x="1193.3" y="657.3" width="2.0" height="1.500" fill="#f4fab0"/><rect x="1193.3" y="671.7" width="2.8" height="1.500" fill="#f4fab0"/><rect x="670.8" y="679.4" width="3.600" height="1.500" fill="#f4fab0"/><rect x="704.5" y="679.4" width="3.600" height="1.500" fill="#f4fab0"/><rect x="738.3" y="679.4" width="3.600" height="1.500" fill="#f4fab0"/><rect x="772.0" y="679.4" width="3.600" height="1.500" fill="#f4fab0"/><rect x="805.7" y="679.4" width="3.600" height="1.500" fill="#f4fab0"/><rect x="839.5" y="679.4" width="3.600" height="1.500" fill="#f4fab0"/><rect x="873.2" y="679.4" width="3.600" height="1.500" fill="#f4fab0"/><rect x="906.9" y="679.4" width="3.600" height="1.500" fill="#f4fab0"/><rect x="940.7" y="679.4" width="3.600" height="1.500" fill="#f4fab0"/><rect x="974.4" y="679.4" width="3.600" height="1.500" fill="#f4fab0"/><rect x="1008.1" y="679.4" width="3.600" height="1.500" fill="#f4fab0"/><rect x="1041.9" y="679.4" width="3.600" height="1.500" fill="#f4fab0"/><rect x="1075.6" y="679.4" width="3.600" height="1.500" fill="#f4fab0"/><rect x="1109.4" y="679.4" width="3.600" height="1.500" fill="#f4fab0"/><rect x="1143.1" y="679.4" width="3.600" height="1.500" fill="#f4fab0"/><rect x="1176.8" y="679.4" width="3.600" height="1.500" fill="#f4fab0"/></svg>
<div style="left:670.0px;top:690.8px;width:523.0px;height:68px;background:#78c814;border-radius:4px 4px 4px 4px;opacity:1"></div>
<span style="left:674.00px;top:692.60px;font-size:9.2px;line-height:11px;color:rgba(255,255,255,.92);font-weight:400;letter-spacing:0.095px;-webkit-text-stroke:0.35px rgba(255,255,255,.92);">Synth Lead</span>
<div style="left:1192.8px;top:690.8px;width:19.2px;height:68px;background:#78c814;border-radius:4px 0px 0px 4px;opacity:1"></div>
<svg style="left:0px;top:0px;" width="1296" height="929" viewBox="0 0 1296 929"><path d="M670.0,730.3 670.8,730.3 671.5,730.3 672.2,730.3 673.0,730.3 673.8,730.3 674.5,730.3 675.2,730.3 676.0,723.0 676.8,723.4 677.5,723.3 678.2,721.7 679.0,719.2 679.8,721.8 680.5,720.3 681.2,717.7 682.0,720.4 682.8,721.7 683.5,725.4 684.2,726.5 685.0,724.2 685.8,719.9 686.5,718.9 687.2,719.8 688.0,721.0 688.8,720.9 689.5,721.3 690.2,723.2 691.0,723.1 691.8,726.7 692.5,725.9 693.2,722.8 694.0,723.3 694.8,722.6 695.5,722.8 696.2,723.6 697.0,723.0 697.8,722.4 698.5,725.3 699.2,727.4 700.0,723.2 700.8,722.8 701.5,721.0 702.2,718.0 703.0,715.3 703.8,711.3 704.5,717.6 705.2,716.8 706.0,715.9 706.8,715.0 707.5,717.5 708.2,722.7 709.0,724.4 709.8,725.0 710.5,725.6 711.2,723.4 712.0,723.8 712.8,719.1 713.5,718.2 714.2,720.4 715.0,718.4 715.8,720.0 716.5,721.1 717.2,724.1 718.0,725.5 718.8,726.1 719.5,719.5 720.2,719.8 721.0,714.2 721.8,710.0 722.5,713.9 723.2,715.4 724.0,715.5 724.8,714.3 725.5,709.9 726.2,714.2 727.0,717.7 727.8,722.1 728.5,724.5 729.2,723.8 730.0,722.6 730.8,721.1 731.5,721.3 732.2,719.5 733.0,713.1 733.8,720.2 734.5,714.7 735.2,716.0 736.0,721.4 736.8,721.6 737.5,723.1 738.2,721.0 739.0,719.4 739.8,717.7 740.5,717.7 741.2,714.3 742.0,717.6 742.8,719.5 743.5,711.2 744.2,716.7 745.0,718.9 745.8,720.8 746.5,727.1 747.2,726.4 748.0,722.8 748.8,725.1 749.5,726.1 750.2,727.3 751.0,729.2 751.8,730.2 752.5,730.3 753.2,730.3 754.0,730.3 754.8,730.3 755.5,730.3 756.2,730.3 757.0,730.3 757.8,730.3 758.5,730.3 759.2,730.3 760.0,730.3 760.8,730.3 761.5,730.3 762.2,730.3 763.0,730.3 763.8,730.3 764.5,730.3 765.2,730.3 766.0,730.3 766.8,730.3 767.5,730.3 768.2,730.3 769.0,730.3 769.8,730.3 770.5,730.3 771.2,730.3 772.0,730.3 772.8,730.3 773.5,730.3 774.2,730.3 775.0,730.3 775.8,730.3 776.5,719.8 777.2,717.0 778.0,718.9 778.8,722.2 779.5,722.5 780.2,728.0 781.0,728.5 781.8,727.0 782.5,725.9 783.2,726.6 784.0,726.0 784.8,725.0 785.5,724.2 786.2,725.7 787.0,725.7 787.8,727.7 788.5,723.0 789.2,721.6 790.0,719.1 790.8,718.9 791.5,713.8 792.2,718.5 793.0,713.4 793.8,715.7 794.5,719.5 795.2,718.5 796.0,719.6 796.8,718.7 797.5,724.8 798.2,722.4 799.0,718.1 799.8,718.8 800.5,714.6 801.2,710.8 802.0,716.1 802.8,717.7 803.5,714.1 804.2,715.2 805.0,718.4 805.8,721.0 806.5,722.6 807.2,726.1 808.0,725.3 808.8,722.4 809.5,722.8 810.2,721.5 811.0,719.7 811.8,722.1 812.5,720.3 813.2,722.6 814.0,723.0 814.8,721.2 815.5,724.2 816.2,727.2 817.0,726.8 817.8,727.9 818.5,727.2 819.2,724.7 820.0,724.6 820.8,724.2 821.5,724.5 822.2,723.7 823.0,723.5 823.8,724.7 824.5,726.2 825.2,725.4 826.0,727.8 826.8,728.2 827.5,727.2 828.2,726.6 829.0,724.4 829.8,722.4 830.5,726.3 831.2,724.7 832.0,726.4 832.8,726.5 833.5,727.3 834.2,728.4 835.0,724.8 835.8,716.4 836.5,717.7 837.2,716.0 838.0,719.4 838.8,719.3 839.5,718.0 840.2,718.2 841.0,720.9 841.8,721.1 842.5,726.6 843.2,725.9 844.0,726.7 844.8,725.7 845.5,725.7 846.2,725.7 847.0,725.4 847.8,724.6 848.5,727.2 849.2,727.5 850.0,723.1 850.8,722.1 851.5,718.3 852.2,716.4 853.0,716.0 853.8,720.0 854.5,711.3 855.2,718.9 856.0,715.6 856.8,715.0 857.5,718.9 858.2,719.7 859.0,722.8 859.8,724.5 860.5,723.6 861.2,717.1 862.0,721.4 862.8,718.3 863.5,716.9 864.2,720.3 865.0,721.4 865.8,720.5 866.5,716.6 867.2,717.1 868.0,721.7 868.8,719.5 869.5,723.2 870.2,725.0 871.0,719.1 871.8,714.9 872.5,716.8 873.2,713.6 874.0,714.4 874.8,715.1 875.5,719.7 876.2,724.0 877.0,719.9 877.8,717.9 878.5,708.1 879.2,715.0 880.0,714.5 880.8,709.8 881.5,711.2 882.2,714.5 883.0,717.1 883.8,719.0 884.5,723.9 885.2,724.1 886.0,724.1 886.8,718.4 887.5,720.7 888.2,719.6 889.0,720.1 889.8,724.2 890.5,723.4 891.2,725.8 892.0,722.9 892.8,717.0 893.5,721.5 894.2,719.3 895.0,720.8 895.8,721.8 896.5,717.9 897.2,720.2 898.0,723.8 898.8,723.4 899.5,723.8 900.2,725.7 901.0,726.1 901.8,727.4 902.5,727.3 903.2,726.1 904.0,725.8 904.8,724.2 905.5,726.0 906.2,726.1 907.0,726.9 907.8,727.3 908.5,726.7 909.2,728.3 910.0,728.8 910.8,728.5 911.5,729.1 912.2,730.3 913.0,730.3 913.8,730.3 914.5,730.3 915.2,730.3 916.0,730.3 916.8,730.3 917.5,730.3 918.2,730.3 919.0,730.3 919.8,730.3 920.5,730.3 921.2,730.3 922.0,730.3 922.8,730.3 923.5,730.3 924.2,730.3 925.0,730.3 925.8,730.3 926.5,730.3 927.2,730.3 928.0,730.3 928.8,730.3 929.5,730.3 930.2,730.3 931.0,730.3 931.8,730.3 932.5,730.3 933.2,730.3 934.0,730.3 934.8,730.3 935.5,730.3 936.2,730.3 937.0,730.3 937.8,730.3 938.5,730.3 939.2,730.3 940.0,730.3 940.8,730.3 941.5,730.3 942.2,730.3 943.0,730.3 943.8,730.3 944.5,725.4 945.2,722.6 946.0,723.3 946.8,720.2 947.5,721.2 948.2,720.2 949.0,719.0 949.8,719.2 950.5,723.1 951.2,723.4 952.0,726.0 952.8,727.3 953.5,720.0 954.2,718.8 955.0,720.2 955.8,720.7 956.5,718.7 957.2,720.2 958.0,714.8 958.8,721.6 959.5,721.7 960.2,719.6 961.0,721.8 961.8,723.4 962.5,726.8 963.2,725.8 964.0,721.8 964.8,721.5 965.5,722.6 966.2,719.9 967.0,721.1 967.8,719.7 968.5,721.9 969.2,722.0 970.0,723.5 970.8,725.6 971.5,726.3 972.2,726.8 973.0,723.1 973.8,724.0 974.5,722.3 975.2,722.4 976.0,720.9 976.8,719.9 977.5,717.2 978.2,721.7 979.0,717.1 979.8,719.3 980.5,718.5 981.2,722.1 982.0,720.9 982.8,720.7 983.5,720.2 984.2,724.8 985.0,725.9 985.8,722.5 986.5,723.4 987.2,722.6 988.0,723.4 988.8,722.7 989.5,720.1 990.2,722.4 991.0,724.3 991.8,726.2 992.5,727.1 993.2,722.0 994.0,716.2 994.8,719.8 995.5,719.0 996.2,716.8 997.0,717.2 997.8,710.4 998.5,718.4 999.2,717.4 1000.0,722.5 1000.8,724.8 1001.5,722.1 1002.2,718.4 1003.0,716.9 1003.8,717.4 1004.5,717.9 1005.2,718.8 1006.0,717.9 1006.8,715.4 1007.5,718.8 1008.2,719.6 1009.0,719.5 1009.8,722.9 1010.5,725.5 1011.2,724.9 1012.0,724.7 1012.8,721.0 1013.5,719.0 1014.2,720.2 1015.0,724.7 1015.8,725.8 1016.5,724.1 1017.2,723.2 1018.0,727.0 1018.8,726.8 1019.5,727.8 1020.2,728.2 1021.0,729.0 1021.8,730.3 1022.5,730.3 1023.2,730.3 1024.0,730.3 1024.8,730.3 1025.5,730.3 1026.2,730.3 1027.0,730.3 1027.8,730.3 1028.5,730.3 1029.2,730.3 1030.0,730.3 1030.8,730.3 1031.5,730.3 1032.2,730.3 1033.0,730.3 1033.8,730.3 1034.5,730.3 1035.2,730.3 1036.0,730.3 1036.8,730.3 1037.5,730.3 1038.2,730.3 1039.0,730.3 1039.8,730.3 1040.5,730.3 1041.2,730.3 1042.0,730.3 1042.8,730.3 1043.5,730.3 1044.2,730.3 1045.0,730.3 1045.8,730.3 1046.5,730.3 1047.2,730.5 1048.0,724.0 1048.8,721.7 1049.5,723.9 1050.2,730.5 1051.0,730.5 1051.8,730.5 1052.5,730.5 1053.2,730.3 1054.0,728.6 1054.8,727.3 1055.5,727.3 1056.2,726.6 1057.0,727.2 1057.8,727.6 1058.5,728.5 1059.2,729.7 1060.0,729.0 1060.8,728.8 1061.5,727.9 1062.2,727.6 1063.0,726.6 1063.8,726.7 1064.5,727.5 1065.2,726.1 1066.0,726.6 1066.8,727.2 1067.5,726.5 1068.2,727.9 1069.0,727.6 1069.8,728.2 1070.5,728.2 1071.2,727.4 1072.0,727.9 1072.8,727.1 1073.5,726.8 1074.2,725.9 1075.0,725.1 1075.8,726.4 1076.5,726.1 1077.2,727.0 1078.0,727.1 1078.8,728.5 1079.5,728.8 1080.2,725.6 1081.0,725.7 1081.8,723.5 1082.5,723.4 1083.2,723.2 1084.0,722.0 1084.8,725.0 1085.5,725.1 1086.2,726.9 1087.0,723.7 1087.8,721.4 1088.5,719.2 1089.2,717.7 1090.0,717.5 1090.8,720.3 1091.5,722.3 1092.2,723.4 1093.0,725.8 1093.8,727.6 1094.5,727.7 1095.2,728.1 1096.0,726.9 1096.8,726.1 1097.5,724.1 1098.2,726.4 1099.0,725.5 1099.8,726.4 1100.5,726.2 1101.2,725.2 1102.0,726.5 1102.8,727.1 1103.5,728.2 1104.2,724.0 1105.0,722.5 1105.8,720.7 1106.5,719.2 1107.2,720.6 1108.0,722.4 1108.8,723.1 1109.5,723.4 1110.2,723.1 1111.0,726.3 1111.8,726.9 1112.5,726.6 1113.2,724.6 1114.0,723.7 1114.8,719.8 1115.5,724.5 1116.2,724.3 1117.0,723.1 1117.8,722.5 1118.5,723.8 1119.2,725.1 1120.0,725.3 1120.8,726.1 1121.5,727.5 1122.2,727.7 1123.0,720.4 1123.8,719.4 1124.5,719.5 1125.2,714.6 1126.0,708.8 1126.8,715.1 1127.5,714.8 1128.2,718.0 1129.0,714.2 1129.8,716.6 1130.5,720.4 1131.2,724.6 1132.0,724.2 1132.8,722.7 1133.5,719.3 1134.2,719.2 1135.0,719.6 1135.8,714.1 1136.5,720.6 1137.2,720.3 1138.0,719.5 1138.8,723.0 1139.5,724.5 1140.2,722.1 1141.0,718.8 1141.8,717.4 1142.5,712.2 1143.2,715.0 1144.0,715.3 1144.8,711.1 1145.5,713.7 1146.2,714.1 1147.0,713.8 1147.8,714.1 1148.5,718.3 1149.2,722.2 1150.0,720.5 1150.8,716.9 1151.5,717.4 1152.2,713.2 1153.0,712.8 1153.8,715.5 1154.5,714.6 1155.2,712.3 1156.0,706.9 1156.8,715.8 1157.5,714.7 1158.2,723.4 1159.0,722.4 1159.8,720.6 1160.5,719.2 1161.2,708.4 1162.0,717.2 1162.8,717.5 1163.5,717.9 1164.2,714.0 1165.0,717.6 1165.8,723.1 1166.5,724.5 1167.2,721.1 1168.0,716.6 1168.8,715.8 1169.5,719.4 1170.2,714.3 1171.0,718.1 1171.8,719.0 1172.5,712.4 1173.2,718.9 1174.0,722.7 1174.8,724.9 1175.5,726.7 1176.2,725.5 1177.0,720.1 1177.8,718.9 1178.5,720.4 1179.2,723.0 1180.0,725.1 1180.8,725.5 1181.5,725.4 1182.2,724.1 1183.0,726.6 1183.8,726.3 1184.5,727.8 1185.2,728.4 1186.0,728.6 1186.8,730.3 1187.5,730.3 1188.2,730.3 1189.0,730.3 1189.8,730.3 1190.5,730.3 1191.2,730.3 1192.0,730.3 L1192.0,731.7 1191.2,731.7 1190.5,731.7 1189.8,731.7 1189.0,731.7 1188.2,731.7 1187.5,731.7 1186.8,731.7 1186.0,733.1 1185.2,733.5 1184.5,734.4 1183.8,734.4 1183.0,736.0 1182.2,735.7 1181.5,737.6 1180.8,736.2 1180.0,736.6 1179.2,737.4 1178.5,737.5 1177.8,739.8 1177.0,739.7 1176.2,735.7 1175.5,735.8 1174.8,736.5 1174.0,737.5 1173.2,745.0 1172.5,740.9 1171.8,747.9 1171.0,744.3 1170.2,745.5 1169.5,741.9 1168.8,745.5 1168.0,741.3 1167.2,738.2 1166.5,739.1 1165.8,738.6 1165.0,743.4 1164.2,744.0 1163.5,745.2 1162.8,744.6 1162.0,747.8 1161.2,746.1 1160.5,745.3 1159.8,745.8 1159.0,739.5 1158.2,736.6 1157.5,740.6 1156.8,746.4 1156.0,746.8 1155.2,753.6 1154.5,746.9 1153.8,748.9 1153.0,743.6 1152.2,746.2 1151.5,744.7 1150.8,742.9 1150.0,738.0 1149.2,737.8 1148.5,743.1 1147.8,745.6 1147.0,746.7 1146.2,748.4 1145.5,748.7 1144.8,748.9 1144.0,745.3 1143.2,751.6 1142.5,748.2 1141.8,746.3 1141.0,746.3 1140.2,741.0 1139.5,738.4 1138.8,737.8 1138.0,744.2 1137.2,742.1 1136.5,744.5 1135.8,745.9 1135.0,744.0 1134.2,743.9 1133.5,739.4 1132.8,739.3 1132.0,738.4 1131.2,736.2 1130.5,740.7 1129.8,741.3 1129.0,748.0 1128.2,752.7 1127.5,750.0 1126.8,746.9 1126.0,748.5 1125.2,745.9 1124.5,745.1 1123.8,742.2 1123.0,737.9 1122.2,734.5 1121.5,736.2 1120.8,734.4 1120.0,735.9 1119.2,738.9 1118.5,736.7 1117.8,736.9 1117.0,740.9 1116.2,738.8 1115.5,739.4 1114.8,738.2 1114.0,740.8 1113.2,737.3 1112.5,735.8 1111.8,734.1 1111.0,736.6 1110.2,737.5 1109.5,740.3 1108.8,741.6 1108.0,739.3 1107.2,740.4 1106.5,741.3 1105.8,741.3 1105.0,739.1 1104.2,737.9 1103.5,734.1 1102.8,734.8 1102.0,735.8 1101.2,736.6 1100.5,738.3 1099.8,736.1 1099.0,736.8 1098.2,737.5 1097.5,737.2 1096.8,736.2 1096.0,736.3 1095.2,733.7 1094.5,735.0 1093.8,733.6 1093.0,737.8 1092.2,739.9 1091.5,741.3 1090.8,743.4 1090.0,741.5 1089.2,741.4 1088.5,741.9 1087.8,737.6 1087.0,737.5 1086.2,734.5 1085.5,735.2 1084.8,738.0 1084.0,737.9 1083.2,738.8 1082.5,739.5 1081.8,737.9 1081.0,736.0 1080.2,735.9 1079.5,733.5 1078.8,733.3 1078.0,735.0 1077.2,736.3 1076.5,736.0 1075.8,734.9 1075.0,738.3 1074.2,735.7 1073.5,736.6 1072.8,735.0 1072.0,734.1 1071.2,733.5 1070.5,733.6 1069.8,734.2 1069.0,734.0 1068.2,735.4 1067.5,735.1 1066.8,735.6 1066.0,735.8 1065.2,734.5 1064.5,735.5 1063.8,734.8 1063.0,734.3 1062.2,734.9 1061.5,733.3 1060.8,733.0 1060.0,732.9 1059.2,732.2 1058.5,734.8 1057.8,733.5 1057.0,733.6 1056.2,733.6 1055.5,734.0 1054.8,733.5 1054.0,733.8 1053.2,731.7 1052.5,731.5 1051.8,731.5 1051.0,731.5 1050.2,731.5 1049.5,740.6 1048.8,740.1 1048.0,740.9 1047.2,731.5 1046.5,731.7 1045.8,731.7 1045.0,731.7 1044.2,731.7 1043.5,731.7 1042.8,731.7 1042.0,731.7 1041.2,731.7 1040.5,731.7 1039.8,731.7 1039.0,731.7 1038.2,731.7 1037.5,731.7 1036.8,731.7 1036.0,731.7 1035.2,731.7 1034.5,731.7 1033.8,731.7 1033.0,731.7 1032.2,731.7 1031.5,731.7 1030.8,731.7 1030.0,731.7 1029.2,731.7 1028.5,731.7 1027.8,731.7 1027.0,731.7 1026.2,731.7 1025.5,731.7 1024.8,731.7 1024.0,731.7 1023.2,731.7 1022.5,731.7 1021.8,731.7 1021.0,732.9 1020.2,733.7 1019.5,733.9 1018.8,734.7 1018.0,736.0 1017.2,735.8 1016.5,736.8 1015.8,736.2 1015.0,738.5 1014.2,739.5 1013.5,740.4 1012.8,738.7 1012.0,738.6 1011.2,737.3 1010.5,736.2 1009.8,740.7 1009.0,739.2 1008.2,743.9 1007.5,742.9 1006.8,745.7 1006.0,746.1 1005.2,741.6 1004.5,744.2 1003.8,744.1 1003.0,744.4 1002.2,741.7 1001.5,740.6 1000.8,737.7 1000.0,738.8 999.2,739.0 998.5,743.0 997.8,742.7 997.0,745.4 996.2,746.3 995.5,744.3 994.8,742.6 994.0,745.0 993.2,740.0 992.5,734.6 991.8,735.2 991.0,736.0 990.2,741.8 989.5,737.8 988.8,739.6 988.0,738.1 987.2,739.2 986.5,738.0 985.8,736.7 985.0,734.6 984.2,734.7 983.5,738.6 982.8,741.0 982.0,739.6 981.2,739.5 980.5,746.2 979.8,742.4 979.0,745.6 978.2,738.6 977.5,740.6 976.8,739.3 976.0,742.5 975.2,744.1 974.5,740.0 973.8,740.1 973.0,737.9 972.2,735.6 971.5,734.8 970.8,736.5 970.0,738.8 969.2,739.4 968.5,739.7 967.8,740.9 967.0,745.6 966.2,743.2 965.5,741.7 964.8,739.4 964.0,738.1 963.2,737.3 962.5,738.1 961.8,738.0 961.0,738.8 960.2,742.3 959.5,742.5 958.8,742.8 958.0,739.7 957.2,740.8 956.5,740.6 955.8,740.5 955.0,743.1 954.2,738.3 953.5,738.1 952.8,734.6 952.0,737.2 951.2,736.4 950.5,738.7 949.8,740.1 949.0,739.2 948.2,740.4 947.5,738.2 946.8,738.0 946.0,740.3 945.2,738.4 944.5,738.5 943.8,731.7 943.0,731.7 942.2,731.7 941.5,731.7 940.8,731.7 940.0,731.7 939.2,731.7 938.5,731.7 937.8,731.7 937.0,731.7 936.2,731.7 935.5,731.7 934.8,731.7 934.0,731.7 933.2,731.7 932.5,731.7 931.8,731.7 931.0,731.7 930.2,731.7 929.5,731.7 928.8,731.7 928.0,731.7 927.2,731.7 926.5,731.7 925.8,731.7 925.0,731.7 924.2,731.7 923.5,731.7 922.8,731.7 922.0,731.7 921.2,731.7 920.5,731.7 919.8,731.7 919.0,731.7 918.2,731.7 917.5,731.7 916.8,731.7 916.0,731.7 915.2,731.7 914.5,731.7 913.8,731.7 913.0,731.7 912.2,731.7 911.5,732.8 910.8,733.4 910.0,734.8 909.2,734.8 908.5,735.0 907.8,735.6 907.0,735.0 906.2,735.1 905.5,736.3 904.8,737.2 904.0,736.7 903.2,734.6 902.5,732.9 901.8,734.3 901.0,735.6 900.2,737.8 899.5,738.1 898.8,739.8 898.0,739.6 897.2,738.5 896.5,741.5 895.8,741.6 895.0,741.5 894.2,746.5 893.5,743.5 892.8,740.4 892.0,738.5 891.2,736.2 890.5,736.7 889.8,738.0 889.0,741.1 888.2,740.1 887.5,739.8 886.8,741.2 886.0,737.7 885.2,737.2 884.5,737.0 883.8,743.3 883.0,741.9 882.2,745.9 881.5,750.1 880.8,749.9 880.0,745.3 879.2,750.3 878.5,746.3 877.8,750.0 877.0,739.7 876.2,739.1 875.5,742.2 874.8,746.7 874.0,744.0 873.2,747.4 872.5,745.6 871.8,744.5 871.0,739.8 870.2,735.6 869.5,737.9 868.8,740.7 868.0,740.7 867.2,741.6 866.5,744.1 865.8,748.0 865.0,741.7 864.2,742.7 863.5,744.6 862.8,742.7 862.0,742.0 861.2,738.7 860.5,737.7 859.8,737.3 859.0,739.4 858.2,739.5 857.5,745.1 856.8,744.6 856.0,745.4 855.2,745.2 854.5,745.0 853.8,744.6 853.0,742.3 852.2,741.8 851.5,742.1 850.8,739.4 850.0,738.4 849.2,734.2 848.5,735.9 847.8,736.5 847.0,736.3 846.2,737.7 845.5,737.2 844.8,736.1 844.0,736.3 843.2,734.6 842.5,734.7 841.8,739.1 841.0,741.1 840.2,742.3 839.5,745.9 838.8,749.9 838.0,746.9 837.2,745.2 836.5,741.4 835.8,742.4 835.0,738.0 834.2,733.7 833.5,735.1 832.8,735.3 832.0,737.4 831.2,737.2 830.5,737.7 829.8,736.5 829.0,739.1 828.2,735.7 827.5,735.3 826.8,734.1 826.0,734.0 825.2,735.7 824.5,736.2 823.8,736.9 823.0,737.5 822.2,737.0 821.5,738.6 820.8,739.9 820.0,737.0 819.2,736.1 818.5,735.5 817.8,734.1 817.0,734.1 816.2,733.4 815.5,737.7 814.8,737.7 814.0,739.3 813.2,740.2 812.5,742.4 811.8,740.0 811.0,740.8 810.2,738.8 809.5,740.5 808.8,740.4 808.0,736.2 807.2,736.3 806.5,744.2 805.8,740.7 805.0,745.9 804.2,741.9 803.5,744.1 802.8,744.4 802.0,746.6 801.2,744.9 800.5,747.0 799.8,745.5 799.0,740.7 798.2,737.6 797.5,737.8 796.8,739.0 796.0,741.2 795.2,741.1 794.5,743.4 793.8,741.3 793.0,744.7 792.2,749.4 791.5,747.0 790.8,745.7 790.0,744.7 789.2,741.6 788.5,740.9 787.8,734.1 787.0,734.9 786.2,735.1 785.5,735.7 784.8,735.0 784.0,736.5 783.2,734.9 782.5,735.3 781.8,734.3 781.0,733.1 780.2,733.7 779.5,739.4 778.8,738.7 778.0,745.3 777.2,742.4 776.5,739.8 775.8,731.7 775.0,731.7 774.2,731.7 773.5,731.7 772.8,731.7 772.0,731.7 771.2,731.7 770.5,731.7 769.8,731.7 769.0,731.7 768.2,731.7 767.5,731.7 766.8,731.7 766.0,731.7 765.2,731.7 764.5,731.7 763.8,731.7 763.0,731.7 762.2,731.7 761.5,731.7 760.8,731.7 760.0,731.7 759.2,731.7 758.5,731.7 757.8,731.7 757.0,731.7 756.2,731.7 755.5,731.7 754.8,731.7 754.0,731.7 753.2,731.7 752.5,731.7 751.8,731.8 751.0,732.8 750.2,734.8 749.5,735.8 748.8,735.5 748.0,735.7 747.2,737.5 746.5,735.0 745.8,740.6 745.0,739.4 744.2,745.1 743.5,744.3 742.8,744.2 742.0,744.0 741.2,747.0 740.5,742.9 739.8,742.8 739.0,739.7 738.2,739.4 737.5,740.0 736.8,738.2 736.0,739.8 735.2,744.7 734.5,741.9 733.8,747.9 733.0,742.0 732.2,741.5 731.5,744.0 730.8,739.5 730.0,737.0 729.2,738.3 728.5,738.5 727.8,738.3 727.0,740.4 726.2,744.3 725.5,743.8 724.8,745.7 724.0,746.7 723.2,747.2 722.5,751.5 721.8,745.1 721.0,745.4 720.2,745.6 719.5,744.8 718.8,735.3 718.0,736.1 717.2,737.9 716.5,743.1 715.8,742.4 715.0,742.3 714.2,740.8 713.5,745.9 712.8,740.0 712.0,742.1 711.2,738.0 710.5,736.2 709.8,739.2 709.0,740.9 708.2,739.6 707.5,742.0 706.8,751.5 706.0,744.7 705.2,746.4 704.5,744.6 703.8,743.4 703.0,742.9 702.2,746.7 701.5,740.5 700.8,740.6 700.0,739.7 699.2,734.8 698.5,737.2 697.8,737.9 697.0,740.8 696.2,740.1 695.5,740.7 694.8,739.4 694.0,739.4 693.2,738.4 692.5,737.4 691.8,735.6 691.0,737.2 690.2,739.3 689.5,740.2 688.8,747.7 688.0,742.2 687.2,744.1 686.5,742.3 685.8,740.0 685.0,738.3 684.2,736.0 683.5,739.0 682.8,738.7 682.0,742.4 681.2,741.2 680.5,738.9 679.8,739.2 679.0,742.3 678.2,740.1 677.5,742.1 676.8,737.0 676.0,737.2 675.2,731.7 674.5,731.7 673.8,731.7 673.0,731.7 672.2,731.7 671.5,731.7 670.8,731.7 670.0,731.7Z" fill="#e2fcb4"/><path d="M1199.8,725.9 1200.5,719.9 1201.3,721.0 1202.0,717.5 1202.8,718.2 1203.5,721.7 1204.3,716.2 1205.0,720.7 1205.8,718.7 1206.5,719.4 1207.3,720.3 1208.0,718.5 1208.8,721.2 1209.5,719.9 L1209.5,736.6 1208.8,738.1 1208.0,743.9 1207.3,745.5 1206.5,740.5 1205.8,741.9 1205.0,743.5 1204.3,739.7 1203.5,744.4 1202.8,743.1 1202.0,742.8 1201.3,742.2 1200.5,739.3 1199.8,736.2Z" fill="#a2e066"/></svg>
<div style="left:670px;top:761.6px;width:201.600px;height:68px;background:#1fa53c;border-radius:4px 4px 0 4px"></div>
<div style="left:871.600px;top:761.6px;width:67.200px;height:68px;background:#1da038"></div>
<div style="left:940px;top:761.6px;width:272px;height:68px;background:#1fa53c;border-radius:4px 0 0 4px"></div>
<span style="left:674.00px;top:763.60px;font-size:9.3px;line-height:11px;color:rgba(255,255,255,.92);font-weight:400;letter-spacing:0.247px;-webkit-text-stroke:0.35px rgba(255,255,255,.92);">Tough Kit</span>
<span style="left:944.00px;top:763.60px;font-size:9.3px;line-height:11px;color:rgba(255,255,255,.92);font-weight:400;letter-spacing:0.247px;-webkit-text-stroke:0.35px rgba(255,255,255,.92);">Tough Kit</span>
<svg style="left:0px;top:0px;" width="1296" height="929" viewBox="0 0 1296 929"><rect x="669.60" y="775.7" width="2.05" height="7" fill="#dcf8e2"/><rect x="671.71" y="775.7" width="1.3" height="7" fill="#46b862"/><rect x="673.82" y="775.7" width="1.3" height="7" fill="#46b862"/><rect x="675.93" y="775.7" width="1.3" height="7" fill="#46b862"/><rect x="678.03" y="775.7" width="1.3" height="7" fill="#46b862"/><rect x="680.14" y="775.7" width="1.3" height="7" fill="#46b862"/><rect x="682.25" y="775.7" width="1.3" height="7" fill="#46b862"/><rect x="684.36" y="775.7" width="1.3" height="7" fill="#46b862"/><rect x="686.47" y="775.7" width="1.3" height="7" fill="#46b862"/><rect x="688.58" y="775.7" width="1.3" height="7" fill="#46b862"/><rect x="690.68" y="775.7" width="1.3" height="7" fill="#46b862"/><rect x="692.79" y="775.7" width="1.3" height="7" fill="#46b862"/><rect x="694.90" y="775.7" width="2.05" height="7" fill="#dcf8e2"/><rect x="697.01" y="775.7" width="2.05" height="7" fill="#dcf8e2"/><rect x="699.12" y="775.7" width="1.3" height="7" fill="#46b862"/><rect x="701.23" y="775.7" width="1.3" height="7" fill="#46b862"/><rect x="703.34" y="775.7" width="1.3" height="7" fill="#46b862"/><rect x="705.44" y="775.7" width="1.3" height="7" fill="#46b862"/><rect x="707.55" y="775.7" width="2.05" height="7" fill="#dcf8e2"/><rect x="709.66" y="775.7" width="2.05" height="7" fill="#dcf8e2"/><rect x="711.77" y="775.7" width="1.3" height="7" fill="#46b862"/><rect x="713.88" y="775.7" width="1.3" height="7" fill="#46b862"/><rect x="715.99" y="775.7" width="1.3" height="7" fill="#46b862"/><rect x="718.09" y="775.7" width="1.3" height="7" fill="#46b862"/><rect x="720.20" y="775.7" width="1.3" height="7" fill="#46b862"/><rect x="722.31" y="775.7" width="1.3" height="7" fill="#46b862"/><rect x="724.42" y="775.7" width="1.3" height="7" fill="#46b862"/><rect x="726.53" y="775.7" width="1.3" height="7" fill="#46b862"/><rect x="728.64" y="775.7" width="2.05" height="7" fill="#dcf8e2"/><rect x="730.74" y="775.7" width="1.3" height="7" fill="#46b862"/><rect x="732.85" y="775.7" width="1.3" height="7" fill="#46b862"/><rect x="734.96" y="775.7" width="2.05" height="7" fill="#dcf8e2"/><rect x="737.07" y="775.7" width="2.05" height="7" fill="#dcf8e2"/><rect x="739.18" y="775.7" width="1.3" height="7" fill="#46b862"/><rect x="741.29" y="775.7" width="1.3" height="7" fill="#46b862"/><rect x="743.40" y="775.7" width="1.3" height="7" fill="#46b862"/><rect x="745.50" y="775.7" width="1.3" height="7" fill="#46b862"/><rect x="747.61" y="775.7" width="1.3" height="7" fill="#46b862"/><rect x="749.72" y="775.7" width="1.3" height="7" fill="#46b862"/><rect x="751.83" y="775.7" width="1.3" height="7" fill="#46b862"/><rect x="753.94" y="775.7" width="1.3" height="7" fill="#46b862"/><rect x="756.05" y="775.7" width="1.3" height="7" fill="#46b862"/><rect x="758.15" y="775.7" width="1.3" height="7" fill="#46b862"/><rect x="760.26" y="775.7" width="1.3" height="7" fill="#46b862"/><rect x="762.37" y="775.7" width="2.05" height="7" fill="#dcf8e2"/><rect x="764.48" y="775.7" width="2.05" height="7" fill="#dcf8e2"/><rect x="766.59" y="775.7" width="1.3" height="7" fill="#46b862"/><rect x="768.70" y="775.7" width="1.3" height="7" fill="#46b862"/><rect x="770.81" y="775.7" width="1.3" height="7" fill="#46b862"/><rect x="772.91" y="775.7" width="1.3" height="7" fill="#46b862"/><rect x="775.02" y="775.7" width="2.05" height="7" fill="#dcf8e2"/><rect x="777.13" y="775.7" width="2.05" height="7" fill="#dcf8e2"/><rect x="779.24" y="775.7" width="1.3" height="7" fill="#46b862"/><rect x="781.35" y="775.7" width="1.3" height="7" fill="#46b862"/><rect x="783.46" y="775.7" width="1.3" height="7" fill="#46b862"/><rect x="785.56" y="775.7" width="1.3" height="7" fill="#46b862"/><rect x="787.67" y="775.7" width="1.3" height="7" fill="#46b862"/><rect x="789.78" y="775.7" width="1.3" height="7" fill="#46b862"/><rect x="791.89" y="775.7" width="1.3" height="7" fill="#46b862"/><rect x="794.00" y="775.7" width="1.3" height="7" fill="#46b862"/><rect x="796.11" y="775.7" width="2.05" height="7" fill="#dcf8e2"/><rect x="798.21" y="775.7" width="1.3" height="7" fill="#46b862"/><rect x="800.32" y="775.7" width="1.3" height="7" fill="#46b862"/><rect x="802.43" y="775.7" width="2.05" height="7" fill="#dcf8e2"/><rect x="804.54" y="775.7" width="2.05" height="7" fill="#dcf8e2"/><rect x="806.65" y="775.7" width="1.3" height="7" fill="#46b862"/><rect x="808.76" y="775.7" width="1.3" height="7" fill="#46b862"/><rect x="810.87" y="775.7" width="1.3" height="7" fill="#46b862"/><rect x="812.97" y="775.7" width="1.3" height="7" fill="#46b862"/><rect x="815.08" y="775.7" width="1.3" height="7" fill="#46b862"/><rect x="817.19" y="775.7" width="1.3" height="7" fill="#46b862"/><rect x="819.30" y="775.7" width="1.3" height="7" fill="#46b862"/><rect x="821.41" y="775.7" width="1.3" height="7" fill="#46b862"/><rect x="823.52" y="775.7" width="1.3" height="7" fill="#46b862"/><rect x="825.62" y="775.7" width="1.3" height="7" fill="#46b862"/><rect x="827.73" y="775.7" width="1.3" height="7" fill="#46b862"/><rect x="829.84" y="775.7" width="2.05" height="7" fill="#dcf8e2"/><rect x="831.95" y="775.7" width="2.05" height="7" fill="#dcf8e2"/><rect x="834.06" y="775.7" width="1.3" height="7" fill="#46b862"/><rect x="836.17" y="775.7" width="1.3" height="7" fill="#46b862"/><rect x="838.28" y="775.7" width="1.3" height="7" fill="#46b862"/><rect x="840.38" y="775.7" width="1.3" height="7" fill="#46b862"/><rect x="842.49" y="775.7" width="2.05" height="7" fill="#dcf8e2"/><rect x="844.60" y="775.7" width="2.05" height="7" fill="#dcf8e2"/><rect x="846.71" y="775.7" width="1.3" height="7" fill="#46b862"/><rect x="848.82" y="775.7" width="1.3" height="7" fill="#46b862"/><rect x="850.93" y="775.7" width="1.3" height="7" fill="#46b862"/><rect x="853.03" y="775.7" width="1.3" height="7" fill="#46b862"/><rect x="855.14" y="775.7" width="1.3" height="7" fill="#46b862"/><rect x="857.25" y="775.7" width="1.3" height="7" fill="#46b862"/><rect x="859.36" y="775.7" width="1.3" height="7" fill="#46b862"/><rect x="861.47" y="775.7" width="1.3" height="7" fill="#46b862"/><rect x="863.58" y="775.7" width="2.05" height="7" fill="#dcf8e2"/><rect x="865.68" y="775.7" width="1.3" height="7" fill="#46b862"/><rect x="867.79" y="775.7" width="1.3" height="7" fill="#46b862"/><rect x="869.90" y="775.7" width="2.05" height="7" fill="#dcf8e2"/><rect x="872.01" y="775.7" width="2.05" height="7" fill="#5cc878"/><rect x="874.12" y="775.7" width="1.3" height="7" fill="#30ad4e"/><rect x="876.23" y="775.7" width="1.3" height="7" fill="#30ad4e"/><rect x="878.34" y="775.7" width="1.3" height="7" fill="#30ad4e"/><rect x="880.44" y="775.7" width="1.3" height="7" fill="#30ad4e"/><rect x="882.55" y="775.7" width="1.3" height="7" fill="#30ad4e"/><rect x="884.66" y="775.7" width="1.3" height="7" fill="#30ad4e"/><rect x="886.77" y="775.7" width="1.3" height="7" fill="#30ad4e"/><rect x="888.88" y="775.7" width="1.3" height="7" fill="#30ad4e"/><rect x="890.99" y="775.7" width="1.3" height="7" fill="#30ad4e"/><rect x="893.09" y="775.7" width="1.3" height="7" fill="#30ad4e"/><rect x="895.20" y="775.7" width="1.3" height="7" fill="#30ad4e"/><rect x="897.31" y="775.7" width="2.05" height="7" fill="#5cc878"/><rect x="899.42" y="775.7" width="2.05" height="7" fill="#5cc878"/><rect x="901.53" y="775.7" width="1.3" height="7" fill="#30ad4e"/><rect x="903.64" y="775.7" width="1.3" height="7" fill="#30ad4e"/><rect x="905.75" y="775.7" width="1.3" height="7" fill="#30ad4e"/><rect x="907.85" y="775.7" width="1.3" height="7" fill="#30ad4e"/><rect x="909.96" y="775.7" width="2.05" height="7" fill="#5cc878"/><rect x="912.07" y="775.7" width="2.05" height="7" fill="#5cc878"/><rect x="914.18" y="775.7" width="1.3" height="7" fill="#30ad4e"/><rect x="916.29" y="775.7" width="1.3" height="7" fill="#30ad4e"/><rect x="918.40" y="775.7" width="1.3" height="7" fill="#30ad4e"/><rect x="920.50" y="775.7" width="1.3" height="7" fill="#30ad4e"/><rect x="922.61" y="775.7" width="1.3" height="7" fill="#30ad4e"/><rect x="924.72" y="775.7" width="1.3" height="7" fill="#30ad4e"/><rect x="926.83" y="775.7" width="1.3" height="7" fill="#30ad4e"/><rect x="928.94" y="775.7" width="1.3" height="7" fill="#30ad4e"/><rect x="931.05" y="775.7" width="2.05" height="7" fill="#5cc878"/><rect x="933.15" y="775.7" width="1.3" height="7" fill="#30ad4e"/><rect x="935.26" y="775.7" width="1.3" height="7" fill="#30ad4e"/><rect x="937.37" y="775.7" width="2.05" height="7" fill="#5cc878"/><rect x="939.48" y="775.7" width="2.05" height="7" fill="#dcf8e2"/><rect x="941.59" y="775.7" width="1.3" height="7" fill="#46b862"/><rect x="943.70" y="775.7" width="1.3" height="7" fill="#46b862"/><rect x="945.81" y="775.7" width="1.3" height="7" fill="#46b862"/><rect x="947.91" y="775.7" width="1.3" height="7" fill="#46b862"/><rect x="950.02" y="775.7" width="1.3" height="7" fill="#46b862"/><rect x="952.13" y="775.7" width="1.3" height="7" fill="#46b862"/><rect x="954.24" y="775.7" width="1.3" height="7" fill="#46b862"/><rect x="956.35" y="775.7" width="1.3" height="7" fill="#46b862"/><rect x="958.46" y="775.7" width="1.3" height="7" fill="#46b862"/><rect x="960.56" y="775.7" width="1.3" height="7" fill="#46b862"/><rect x="962.67" y="775.7" width="1.3" height="7" fill="#46b862"/><rect x="964.78" y="775.7" width="2.05" height="7" fill="#dcf8e2"/><rect x="966.89" y="775.7" width="2.05" height="7" fill="#dcf8e2"/><rect x="969.00" y="775.7" width="1.3" height="7" fill="#46b862"/><rect x="971.11" y="775.7" width="1.3" height="7" fill="#46b862"/><rect x="973.22" y="775.7" width="1.3" height="7" fill="#46b862"/><rect x="975.32" y="775.7" width="1.3" height="7" fill="#46b862"/><rect x="977.43" y="775.7" width="2.05" height="7" fill="#dcf8e2"/><rect x="979.54" y="775.7" width="2.05" height="7" fill="#dcf8e2"/><rect x="981.65" y="775.7" width="1.3" height="7" fill="#46b862"/><rect x="983.76" y="775.7" width="1.3" height="7" fill="#46b862"/><rect x="985.87" y="775.7" width="1.3" height="7" fill="#46b862"/><rect x="987.97" y="775.7" width="1.3" height="7" fill="#46b862"/><rect x="990.08" y="775.7" width="1.3" height="7" fill="#46b862"/><rect x="992.19" y="775.7" width="1.3" height="7" fill="#46b862"/><rect x="994.30" y="775.7" width="1.3" height="7" fill="#46b862"/><rect x="996.41" y="775.7" width="1.3" height="7" fill="#46b862"/><rect x="998.52" y="775.7" width="2.05" height="7" fill="#dcf8e2"/><rect x="1000.62" y="775.7" width="1.3" height="7" fill="#46b862"/><rect x="1002.73" y="775.7" width="1.3" height="7" fill="#46b862"/><rect x="1004.84" y="775.7" width="2.05" height="7" fill="#dcf8e2"/><rect x="1006.95" y="775.7" width="2.05" height="7" fill="#dcf8e2"/><rect x="1009.06" y="775.7" width="1.3" height="7" fill="#46b862"/><rect x="1011.17" y="775.7" width="1.3" height="7" fill="#46b862"/><rect x="1013.28" y="775.7" width="1.3" height="7" fill="#46b862"/><rect x="1015.38" y="775.7" width="1.3" height="7" fill="#46b862"/><rect x="1017.49" y="775.7" width="1.3" height="7" fill="#46b862"/><rect x="1019.60" y="775.7" width="1.3" height="7" fill="#46b862"/><rect x="1021.71" y="775.7" width="1.3" height="7" fill="#46b862"/><rect x="1023.82" y="775.7" width="1.3" height="7" fill="#46b862"/><rect x="1025.93" y="775.7" width="1.3" height="7" fill="#46b862"/><rect x="1028.03" y="775.7" width="1.3" height="7" fill="#46b862"/><rect x="1030.14" y="775.7" width="1.3" height="7" fill="#46b862"/><rect x="1032.25" y="775.7" width="2.05" height="7" fill="#dcf8e2"/><rect x="1034.36" y="775.7" width="2.05" height="7" fill="#dcf8e2"/><rect x="1036.47" y="775.7" width="1.3" height="7" fill="#46b862"/><rect x="1038.58" y="775.7" width="1.3" height="7" fill="#46b862"/><rect x="1040.68" y="775.7" width="1.3" height="7" fill="#46b862"/><rect x="1042.79" y="775.7" width="1.3" height="7" fill="#46b862"/><rect x="1044.90" y="775.7" width="2.05" height="7" fill="#dcf8e2"/><rect x="1047.01" y="775.7" width="2.05" height="7" fill="#dcf8e2"/><rect x="1049.12" y="775.7" width="1.3" height="7" fill="#46b862"/><rect x="1051.23" y="775.7" width="1.3" height="7" fill="#46b862"/><rect x="1053.34" y="775.7" width="1.3" height="7" fill="#46b862"/><rect x="1055.44" y="775.7" width="1.3" height="7" fill="#46b862"/><rect x="1057.55" y="775.7" width="1.3" height="7" fill="#46b862"/><rect x="1059.66" y="775.7" width="1.3" height="7" fill="#46b862"/><rect x="1061.77" y="775.7" width="1.3" height="7" fill="#46b862"/><rect x="1063.88" y="775.7" width="1.3" height="7" fill="#46b862"/><rect x="1065.99" y="775.7" width="2.05" height="7" fill="#dcf8e2"/><rect x="1068.09" y="775.7" width="1.3" height="7" fill="#46b862"/><rect x="1070.20" y="775.7" width="1.3" height="7" fill="#46b862"/><rect x="1072.31" y="775.7" width="2.05" height="7" fill="#dcf8e2"/><rect x="1074.42" y="775.7" width="2.05" height="7" fill="#dcf8e2"/><rect x="1076.53" y="775.7" width="1.3" height="7" fill="#46b862"/><rect x="1078.64" y="775.7" width="1.3" height="7" fill="#46b862"/><rect x="1080.75" y="775.7" width="1.3" height="7" fill="#46b862"/><rect x="1082.85" y="775.7" width="1.3" height="7" fill="#46b862"/><rect x="1084.96" y="775.7" width="1.3" height="7" fill="#46b862"/><rect x="1087.07" y="775.7" width="1.3" height="7" fill="#46b862"/><rect x="1089.18" y="775.7" width="1.3" height="7" fill="#46b862"/><rect x="1091.29" y="775.7" width="1.3" height="7" fill="#46b862"/><rect x="1093.40" y="775.7" width="1.3" height="7" fill="#46b862"/><rect x="1095.50" y="775.7" width="1.3" height="7" fill="#46b862"/><rect x="1097.61" y="775.7" width="1.3" height="7" fill="#46b862"/><rect x="1099.72" y="775.7" width="2.05" height="7" fill="#dcf8e2"/><rect x="1101.83" y="775.7" width="2.05" height="7" fill="#dcf8e2"/><rect x="1103.94" y="775.7" width="1.3" height="7" fill="#46b862"/><rect x="1106.05" y="775.7" width="1.3" height="7" fill="#46b862"/><rect x="1108.15" y="775.7" width="1.3" height="7" fill="#46b862"/><rect x="1110.26" y="775.7" width="1.3" height="7" fill="#46b862"/><rect x="1112.37" y="775.7" width="2.05" height="7" fill="#dcf8e2"/><rect x="1114.48" y="775.7" width="2.05" height="7" fill="#dcf8e2"/><rect x="1116.59" y="775.7" width="1.3" height="7" fill="#46b862"/><rect x="1118.70" y="775.7" width="1.3" height="7" fill="#46b862"/><rect x="1120.81" y="775.7" width="1.3" height="7" fill="#46b862"/><rect x="1122.91" y="775.7" width="1.3" height="7" fill="#46b862"/><rect x="1125.02" y="775.7" width="1.3" height="7" fill="#46b862"/><rect x="1127.13" y="775.7" width="1.3" height="7" fill="#46b862"/><rect x="1129.24" y="775.7" width="1.3" height="7" fill="#46b862"/><rect x="1131.35" y="775.7" width="1.3" height="7" fill="#46b862"/><rect x="1133.46" y="775.7" width="2.05" height="7" fill="#dcf8e2"/><rect x="1135.56" y="775.7" width="1.3" height="7" fill="#46b862"/><rect x="1137.67" y="775.7" width="1.3" height="7" fill="#46b862"/><rect x="1139.78" y="775.7" width="2.05" height="7" fill="#dcf8e2"/><rect x="1141.89" y="775.7" width="2.05" height="7" fill="#dcf8e2"/><rect x="1144.00" y="775.7" width="1.3" height="7" fill="#46b862"/><rect x="1146.11" y="775.7" width="1.3" height="7" fill="#46b862"/><rect x="1148.22" y="775.7" width="1.3" height="7" fill="#46b862"/><rect x="1150.32" y="775.7" width="1.3" height="7" fill="#46b862"/><rect x="1152.43" y="775.7" width="1.3" height="7" fill="#46b862"/><rect x="1154.54" y="775.7" width="1.3" height="7" fill="#46b862"/><rect x="1156.65" y="775.7" width="1.3" height="7" fill="#46b862"/><rect x="1158.76" y="775.7" width="1.3" height="7" fill="#46b862"/><rect x="1160.87" y="775.7" width="1.3" height="7" fill="#46b862"/><rect x="1162.97" y="775.7" width="1.3" height="7" fill="#46b862"/><rect x="1165.08" y="775.7" width="1.3" height="7" fill="#46b862"/><rect x="1167.19" y="775.7" width="2.05" height="7" fill="#dcf8e2"/><rect x="1169.30" y="775.7" width="2.05" height="7" fill="#dcf8e2"/><rect x="1171.41" y="775.7" width="1.3" height="7" fill="#46b862"/><rect x="1173.52" y="775.7" width="1.3" height="7" fill="#46b862"/><rect x="1175.62" y="775.7" width="1.3" height="7" fill="#46b862"/><rect x="1177.73" y="775.7" width="1.3" height="7" fill="#46b862"/><rect x="1179.84" y="775.7" width="2.05" height="7" fill="#dcf8e2"/><rect x="1181.95" y="775.7" width="2.05" height="7" fill="#dcf8e2"/><rect x="1184.06" y="775.7" width="1.3" height="7" fill="#46b862"/><rect x="1186.17" y="775.7" width="1.3" height="7" fill="#46b862"/><rect x="1188.28" y="775.7" width="1.3" height="7" fill="#46b862"/><rect x="1190.38" y="775.7" width="1.3" height="7" fill="#46b862"/><rect x="1192.49" y="775.7" width="1.3" height="7" fill="#46b862"/><rect x="1194.60" y="775.7" width="1.3" height="7" fill="#46b862"/><rect x="1196.71" y="775.7" width="1.3" height="7" fill="#46b862"/><rect x="1198.82" y="775.7" width="1.3" height="7" fill="#46b862"/><rect x="1200.93" y="775.7" width="2.05" height="7" fill="#dcf8e2"/><rect x="1203.03" y="775.7" width="1.3" height="7" fill="#46b862"/><rect x="1205.14" y="775.7" width="1.3" height="7" fill="#46b862"/><rect x="1207.25" y="775.7" width="2.05" height="7" fill="#dcf8e2"/><rect x="669.60" y="784.8" width="1.3" height="7" fill="#46b862"/><rect x="671.71" y="784.8" width="1.3" height="7" fill="#46b862"/><rect x="673.82" y="784.8" width="1.3" height="7" fill="#46b862"/><rect x="675.93" y="784.8" width="1.3" height="7" fill="#46b862"/><rect x="678.03" y="784.8" width="1.3" height="7" fill="#46b862"/><rect x="680.14" y="784.8" width="1.3" height="7" fill="#46b862"/><rect x="682.25" y="784.8" width="1.3" height="7" fill="#46b862"/><rect x="684.36" y="784.8" width="1.3" height="7" fill="#46b862"/><rect x="686.47" y="784.8" width="2.05" height="7" fill="#dcf8e2"/><rect x="688.58" y="784.8" width="1.3" height="7" fill="#46b862"/><rect x="690.68" y="784.8" width="1.3" height="7" fill="#46b862"/><rect x="692.79" y="784.8" width="1.3" height="7" fill="#46b862"/><rect x="694.90" y="784.8" width="1.3" height="7" fill="#46b862"/><rect x="697.01" y="784.8" width="1.3" height="7" fill="#46b862"/><rect x="699.12" y="784.8" width="1.3" height="7" fill="#46b862"/><rect x="701.23" y="784.8" width="1.3" height="7" fill="#46b862"/><rect x="703.34" y="784.8" width="1.3" height="7" fill="#46b862"/><rect x="705.44" y="784.8" width="1.3" height="7" fill="#46b862"/><rect x="707.55" y="784.8" width="1.3" height="7" fill="#46b862"/><rect x="709.66" y="784.8" width="1.3" height="7" fill="#46b862"/><rect x="711.77" y="784.8" width="1.3" height="7" fill="#46b862"/><rect x="713.88" y="784.8" width="1.3" height="7" fill="#46b862"/><rect x="715.99" y="784.8" width="1.3" height="7" fill="#46b862"/><rect x="718.09" y="784.8" width="1.3" height="7" fill="#46b862"/><rect x="720.20" y="784.8" width="2.05" height="7" fill="#dcf8e2"/><rect x="722.31" y="784.8" width="1.3" height="7" fill="#46b862"/><rect x="724.42" y="784.8" width="1.3" height="7" fill="#46b862"/><rect x="726.53" y="784.8" width="1.3" height="7" fill="#46b862"/><rect x="728.64" y="784.8" width="1.3" height="7" fill="#46b862"/><rect x="730.74" y="784.8" width="1.3" height="7" fill="#46b862"/><rect x="732.85" y="784.8" width="1.3" height="7" fill="#46b862"/><rect x="734.96" y="784.8" width="1.3" height="7" fill="#46b862"/><rect x="737.07" y="784.8" width="1.3" height="7" fill="#46b862"/><rect x="739.18" y="784.8" width="1.3" height="7" fill="#46b862"/><rect x="741.29" y="784.8" width="1.3" height="7" fill="#46b862"/><rect x="743.40" y="784.8" width="1.3" height="7" fill="#46b862"/><rect x="745.50" y="784.8" width="1.3" height="7" fill="#46b862"/><rect x="747.61" y="784.8" width="1.3" height="7" fill="#46b862"/><rect x="749.72" y="784.8" width="1.3" height="7" fill="#46b862"/><rect x="751.83" y="784.8" width="1.3" height="7" fill="#46b862"/><rect x="753.94" y="784.8" width="2.05" height="7" fill="#dcf8e2"/><rect x="756.05" y="784.8" width="1.3" height="7" fill="#46b862"/><rect x="758.15" y="784.8" width="1.3" height="7" fill="#46b862"/><rect x="760.26" y="784.8" width="1.3" height="7" fill="#46b862"/><rect x="762.37" y="784.8" width="1.3" height="7" fill="#46b862"/><rect x="764.48" y="784.8" width="1.3" height="7" fill="#46b862"/><rect x="766.59" y="784.8" width="1.3" height="7" fill="#46b862"/><rect x="768.70" y="784.8" width="1.3" height="7" fill="#46b862"/><rect x="770.81" y="784.8" width="1.3" height="7" fill="#46b862"/><rect x="772.91" y="784.8" width="1.3" height="7" fill="#46b862"/><rect x="775.02" y="784.8" width="1.3" height="7" fill="#46b862"/><rect x="777.13" y="784.8" width="1.3" height="7" fill="#46b862"/><rect x="779.24" y="784.8" width="1.3" height="7" fill="#46b862"/><rect x="781.35" y="784.8" width="1.3" height="7" fill="#46b862"/><rect x="783.46" y="784.8" width="1.3" height="7" fill="#46b862"/><rect x="785.56" y="784.8" width="1.3" height="7" fill="#46b862"/><rect x="787.67" y="784.8" width="2.05" height="7" fill="#dcf8e2"/><rect x="789.78" y="784.8" width="1.3" height="7" fill="#46b862"/><rect x="791.89" y="784.8" width="1.3" height="7" fill="#46b862"/><rect x="794.00" y="784.8" width="1.3" height="7" fill="#46b862"/><rect x="796.11" y="784.8" width="1.3" height="7" fill="#46b862"/><rect x="798.21" y="784.8" width="1.3" height="7" fill="#46b862"/><rect x="800.32" y="784.8" width="1.3" height="7" fill="#46b862"/><rect x="802.43" y="784.8" width="1.3" height="7" fill="#46b862"/><rect x="804.54" y="784.8" width="1.3" height="7" fill="#46b862"/><rect x="806.65" y="784.8" width="1.3" height="7" fill="#46b862"/><rect x="808.76" y="784.8" width="1.3" height="7" fill="#46b862"/><rect x="810.87" y="784.8" width="1.3" height="7" fill="#46b862"/><rect x="812.97" y="784.8" width="1.3" height="7" fill="#46b862"/><rect x="815.08" y="784.8" width="1.3" height="7" fill="#46b862"/><rect x="817.19" y="784.8" width="1.3" height="7" fill="#46b862"/><rect x="819.30" y="784.8" width="1.3" height="7" fill="#46b862"/><rect x="821.41" y="784.8" width="2.05" height="7" fill="#dcf8e2"/><rect x="823.52" y="784.8" width="1.3" height="7" fill="#46b862"/><rect x="825.62" y="784.8" width="1.3" height="7" fill="#46b862"/><rect x="827.73" y="784.8" width="1.3" height="7" fill="#46b862"/><rect x="829.84" y="784.8" width="1.3" height="7" fill="#46b862"/><rect x="831.95" y="784.8" width="1.3" height="7" fill="#46b862"/><rect x="834.06" y="784.8" width="1.3" height="7" fill="#46b862"/><rect x="836.17" y="784.8" width="1.3" height="7" fill="#46b862"/><rect x="838.28" y="784.8" width="1.3" height="7" fill="#46b862"/><rect x="840.38" y="784.8" width="1.3" height="7" fill="#46b862"/><rect x="842.49" y="784.8" width="1.3" height="7" fill="#46b862"/><rect x="844.60" y="784.8" width="1.3" height="7" fill="#46b862"/><rect x="846.71" y="784.8" width="1.3" height="7" fill="#46b862"/><rect x="848.82" y="784.8" width="1.3" height="7" fill="#46b862"/><rect x="850.93" y="784.8" width="1.3" height="7" fill="#46b862"/><rect x="853.03" y="784.8" width="1.3" height="7" fill="#46b862"/><rect x="855.14" y="784.8" width="2.05" height="7" fill="#dcf8e2"/><rect x="857.25" y="784.8" width="1.3" height="7" fill="#46b862"/><rect x="859.36" y="784.8" width="1.3" height="7" fill="#46b862"/><rect x="861.47" y="784.8" width="1.3" height="7" fill="#46b862"/><rect x="863.58" y="784.8" width="1.3" height="7" fill="#46b862"/><rect x="865.68" y="784.8" width="1.3" height="7" fill="#46b862"/><rect x="867.79" y="784.8" width="1.3" height="7" fill="#46b862"/><rect x="869.90" y="784.8" width="1.3" height="7" fill="#46b862"/><rect x="872.01" y="784.8" width="1.3" height="7" fill="#30ad4e"/><rect x="874.12" y="784.8" width="1.3" height="7" fill="#30ad4e"/><rect x="876.23" y="784.8" width="1.3" height="7" fill="#30ad4e"/><rect x="878.34" y="784.8" width="1.3" height="7" fill="#30ad4e"/><rect x="880.44" y="784.8" width="1.3" height="7" fill="#30ad4e"/><rect x="882.55" y="784.8" width="1.3" height="7" fill="#30ad4e"/><rect x="884.66" y="784.8" width="1.3" height="7" fill="#30ad4e"/><rect x="886.77" y="784.8" width="1.3" height="7" fill="#30ad4e"/><rect x="888.88" y="784.8" width="2.05" height="7" fill="#5cc878"/><rect x="890.99" y="784.8" width="1.3" height="7" fill="#30ad4e"/><rect x="893.09" y="784.8" width="1.3" height="7" fill="#30ad4e"/><rect x="895.20" y="784.8" width="1.3" height="7" fill="#30ad4e"/><rect x="897.31" y="784.8" width="1.3" height="7" fill="#30ad4e"/><rect x="899.42" y="784.8" width="1.3" height="7" fill="#30ad4e"/><rect x="901.53" y="784.8" width="1.3" height="7" fill="#30ad4e"/><rect x="903.64" y="784.8" width="1.3" height="7" fill="#30ad4e"/><rect x="905.75" y="784.8" width="1.3" height="7" fill="#30ad4e"/><rect x="907.85" y="784.8" width="1.3" height="7" fill="#30ad4e"/><rect x="909.96" y="784.8" width="1.3" height="7" fill="#30ad4e"/><rect x="912.07" y="784.8" width="1.3" height="7" fill="#30ad4e"/><rect x="914.18" y="784.8" width="1.3" height="7" fill="#30ad4e"/><rect x="916.29" y="784.8" width="1.3" height="7" fill="#30ad4e"/><rect x="918.40" y="784.8" width="1.3" height="7" fill="#30ad4e"/><rect x="920.50" y="784.8" width="1.3" height="7" fill="#30ad4e"/><rect x="922.61" y="784.8" width="2.05" height="7" fill="#5cc878"/><rect x="924.72" y="784.8" width="1.3" height="7" fill="#30ad4e"/><rect x="926.83" y="784.8" width="1.3" height="7" fill="#30ad4e"/><rect x="928.94" y="784.8" width="1.3" height="7" fill="#30ad4e"/><rect x="931.05" y="784.8" width="1.3" height="7" fill="#30ad4e"/><rect x="933.15" y="784.8" width="1.3" height="7" fill="#30ad4e"/><rect x="935.26" y="784.8" width="1.3" height="7" fill="#30ad4e"/><rect x="937.37" y="784.8" width="1.3" height="7" fill="#30ad4e"/><rect x="939.48" y="784.8" width="1.3" height="7" fill="#46b862"/><rect x="941.59" y="784.8" width="1.3" height="7" fill="#46b862"/><rect x="943.70" y="784.8" width="1.3" height="7" fill="#46b862"/><rect x="945.81" y="784.8" width="1.3" height="7" fill="#46b862"/><rect x="947.91" y="784.8" width="1.3" height="7" fill="#46b862"/><rect x="950.02" y="784.8" width="1.3" height="7" fill="#46b862"/><rect x="952.13" y="784.8" width="1.3" height="7" fill="#46b862"/><rect x="954.24" y="784.8" width="1.3" height="7" fill="#46b862"/><rect x="956.35" y="784.8" width="2.05" height="7" fill="#dcf8e2"/><rect x="958.46" y="784.8" width="1.3" height="7" fill="#46b862"/><rect x="960.56" y="784.8" width="1.3" height="7" fill="#46b862"/><rect x="962.67" y="784.8" width="1.3" height="7" fill="#46b862"/><rect x="964.78" y="784.8" width="1.3" height="7" fill="#46b862"/><rect x="966.89" y="784.8" width="1.3" height="7" fill="#46b862"/><rect x="969.00" y="784.8" width="1.3" height="7" fill="#46b862"/><rect x="971.11" y="784.8" width="1.3" height="7" fill="#46b862"/><rect x="973.22" y="784.8" width="1.3" height="7" fill="#46b862"/><rect x="975.32" y="784.8" width="1.3" height="7" fill="#46b862"/><rect x="977.43" y="784.8" width="1.3" height="7" fill="#46b862"/><rect x="979.54" y="784.8" width="1.3" height="7" fill="#46b862"/><rect x="981.65" y="784.8" width="1.3" height="7" fill="#46b862"/><rect x="983.76" y="784.8" width="1.3" height="7" fill="#46b862"/><rect x="985.87" y="784.8" width="1.3" height="7" fill="#46b862"/><rect x="987.97" y="784.8" width="1.3" height="7" fill="#46b862"/><rect x="990.08" y="784.8" width="2.05" height="7" fill="#dcf8e2"/><rect x="992.19" y="784.8" width="1.3" height="7" fill="#46b862"/><rect x="994.30" y="784.8" width="1.3" height="7" fill="#46b862"/><rect x="996.41" y="784.8" width="1.3" height="7" fill="#46b862"/><rect x="998.52" y="784.8" width="1.3" height="7" fill="#46b862"/><rect x="1000.62" y="784.8" width="1.3" height="7" fill="#46b862"/><rect x="1002.73" y="784.8" width="1.3" height="7" fill="#46b862"/><rect x="1004.84" y="784.8" width="1.3" height="7" fill="#46b862"/><rect x="1006.95" y="784.8" width="1.3" height="7" fill="#46b862"/><rect x="1009.06" y="784.8" width="1.3" height="7" fill="#46b862"/><rect x="1011.17" y="784.8" width="1.3" height="7" fill="#46b862"/><rect x="1013.28" y="784.8" width="1.3" height="7" fill="#46b862"/><rect x="1015.38" y="784.8" width="1.3" height="7" fill="#46b862"/><rect x="1017.49" y="784.8" width="1.3" height="7" fill="#46b862"/><rect x="1019.60" y="784.8" width="1.3" height="7" fill="#46b862"/><rect x="1021.71" y="784.8" width="1.3" height="7" fill="#46b862"/><rect x="1023.82" y="784.8" width="2.05" height="7" fill="#dcf8e2"/><rect x="1025.93" y="784.8" width="1.3" height="7" fill="#46b862"/><rect x="1028.03" y="784.8" width="1.3" height="7" fill="#46b862"/><rect x="1030.14" y="784.8" width="1.3" height="7" fill="#46b862"/><rect x="1032.25" y="784.8" width="1.3" height="7" fill="#46b862"/><rect x="1034.36" y="784.8" width="1.3" height="7" fill="#46b862"/><rect x="1036.47" y="784.8" width="1.3" height="7" fill="#46b862"/><rect x="1038.58" y="784.8" width="1.3" height="7" fill="#46b862"/><rect x="1040.68" y="784.8" width="1.3" height="7" fill="#46b862"/><rect x="1042.79" y="784.8" width="1.3" height="7" fill="#46b862"/><rect x="1044.90" y="784.8" width="1.3" height="7" fill="#46b862"/><rect x="1047.01" y="784.8" width="1.3" height="7" fill="#46b862"/><rect x="1049.12" y="784.8" width="1.3" height="7" fill="#46b862"/><rect x="1051.23" y="784.8" width="1.3" height="7" fill="#46b862"/><rect x="1053.34" y="784.8" width="1.3" height="7" fill="#46b862"/><rect x="1055.44" y="784.8" width="1.3" height="7" fill="#46b862"/><rect x="1057.55" y="784.8" width="2.05" height="7" fill="#dcf8e2"/><rect x="1059.66" y="784.8" width="1.3" height="7" fill="#46b862"/><rect x="1061.77" y="784.8" width="1.3" height="7" fill="#46b862"/><rect x="1063.88" y="784.8" width="1.3" height="7" fill="#46b862"/><rect x="1065.99" y="784.8" width="1.3" height="7" fill="#46b862"/><rect x="1068.09" y="784.8" width="1.3" height="7" fill="#46b862"/><rect x="1070.20" y="784.8" width="1.3" height="7" fill="#46b862"/><rect x="1072.31" y="784.8" width="1.3" height="7" fill="#46b862"/><rect x="1074.42" y="784.8" width="1.3" height="7" fill="#46b862"/><rect x="1076.53" y="784.8" width="1.3" height="7" fill="#46b862"/><rect x="1078.64" y="784.8" width="1.3" height="7" fill="#46b862"/><rect x="1080.75" y="784.8" width="1.3" height="7" fill="#46b862"/><rect x="1082.85" y="784.8" width="1.3" height="7" fill="#46b862"/><rect x="1084.96" y="784.8" width="1.3" height="7" fill="#46b862"/><rect x="1087.07" y="784.8" width="1.3" height="7" fill="#46b862"/><rect x="1089.18" y="784.8" width="1.3" height="7" fill="#46b862"/><rect x="1091.29" y="784.8" width="2.05" height="7" fill="#dcf8e2"/><rect x="1093.40" y="784.8" width="1.3" height="7" fill="#46b862"/><rect x="1095.50" y="784.8" width="1.3" height="7" fill="#46b862"/><rect x="1097.61" y="784.8" width="1.3" height="7" fill="#46b862"/><rect x="1099.72" y="784.8" width="1.3" height="7" fill="#46b862"/><rect x="1101.83" y="784.8" width="1.3" height="7" fill="#46b862"/><rect x="1103.94" y="784.8" width="1.3" height="7" fill="#46b862"/><rect x="1106.05" y="784.8" width="1.3" height="7" fill="#46b862"/><rect x="1108.15" y="784.8" width="1.3" height="7" fill="#46b862"/><rect x="1110.26" y="784.8" width="1.3" height="7" fill="#46b862"/><rect x="1112.37" y="784.8" width="1.3" height="7" fill="#46b862"/><rect x="1114.48" y="784.8" width="1.3" height="7" fill="#46b862"/><rect x="1116.59" y="784.8" width="1.3" height="7" fill="#46b862"/><rect x="1118.70" y="784.8" width="1.3" height="7" fill="#46b862"/><rect x="1120.81" y="784.8" width="1.3" height="7" fill="#46b862"/><rect x="1122.91" y="784.8" width="1.3" height="7" fill="#46b862"/><rect x="1125.02" y="784.8" width="2.05" height="7" fill="#dcf8e2"/><rect x="1127.13" y="784.8" width="1.3" height="7" fill="#46b862"/><rect x="1129.24" y="784.8" width="1.3" height="7" fill="#46b862"/><rect x="1131.35" y="784.8" width="1.3" height="7" fill="#46b862"/><rect x="1133.46" y="784.8" width="1.3" height="7" fill="#46b862"/><rect x="1135.56" y="784.8" width="1.3" height="7" fill="#46b862"/><rect x="1137.67" y="784.8" width="1.3" height="7" fill="#46b862"/><rect x="1139.78" y="784.8" width="1.3" height="7" fill="#46b862"/><rect x="1141.89" y="784.8" width="1.3" height="7" fill="#46b862"/><rect x="1144.00" y="784.8" width="1.3" height="7" fill="#46b862"/><rect x="1146.11" y="784.8" width="1.3" height="7" fill="#46b862"/><rect x="1148.22" y="784.8" width="1.3" height="7" fill="#46b862"/><rect x="1150.32" y="784.8" width="1.3" height="7" fill="#46b862"/><rect x="1152.43" y="784.8" width="1.3" height="7" fill="#46b862"/><rect x="1154.54" y="784.8" width="1.3" height="7" fill="#46b862"/><rect x="1156.65" y="784.8" width="1.3" height="7" fill="#46b862"/><rect x="1158.76" y="784.8" width="2.05" height="7" fill="#dcf8e2"/><rect x="1160.87" y="784.8" width="1.3" height="7" fill="#46b862"/><rect x="1162.97" y="784.8" width="1.3" height="7" fill="#46b862"/><rect x="1165.08" y="784.8" width="1.3" height="7" fill="#46b862"/><rect x="1167.19" y="784.8" width="1.3" height="7" fill="#46b862"/><rect x="1169.30" y="784.8" width="1.3" height="7" fill="#46b862"/><rect x="1171.41" y="784.8" width="1.3" height="7" fill="#46b862"/><rect x="1173.52" y="784.8" width="1.3" height="7" fill="#46b862"/><rect x="1175.62" y="784.8" width="1.3" height="7" fill="#46b862"/><rect x="1177.73" y="784.8" width="1.3" height="7" fill="#46b862"/><rect x="1179.84" y="784.8" width="1.3" height="7" fill="#46b862"/><rect x="1181.95" y="784.8" width="1.3" height="7" fill="#46b862"/><rect x="1184.06" y="784.8" width="1.3" height="7" fill="#46b862"/><rect x="1186.17" y="784.8" width="1.3" height="7" fill="#46b862"/><rect x="1188.28" y="784.8" width="1.3" height="7" fill="#46b862"/><rect x="1190.38" y="784.8" width="1.3" height="7" fill="#46b862"/><rect x="1192.49" y="784.8" width="2.05" height="7" fill="#dcf8e2"/><rect x="1194.60" y="784.8" width="1.3" height="7" fill="#46b862"/><rect x="1196.71" y="784.8" width="1.3" height="7" fill="#46b862"/><rect x="1198.82" y="784.8" width="1.3" height="7" fill="#46b862"/><rect x="1200.93" y="784.8" width="1.3" height="7" fill="#46b862"/><rect x="1203.03" y="784.8" width="1.3" height="7" fill="#46b862"/><rect x="1205.14" y="784.8" width="1.3" height="7" fill="#46b862"/><rect x="1207.25" y="784.8" width="1.3" height="7" fill="#46b862"/><rect x="669.60" y="793.9" width="2.05" height="7" fill="#dcf8e2"/><rect x="671.71" y="793.9" width="1.3" height="7" fill="#46b862"/><rect x="673.82" y="793.9" width="1.3" height="7" fill="#46b862"/><rect x="675.93" y="793.9" width="1.3" height="7" fill="#46b862"/><rect x="678.03" y="793.9" width="1.3" height="7" fill="#46b862"/><rect x="680.14" y="793.9" width="1.3" height="7" fill="#46b862"/><rect x="682.25" y="793.9" width="2.05" height="7" fill="#dcf8e2"/><rect x="684.36" y="793.9" width="1.3" height="7" fill="#46b862"/><rect x="686.47" y="793.9" width="2.05" height="7" fill="#dcf8e2"/><rect x="688.58" y="793.9" width="1.3" height="7" fill="#46b862"/><rect x="690.68" y="793.9" width="1.3" height="7" fill="#46b862"/><rect x="692.79" y="793.9" width="1.3" height="7" fill="#46b862"/><rect x="694.90" y="793.9" width="2.05" height="7" fill="#dcf8e2"/><rect x="697.01" y="793.9" width="2.05" height="7" fill="#dcf8e2"/><rect x="699.12" y="793.9" width="1.3" height="7" fill="#46b862"/><rect x="701.23" y="793.9" width="1.3" height="7" fill="#46b862"/><rect x="703.34" y="793.9" width="2.05" height="7" fill="#dcf8e2"/><rect x="705.44" y="793.9" width="1.3" height="7" fill="#46b862"/><rect x="707.55" y="793.9" width="2.05" height="7" fill="#dcf8e2"/><rect x="709.66" y="793.9" width="1.3" height="7" fill="#46b862"/><rect x="711.77" y="793.9" width="1.3" height="7" fill="#46b862"/><rect x="713.88" y="793.9" width="1.3" height="7" fill="#46b862"/><rect x="715.99" y="793.9" width="2.05" height="7" fill="#dcf8e2"/><rect x="718.09" y="793.9" width="1.3" height="7" fill="#46b862"/><rect x="720.20" y="793.9" width="1.3" height="7" fill="#46b862"/><rect x="722.31" y="793.9" width="1.3" height="7" fill="#46b862"/><rect x="724.42" y="793.9" width="1.3" height="7" fill="#46b862"/><rect x="726.53" y="793.9" width="1.3" height="7" fill="#46b862"/><rect x="728.64" y="793.9" width="2.05" height="7" fill="#dcf8e2"/><rect x="730.74" y="793.9" width="2.05" height="7" fill="#dcf8e2"/><rect x="732.85" y="793.9" width="1.3" height="7" fill="#46b862"/><rect x="734.96" y="793.9" width="2.05" height="7" fill="#dcf8e2"/><rect x="737.07" y="793.9" width="2.05" height="7" fill="#dcf8e2"/><rect x="739.18" y="793.9" width="1.3" height="7" fill="#46b862"/><rect x="741.29" y="793.9" width="1.3" height="7" fill="#46b862"/><rect x="743.40" y="793.9" width="1.3" height="7" fill="#46b862"/><rect x="745.50" y="793.9" width="1.3" height="7" fill="#46b862"/><rect x="747.61" y="793.9" width="1.3" height="7" fill="#46b862"/><rect x="749.72" y="793.9" width="1.3" height="7" fill="#46b862"/><rect x="751.83" y="793.9" width="1.3" height="7" fill="#46b862"/><rect x="753.94" y="793.9" width="2.05" height="7" fill="#dcf8e2"/><rect x="756.05" y="793.9" width="1.3" height="7" fill="#46b862"/><rect x="758.15" y="793.9" width="1.3" height="7" fill="#46b862"/><rect x="760.26" y="793.9" width="1.3" height="7" fill="#46b862"/><rect x="762.37" y="793.9" width="2.05" height="7" fill="#dcf8e2"/><rect x="764.48" y="793.9" width="2.05" height="7" fill="#dcf8e2"/><rect x="766.59" y="793.9" width="1.3" height="7" fill="#46b862"/><rect x="768.70" y="793.9" width="1.3" height="7" fill="#46b862"/><rect x="770.81" y="793.9" width="2.05" height="7" fill="#dcf8e2"/><rect x="772.91" y="793.9" width="1.3" height="7" fill="#46b862"/><rect x="775.02" y="793.9" width="2.05" height="7" fill="#dcf8e2"/><rect x="777.13" y="793.9" width="1.3" height="7" fill="#46b862"/><rect x="779.24" y="793.9" width="1.3" height="7" fill="#46b862"/><rect x="781.35" y="793.9" width="1.3" height="7" fill="#46b862"/><rect x="783.46" y="793.9" width="1.3" height="7" fill="#46b862"/><rect x="785.56" y="793.9" width="1.3" height="7" fill="#46b862"/><rect x="787.67" y="793.9" width="1.3" height="7" fill="#46b862"/><rect x="789.78" y="793.9" width="1.3" height="7" fill="#46b862"/><rect x="791.89" y="793.9" width="1.3" height="7" fill="#46b862"/><rect x="794.00" y="793.9" width="1.3" height="7" fill="#46b862"/><rect x="796.11" y="793.9" width="2.05" height="7" fill="#dcf8e2"/><rect x="798.21" y="793.9" width="2.05" height="7" fill="#dcf8e2"/><rect x="800.32" y="793.9" width="1.3" height="7" fill="#46b862"/><rect x="802.43" y="793.9" width="2.05" height="7" fill="#dcf8e2"/><rect x="804.54" y="793.9" width="2.05" height="7" fill="#dcf8e2"/><rect x="806.65" y="793.9" width="1.3" height="7" fill="#46b862"/><rect x="808.76" y="793.9" width="1.3" height="7" fill="#46b862"/><rect x="810.87" y="793.9" width="1.3" height="7" fill="#46b862"/><rect x="812.97" y="793.9" width="1.3" height="7" fill="#46b862"/><rect x="815.08" y="793.9" width="1.3" height="7" fill="#46b862"/><rect x="817.19" y="793.9" width="2.05" height="7" fill="#dcf8e2"/><rect x="819.30" y="793.9" width="1.3" height="7" fill="#46b862"/><rect x="821.41" y="793.9" width="2.05" height="7" fill="#dcf8e2"/><rect x="823.52" y="793.9" width="1.3" height="7" fill="#46b862"/><rect x="825.62" y="793.9" width="1.3" height="7" fill="#46b862"/><rect x="827.73" y="793.9" width="1.3" height="7" fill="#46b862"/><rect x="829.84" y="793.9" width="2.05" height="7" fill="#dcf8e2"/><rect x="831.95" y="793.9" width="2.05" height="7" fill="#dcf8e2"/><rect x="834.06" y="793.9" width="1.3" height="7" fill="#46b862"/><rect x="836.17" y="793.9" width="1.3" height="7" fill="#46b862"/><rect x="838.28" y="793.9" width="2.05" height="7" fill="#dcf8e2"/><rect x="840.38" y="793.9" width="1.3" height="7" fill="#46b862"/><rect x="842.49" y="793.9" width="2.05" height="7" fill="#dcf8e2"/><rect x="844.60" y="793.9" width="1.3" height="7" fill="#46b862"/><rect x="846.71" y="793.9" width="1.3" height="7" fill="#46b862"/><rect x="848.82" y="793.9" width="1.3" height="7" fill="#46b862"/><rect x="850.93" y="793.9" width="2.05" height="7" fill="#dcf8e2"/><rect x="853.03" y="793.9" width="1.3" height="7" fill="#46b862"/><rect x="855.14" y="793.9" width="1.3" height="7" fill="#46b862"/><rect x="857.25" y="793.9" width="1.3" height="7" fill="#46b862"/><rect x="859.36" y="793.9" width="1.3" height="7" fill="#46b862"/><rect x="861.47" y="793.9" width="1.3" height="7" fill="#46b862"/><rect x="863.58" y="793.9" width="2.05" height="7" fill="#dcf8e2"/><rect x="865.68" y="793.9" width="2.05" height="7" fill="#dcf8e2"/><rect x="867.79" y="793.9" width="1.3" height="7" fill="#46b862"/><rect x="869.90" y="793.9" width="2.05" height="7" fill="#dcf8e2"/><rect x="872.01" y="793.9" width="2.05" height="7" fill="#5cc878"/><rect x="874.12" y="793.9" width="1.3" height="7" fill="#30ad4e"/><rect x="876.23" y="793.9" width="1.3" height="7" fill="#30ad4e"/><rect x="878.34" y="793.9" width="1.3" height="7" fill="#30ad4e"/><rect x="880.44" y="793.9" width="1.3" height="7" fill="#30ad4e"/><rect x="882.55" y="793.9" width="1.3" height="7" fill="#30ad4e"/><rect x="884.66" y="793.9" width="1.3" height="7" fill="#30ad4e"/><rect x="886.77" y="793.9" width="1.3" height="7" fill="#30ad4e"/><rect x="888.88" y="793.9" width="2.05" height="7" fill="#5cc878"/><rect x="890.99" y="793.9" width="1.3" height="7" fill="#30ad4e"/><rect x="893.09" y="793.9" width="1.3" height="7" fill="#30ad4e"/><rect x="895.20" y="793.9" width="1.3" height="7" fill="#30ad4e"/><rect x="897.31" y="793.9" width="2.05" height="7" fill="#5cc878"/><rect x="899.42" y="793.9" width="2.05" height="7" fill="#5cc878"/><rect x="901.53" y="793.9" width="1.3" height="7" fill="#30ad4e"/><rect x="903.64" y="793.9" width="1.3" height="7" fill="#30ad4e"/><rect x="905.75" y="793.9" width="2.05" height="7" fill="#5cc878"/><rect x="907.85" y="793.9" width="1.3" height="7" fill="#30ad4e"/><rect x="909.96" y="793.9" width="2.05" height="7" fill="#5cc878"/><rect x="912.07" y="793.9" width="1.3" height="7" fill="#30ad4e"/><rect x="914.18" y="793.9" width="1.3" height="7" fill="#30ad4e"/><rect x="916.29" y="793.9" width="1.3" height="7" fill="#30ad4e"/><rect x="918.40" y="793.9" width="1.3" height="7" fill="#30ad4e"/><rect x="920.50" y="793.9" width="1.3" height="7" fill="#30ad4e"/><rect x="922.61" y="793.9" width="1.3" height="7" fill="#30ad4e"/><rect x="924.72" y="793.9" width="1.3" height="7" fill="#30ad4e"/><rect x="926.83" y="793.9" width="1.3" height="7" fill="#30ad4e"/><rect x="928.94" y="793.9" width="1.3" height="7" fill="#30ad4e"/><rect x="931.05" y="793.9" width="2.05" height="7" fill="#5cc878"/><rect x="933.15" y="793.9" width="2.05" height="7" fill="#5cc878"/><rect x="935.26" y="793.9" width="1.3" height="7" fill="#30ad4e"/><rect x="937.37" y="793.9" width="2.05" height="7" fill="#5cc878"/><rect x="939.48" y="793.9" width="2.05" height="7" fill="#dcf8e2"/><rect x="941.59" y="793.9" width="1.3" height="7" fill="#46b862"/><rect x="943.70" y="793.9" width="1.3" height="7" fill="#46b862"/><rect x="945.81" y="793.9" width="1.3" height="7" fill="#46b862"/><rect x="947.91" y="793.9" width="1.3" height="7" fill="#46b862"/><rect x="950.02" y="793.9" width="1.3" height="7" fill="#46b862"/><rect x="952.13" y="793.9" width="2.05" height="7" fill="#dcf8e2"/><rect x="954.24" y="793.9" width="1.3" height="7" fill="#46b862"/><rect x="956.35" y="793.9" width="2.05" height="7" fill="#dcf8e2"/><rect x="958.46" y="793.9" width="1.3" height="7" fill="#46b862"/><rect x="960.56" y="793.9" width="1.3" height="7" fill="#46b862"/><rect x="962.67" y="793.9" width="1.3" height="7" fill="#46b862"/><rect x="964.78" y="793.9" width="2.05" height="7" fill="#dcf8e2"/><rect x="966.89" y="793.9" width="2.05" height="7" fill="#dcf8e2"/><rect x="969.00" y="793.9" width="1.3" height="7" fill="#46b862"/><rect x="971.11" y="793.9" width="1.3" height="7" fill="#46b862"/><rect x="973.22" y="793.9" width="2.05" height="7" fill="#dcf8e2"/><rect x="975.32" y="793.9" width="1.3" height="7" fill="#46b862"/><rect x="977.43" y="793.9" width="2.05" height="7" fill="#dcf8e2"/><rect x="979.54" y="793.9" width="1.3" height="7" fill="#46b862"/><rect x="981.65" y="793.9" width="1.3" height="7" fill="#46b862"/><rect x="983.76" y="793.9" width="1.3" height="7" fill="#46b862"/><rect x="985.87" y="793.9" width="2.05" height="7" fill="#dcf8e2"/><rect x="987.97" y="793.9" width="1.3" height="7" fill="#46b862"/><rect x="990.08" y="793.9" width="1.3" height="7" fill="#46b862"/><rect x="992.19" y="793.9" width="1.3" height="7" fill="#46b862"/><rect x="994.30" y="793.9" width="1.3" height="7" fill="#46b862"/><rect x="996.41" y="793.9" width="1.3" height="7" fill="#46b862"/><rect x="998.52" y="793.9" width="2.05" height="7" fill="#dcf8e2"/><rect x="1000.62" y="793.9" width="2.05" height="7" fill="#dcf8e2"/><rect x="1002.73" y="793.9" width="1.3" height="7" fill="#46b862"/><rect x="1004.84" y="793.9" width="2.05" height="7" fill="#dcf8e2"/><rect x="1006.95" y="793.9" width="2.05" height="7" fill="#dcf8e2"/><rect x="1009.06" y="793.9" width="1.3" height="7" fill="#46b862"/><rect x="1011.17" y="793.9" width="1.3" height="7" fill="#46b862"/><rect x="1013.28" y="793.9" width="1.3" height="7" fill="#46b862"/><rect x="1015.38" y="793.9" width="1.3" height="7" fill="#46b862"/><rect x="1017.49" y="793.9" width="1.3" height="7" fill="#46b862"/><rect x="1019.60" y="793.9" width="1.3" height="7" fill="#46b862"/><rect x="1021.71" y="793.9" width="1.3" height="7" fill="#46b862"/><rect x="1023.82" y="793.9" width="2.05" height="7" fill="#dcf8e2"/><rect x="1025.93" y="793.9" width="1.3" height="7" fill="#46b862"/><rect x="1028.03" y="793.9" width="1.3" height="7" fill="#46b862"/><rect x="1030.14" y="793.9" width="1.3" height="7" fill="#46b862"/><rect x="1032.25" y="793.9" width="2.05" height="7" fill="#dcf8e2"/><rect x="1034.36" y="793.9" width="2.05" height="7" fill="#dcf8e2"/><rect x="1036.47" y="793.9" width="1.3" height="7" fill="#46b862"/><rect x="1038.58" y="793.9" width="1.3" height="7" fill="#46b862"/><rect x="1040.68" y="793.9" width="2.05" height="7" fill="#dcf8e2"/><rect x="1042.79" y="793.9" width="1.3" height="7" fill="#46b862"/><rect x="1044.90" y="793.9" width="2.05" height="7" fill="#dcf8e2"/><rect x="1047.01" y="793.9" width="1.3" height="7" fill="#46b862"/><rect x="1049.12" y="793.9" width="1.3" height="7" fill="#46b862"/><rect x="1051.23" y="793.9" width="1.3" height="7" fill="#46b862"/><rect x="1053.34" y="793.9" width="1.3" height="7" fill="#46b862"/><rect x="1055.44" y="793.9" width="1.3" height="7" fill="#46b862"/><rect x="1057.55" y="793.9" width="1.3" height="7" fill="#46b862"/><rect x="1059.66" y="793.9" width="1.3" height="7" fill="#46b862"/><rect x="1061.77" y="793.9" width="1.3" height="7" fill="#46b862"/><rect x="1063.88" y="793.9" width="1.3" height="7" fill="#46b862"/><rect x="1065.99" y="793.9" width="2.05" height="7" fill="#dcf8e2"/><rect x="1068.09" y="793.9" width="2.05" height="7" fill="#dcf8e2"/><rect x="1070.20" y="793.9" width="1.3" height="7" fill="#46b862"/><rect x="1072.31" y="793.9" width="2.05" height="7" fill="#dcf8e2"/><rect x="1074.42" y="793.9" width="2.05" height="7" fill="#dcf8e2"/><rect x="1076.53" y="793.9" width="1.3" height="7" fill="#46b862"/><rect x="1078.64" y="793.9" width="1.3" height="7" fill="#46b862"/><rect x="1080.75" y="793.9" width="1.3" height="7" fill="#46b862"/><rect x="1082.85" y="793.9" width="1.3" height="7" fill="#46b862"/><rect x="1084.96" y="793.9" width="1.3" height="7" fill="#46b862"/><rect x="1087.07" y="793.9" width="2.05" height="7" fill="#dcf8e2"/><rect x="1089.18" y="793.9" width="1.3" height="7" fill="#46b862"/><rect x="1091.29" y="793.9" width="2.05" height="7" fill="#dcf8e2"/><rect x="1093.40" y="793.9" width="1.3" height="7" fill="#46b862"/><rect x="1095.50" y="793.9" width="1.3" height="7" fill="#46b862"/><rect x="1097.61" y="793.9" width="1.3" height="7" fill="#46b862"/><rect x="1099.72" y="793.9" width="2.05" height="7" fill="#dcf8e2"/><rect x="1101.83" y="793.9" width="2.05" height="7" fill="#dcf8e2"/><rect x="1103.94" y="793.9" width="1.3" height="7" fill="#46b862"/><rect x="1106.05" y="793.9" width="1.3" height="7" fill="#46b862"/><rect x="1108.15" y="793.9" width="2.05" height="7" fill="#dcf8e2"/><rect x="1110.26" y="793.9" width="1.3" height="7" fill="#46b862"/><rect x="1112.37" y="793.9" width="2.05" height="7" fill="#dcf8e2"/><rect x="1114.48" y="793.9" width="1.3" height="7" fill="#46b862"/><rect x="1116.59" y="793.9" width="1.3" height="7" fill="#46b862"/><rect x="1118.70" y="793.9" width="1.3" height="7" fill="#46b862"/><rect x="1120.81" y="793.9" width="2.05" height="7" fill="#dcf8e2"/><rect x="1122.91" y="793.9" width="1.3" height="7" fill="#46b862"/><rect x="1125.02" y="793.9" width="1.3" height="7" fill="#46b862"/><rect x="1127.13" y="793.9" width="1.3" height="7" fill="#46b862"/><rect x="1129.24" y="793.9" width="1.3" height="7" fill="#46b862"/><rect x="1131.35" y="793.9" width="1.3" height="7" fill="#46b862"/><rect x="1133.46" y="793.9" width="2.05" height="7" fill="#dcf8e2"/><rect x="1135.56" y="793.9" width="2.05" height="7" fill="#dcf8e2"/><rect x="1137.67" y="793.9" width="1.3" height="7" fill="#46b862"/><rect x="1139.78" y="793.9" width="2.05" height="7" fill="#dcf8e2"/><rect x="1141.89" y="793.9" width="2.05" height="7" fill="#dcf8e2"/><rect x="1144.00" y="793.9" width="1.3" height="7" fill="#46b862"/><rect x="1146.11" y="793.9" width="1.3" height="7" fill="#46b862"/><rect x="1148.22" y="793.9" width="1.3" height="7" fill="#46b862"/><rect x="1150.32" y="793.9" width="1.3" height="7" fill="#46b862"/><rect x="1152.43" y="793.9" width="1.3" height="7" fill="#46b862"/><rect x="1154.54" y="793.9" width="1.3" height="7" fill="#46b862"/><rect x="1156.65" y="793.9" width="1.3" height="7" fill="#46b862"/><rect x="1158.76" y="793.9" width="2.05" height="7" fill="#dcf8e2"/><rect x="1160.87" y="793.9" width="1.3" height="7" fill="#46b862"/><rect x="1162.97" y="793.9" width="1.3" height="7" fill="#46b862"/><rect x="1165.08" y="793.9" width="1.3" height="7" fill="#46b862"/><rect x="1167.19" y="793.9" width="2.05" height="7" fill="#dcf8e2"/><rect x="1169.30" y="793.9" width="2.05" height="7" fill="#dcf8e2"/><rect x="1171.41" y="793.9" width="1.3" height="7" fill="#46b862"/><rect x="1173.52" y="793.9" width="1.3" height="7" fill="#46b862"/><rect x="1175.62" y="793.9" width="2.05" height="7" fill="#dcf8e2"/><rect x="1177.73" y="793.9" width="1.3" height="7" fill="#46b862"/><rect x="1179.84" y="793.9" width="2.05" height="7" fill="#dcf8e2"/><rect x="1181.95" y="793.9" width="1.3" height="7" fill="#46b862"/><rect x="1184.06" y="793.9" width="1.3" height="7" fill="#46b862"/><rect x="1186.17" y="793.9" width="1.3" height="7" fill="#46b862"/><rect x="1188.28" y="793.9" width="1.3" height="7" fill="#46b862"/><rect x="1190.38" y="793.9" width="1.3" height="7" fill="#46b862"/><rect x="1192.49" y="793.9" width="1.3" height="7" fill="#46b862"/><rect x="1194.60" y="793.9" width="1.3" height="7" fill="#46b862"/><rect x="1196.71" y="793.9" width="1.3" height="7" fill="#46b862"/><rect x="1198.82" y="793.9" width="1.3" height="7" fill="#46b862"/><rect x="1200.93" y="793.9" width="2.05" height="7" fill="#dcf8e2"/><rect x="1203.03" y="793.9" width="2.05" height="7" fill="#dcf8e2"/><rect x="1205.14" y="793.9" width="1.3" height="7" fill="#46b862"/><rect x="1207.25" y="793.9" width="2.05" height="7" fill="#dcf8e2"/><rect x="669.60" y="803.0" width="1.3" height="7" fill="#46b862"/><rect x="671.71" y="803.0" width="1.3" height="7" fill="#46b862"/><rect x="673.82" y="803.0" width="1.3" height="7" fill="#46b862"/><rect x="675.93" y="803.0" width="1.3" height="7" fill="#46b862"/><rect x="678.03" y="803.0" width="2.05" height="7" fill="#dcf8e2"/><rect x="680.14" y="803.0" width="1.3" height="7" fill="#46b862"/><rect x="682.25" y="803.0" width="1.3" height="7" fill="#46b862"/><rect x="684.36" y="803.0" width="1.3" height="7" fill="#46b862"/><rect x="686.47" y="803.0" width="1.3" height="7" fill="#46b862"/><rect x="688.58" y="803.0" width="1.3" height="7" fill="#46b862"/><rect x="690.68" y="803.0" width="1.3" height="7" fill="#46b862"/><rect x="692.79" y="803.0" width="1.3" height="7" fill="#46b862"/><rect x="694.90" y="803.0" width="1.3" height="7" fill="#46b862"/><rect x="697.01" y="803.0" width="1.3" height="7" fill="#46b862"/><rect x="699.12" y="803.0" width="1.3" height="7" fill="#46b862"/><rect x="701.23" y="803.0" width="1.3" height="7" fill="#46b862"/><rect x="703.34" y="803.0" width="1.3" height="7" fill="#46b862"/><rect x="705.44" y="803.0" width="1.3" height="7" fill="#46b862"/><rect x="707.55" y="803.0" width="1.3" height="7" fill="#46b862"/><rect x="709.66" y="803.0" width="1.3" height="7" fill="#46b862"/><rect x="711.77" y="803.0" width="2.05" height="7" fill="#dcf8e2"/><rect x="713.88" y="803.0" width="1.3" height="7" fill="#46b862"/><rect x="715.99" y="803.0" width="1.3" height="7" fill="#46b862"/><rect x="718.09" y="803.0" width="1.3" height="7" fill="#46b862"/><rect x="720.20" y="803.0" width="1.3" height="7" fill="#46b862"/><rect x="722.31" y="803.0" width="1.3" height="7" fill="#46b862"/><rect x="724.42" y="803.0" width="1.3" height="7" fill="#46b862"/><rect x="726.53" y="803.0" width="1.3" height="7" fill="#46b862"/><rect x="728.64" y="803.0" width="1.3" height="7" fill="#46b862"/><rect x="730.74" y="803.0" width="1.3" height="7" fill="#46b862"/><rect x="732.85" y="803.0" width="1.3" height="7" fill="#46b862"/><rect x="734.96" y="803.0" width="1.3" height="7" fill="#46b862"/><rect x="737.07" y="803.0" width="1.3" height="7" fill="#46b862"/><rect x="739.18" y="803.0" width="1.3" height="7" fill="#46b862"/><rect x="741.29" y="803.0" width="1.3" height="7" fill="#46b862"/><rect x="743.40" y="803.0" width="1.3" height="7" fill="#46b862"/><rect x="745.50" y="803.0" width="2.05" height="7" fill="#dcf8e2"/><rect x="747.61" y="803.0" width="1.3" height="7" fill="#46b862"/><rect x="749.72" y="803.0" width="1.3" height="7" fill="#46b862"/><rect x="751.83" y="803.0" width="1.3" height="7" fill="#46b862"/><rect x="753.94" y="803.0" width="1.3" height="7" fill="#46b862"/><rect x="756.05" y="803.0" width="1.3" height="7" fill="#46b862"/><rect x="758.15" y="803.0" width="1.3" height="7" fill="#46b862"/><rect x="760.26" y="803.0" width="1.3" height="7" fill="#46b862"/><rect x="762.37" y="803.0" width="1.3" height="7" fill="#46b862"/><rect x="764.48" y="803.0" width="1.3" height="7" fill="#46b862"/><rect x="766.59" y="803.0" width="1.3" height="7" fill="#46b862"/><rect x="768.70" y="803.0" width="1.3" height="7" fill="#46b862"/><rect x="770.81" y="803.0" width="1.3" height="7" fill="#46b862"/><rect x="772.91" y="803.0" width="1.3" height="7" fill="#46b862"/><rect x="775.02" y="803.0" width="1.3" height="7" fill="#46b862"/><rect x="777.13" y="803.0" width="1.3" height="7" fill="#46b862"/><rect x="779.24" y="803.0" width="2.05" height="7" fill="#dcf8e2"/><rect x="781.35" y="803.0" width="1.3" height="7" fill="#46b862"/><rect x="783.46" y="803.0" width="1.3" height="7" fill="#46b862"/><rect x="785.56" y="803.0" width="1.3" height="7" fill="#46b862"/><rect x="787.67" y="803.0" width="1.3" height="7" fill="#46b862"/><rect x="789.78" y="803.0" width="1.3" height="7" fill="#46b862"/><rect x="791.89" y="803.0" width="1.3" height="7" fill="#46b862"/><rect x="794.00" y="803.0" width="1.3" height="7" fill="#46b862"/><rect x="796.11" y="803.0" width="1.3" height="7" fill="#46b862"/><rect x="798.21" y="803.0" width="1.3" height="7" fill="#46b862"/><rect x="800.32" y="803.0" width="1.3" height="7" fill="#46b862"/><rect x="802.43" y="803.0" width="1.3" height="7" fill="#46b862"/><rect x="804.54" y="803.0" width="1.3" height="7" fill="#46b862"/><rect x="806.65" y="803.0" width="1.3" height="7" fill="#46b862"/><rect x="808.76" y="803.0" width="1.3" height="7" fill="#46b862"/><rect x="810.87" y="803.0" width="1.3" height="7" fill="#46b862"/><rect x="812.97" y="803.0" width="2.05" height="7" fill="#dcf8e2"/><rect x="815.08" y="803.0" width="1.3" height="7" fill="#46b862"/><rect x="817.19" y="803.0" width="1.3" height="7" fill="#46b862"/><rect x="819.30" y="803.0" width="1.3" height="7" fill="#46b862"/><rect x="821.41" y="803.0" width="1.3" height="7" fill="#46b862"/><rect x="823.52" y="803.0" width="1.3" height="7" fill="#46b862"/><rect x="825.62" y="803.0" width="1.3" height="7" fill="#46b862"/><rect x="827.73" y="803.0" width="1.3" height="7" fill="#46b862"/><rect x="829.84" y="803.0" width="1.3" height="7" fill="#46b862"/><rect x="831.95" y="803.0" width="1.3" height="7" fill="#46b862"/><rect x="834.06" y="803.0" width="1.3" height="7" fill="#46b862"/><rect x="836.17" y="803.0" width="1.3" height="7" fill="#46b862"/><rect x="838.28" y="803.0" width="1.3" height="7" fill="#46b862"/><rect x="840.38" y="803.0" width="1.3" height="7" fill="#46b862"/><rect x="842.49" y="803.0" width="1.3" height="7" fill="#46b862"/><rect x="844.60" y="803.0" width="1.3" height="7" fill="#46b862"/><rect x="846.71" y="803.0" width="2.05" height="7" fill="#dcf8e2"/><rect x="848.82" y="803.0" width="1.3" height="7" fill="#46b862"/><rect x="850.93" y="803.0" width="1.3" height="7" fill="#46b862"/><rect x="853.03" y="803.0" width="1.3" height="7" fill="#46b862"/><rect x="855.14" y="803.0" width="1.3" height="7" fill="#46b862"/><rect x="857.25" y="803.0" width="1.3" height="7" fill="#46b862"/><rect x="859.36" y="803.0" width="1.3" height="7" fill="#46b862"/><rect x="861.47" y="803.0" width="1.3" height="7" fill="#46b862"/><rect x="863.58" y="803.0" width="1.3" height="7" fill="#46b862"/><rect x="865.68" y="803.0" width="1.3" height="7" fill="#46b862"/><rect x="867.79" y="803.0" width="1.3" height="7" fill="#46b862"/><rect x="869.90" y="803.0" width="1.3" height="7" fill="#46b862"/><rect x="872.01" y="803.0" width="1.3" height="7" fill="#30ad4e"/><rect x="874.12" y="803.0" width="1.3" height="7" fill="#30ad4e"/><rect x="876.23" y="803.0" width="1.3" height="7" fill="#30ad4e"/><rect x="878.34" y="803.0" width="1.3" height="7" fill="#30ad4e"/><rect x="880.44" y="803.0" width="2.05" height="7" fill="#5cc878"/><rect x="882.55" y="803.0" width="1.3" height="7" fill="#30ad4e"/><rect x="884.66" y="803.0" width="1.3" height="7" fill="#30ad4e"/><rect x="886.77" y="803.0" width="1.3" height="7" fill="#30ad4e"/><rect x="888.88" y="803.0" width="1.3" height="7" fill="#30ad4e"/><rect x="890.99" y="803.0" width="1.3" height="7" fill="#30ad4e"/><rect x="893.09" y="803.0" width="1.3" height="7" fill="#30ad4e"/><rect x="895.20" y="803.0" width="1.3" height="7" fill="#30ad4e"/><rect x="897.31" y="803.0" width="1.3" height="7" fill="#30ad4e"/><rect x="899.42" y="803.0" width="1.3" height="7" fill="#30ad4e"/><rect x="901.53" y="803.0" width="1.3" height="7" fill="#30ad4e"/><rect x="903.64" y="803.0" width="1.3" height="7" fill="#30ad4e"/><rect x="905.75" y="803.0" width="1.3" height="7" fill="#30ad4e"/><rect x="907.85" y="803.0" width="1.3" height="7" fill="#30ad4e"/><rect x="909.96" y="803.0" width="1.3" height="7" fill="#30ad4e"/><rect x="912.07" y="803.0" width="1.3" height="7" fill="#30ad4e"/><rect x="914.18" y="803.0" width="2.05" height="7" fill="#5cc878"/><rect x="916.29" y="803.0" width="1.3" height="7" fill="#30ad4e"/><rect x="918.40" y="803.0" width="1.3" height="7" fill="#30ad4e"/><rect x="920.50" y="803.0" width="1.3" height="7" fill="#30ad4e"/><rect x="922.61" y="803.0" width="1.3" height="7" fill="#30ad4e"/><rect x="924.72" y="803.0" width="1.3" height="7" fill="#30ad4e"/><rect x="926.83" y="803.0" width="1.3" height="7" fill="#30ad4e"/><rect x="928.94" y="803.0" width="1.3" height="7" fill="#30ad4e"/><rect x="931.05" y="803.0" width="1.3" height="7" fill="#30ad4e"/><rect x="933.15" y="803.0" width="1.3" height="7" fill="#30ad4e"/><rect x="935.26" y="803.0" width="1.3" height="7" fill="#30ad4e"/><rect x="937.37" y="803.0" width="1.3" height="7" fill="#30ad4e"/><rect x="939.48" y="803.0" width="1.3" height="7" fill="#46b862"/><rect x="941.59" y="803.0" width="1.3" height="7" fill="#46b862"/><rect x="943.70" y="803.0" width="1.3" height="7" fill="#46b862"/><rect x="945.81" y="803.0" width="1.3" height="7" fill="#46b862"/><rect x="947.91" y="803.0" width="2.05" height="7" fill="#dcf8e2"/><rect x="950.02" y="803.0" width="1.3" height="7" fill="#46b862"/><rect x="952.13" y="803.0" width="1.3" height="7" fill="#46b862"/><rect x="954.24" y="803.0" width="1.3" height="7" fill="#46b862"/><rect x="956.35" y="803.0" width="1.3" height="7" fill="#46b862"/><rect x="958.46" y="803.0" width="1.3" height="7" fill="#46b862"/><rect x="960.56" y="803.0" width="1.3" height="7" fill="#46b862"/><rect x="962.67" y="803.0" width="1.3" height="7" fill="#46b862"/><rect x="964.78" y="803.0" width="1.3" height="7" fill="#46b862"/><rect x="966.89" y="803.0" width="1.3" height="7" fill="#46b862"/><rect x="969.00" y="803.0" width="1.3" height="7" fill="#46b862"/><rect x="971.11" y="803.0" width="1.3" height="7" fill="#46b862"/><rect x="973.22" y="803.0" width="1.3" height="7" fill="#46b862"/><rect x="975.32" y="803.0" width="1.3" height="7" fill="#46b862"/><rect x="977.43" y="803.0" width="1.3" height="7" fill="#46b862"/><rect x="979.54" y="803.0" width="1.3" height="7" fill="#46b862"/><rect x="981.65" y="803.0" width="2.05" height="7" fill="#dcf8e2"/><rect x="983.76" y="803.0" width="1.3" height="7" fill="#46b862"/><rect x="985.87" y="803.0" width="1.3" height="7" fill="#46b862"/><rect x="987.97" y="803.0" width="1.3" height="7" fill="#46b862"/><rect x="990.08" y="803.0" width="1.3" height="7" fill="#46b862"/><rect x="992.19" y="803.0" width="1.3" height="7" fill="#46b862"/><rect x="994.30" y="803.0" width="1.3" height="7" fill="#46b862"/><rect x="996.41" y="803.0" width="1.3" height="7" fill="#46b862"/><rect x="998.52" y="803.0" width="1.3" height="7" fill="#46b862"/><rect x="1000.62" y="803.0" width="1.3" height="7" fill="#46b862"/><rect x="1002.73" y="803.0" width="1.3" height="7" fill="#46b862"/><rect x="1004.84" y="803.0" width="1.3" height="7" fill="#46b862"/><rect x="1006.95" y="803.0" width="1.3" height="7" fill="#46b862"/><rect x="1009.06" y="803.0" width="1.3" height="7" fill="#46b862"/><rect x="1011.17" y="803.0" width="1.3" height="7" fill="#46b862"/><rect x="1013.28" y="803.0" width="1.3" height="7" fill="#46b862"/><rect x="1015.38" y="803.0" width="2.05" height="7" fill="#dcf8e2"/><rect x="1017.49" y="803.0" width="1.3" height="7" fill="#46b862"/><rect x="1019.60" y="803.0" width="1.3" height="7" fill="#46b862"/><rect x="1021.71" y="803.0" width="1.3" height="7" fill="#46b862"/><rect x="1023.82" y="803.0" width="1.3" height="7" fill="#46b862"/><rect x="1025.93" y="803.0" width="1.3" height="7" fill="#46b862"/><rect x="1028.03" y="803.0" width="1.3" height="7" fill="#46b862"/><rect x="1030.14" y="803.0" width="1.3" height="7" fill="#46b862"/><rect x="1032.25" y="803.0" width="1.3" height="7" fill="#46b862"/><rect x="1034.36" y="803.0" width="1.3" height="7" fill="#46b862"/><rect x="1036.47" y="803.0" width="1.3" height="7" fill="#46b862"/><rect x="1038.58" y="803.0" width="1.3" height="7" fill="#46b862"/><rect x="1040.68" y="803.0" width="1.3" height="7" fill="#46b862"/><rect x="1042.79" y="803.0" width="1.3" height="7" fill="#46b862"/><rect x="1044.90" y="803.0" width="1.3" height="7" fill="#46b862"/><rect x="1047.01" y="803.0" width="1.3" height="7" fill="#46b862"/><rect x="1049.12" y="803.0" width="2.05" height="7" fill="#dcf8e2"/><rect x="1051.23" y="803.0" width="1.3" height="7" fill="#46b862"/><rect x="1053.34" y="803.0" width="1.3" height="7" fill="#46b862"/><rect x="1055.44" y="803.0" width="1.3" height="7" fill="#46b862"/><rect x="1057.55" y="803.0" width="1.3" height="7" fill="#46b862"/><rect x="1059.66" y="803.0" width="1.3" height="7" fill="#46b862"/><rect x="1061.77" y="803.0" width="1.3" height="7" fill="#46b862"/><rect x="1063.88" y="803.0" width="1.3" height="7" fill="#46b862"/><rect x="1065.99" y="803.0" width="1.3" height="7" fill="#46b862"/><rect x="1068.09" y="803.0" width="1.3" height="7" fill="#46b862"/><rect x="1070.20" y="803.0" width="1.3" height="7" fill="#46b862"/><rect x="1072.31" y="803.0" width="1.3" height="7" fill="#46b862"/><rect x="1074.42" y="803.0" width="1.3" height="7" fill="#46b862"/><rect x="1076.53" y="803.0" width="1.3" height="7" fill="#46b862"/><rect x="1078.64" y="803.0" width="1.3" height="7" fill="#46b862"/><rect x="1080.75" y="803.0" width="1.3" height="7" fill="#46b862"/><rect x="1082.85" y="803.0" width="2.05" height="7" fill="#dcf8e2"/><rect x="1084.96" y="803.0" width="1.3" height="7" fill="#46b862"/><rect x="1087.07" y="803.0" width="1.3" height="7" fill="#46b862"/><rect x="1089.18" y="803.0" width="1.3" height="7" fill="#46b862"/><rect x="1091.29" y="803.0" width="1.3" height="7" fill="#46b862"/><rect x="1093.40" y="803.0" width="1.3" height="7" fill="#46b862"/><rect x="1095.50" y="803.0" width="1.3" height="7" fill="#46b862"/><rect x="1097.61" y="803.0" width="1.3" height="7" fill="#46b862"/><rect x="1099.72" y="803.0" width="1.3" height="7" fill="#46b862"/><rect x="1101.83" y="803.0" width="1.3" height="7" fill="#46b862"/><rect x="1103.94" y="803.0" width="1.3" height="7" fill="#46b862"/><rect x="1106.05" y="803.0" width="1.3" height="7" fill="#46b862"/><rect x="1108.15" y="803.0" width="1.3" height="7" fill="#46b862"/><rect x="1110.26" y="803.0" width="1.3" height="7" fill="#46b862"/><rect x="1112.37" y="803.0" width="1.3" height="7" fill="#46b862"/><rect x="1114.48" y="803.0" width="1.3" height="7" fill="#46b862"/><rect x="1116.59" y="803.0" width="2.05" height="7" fill="#dcf8e2"/><rect x="1118.70" y="803.0" width="1.3" height="7" fill="#46b862"/><rect x="1120.81" y="803.0" width="1.3" height="7" fill="#46b862"/><rect x="1122.91" y="803.0" width="1.3" height="7" fill="#46b862"/><rect x="1125.02" y="803.0" width="1.3" height="7" fill="#46b862"/><rect x="1127.13" y="803.0" width="1.3" height="7" fill="#46b862"/><rect x="1129.24" y="803.0" width="1.3" height="7" fill="#46b862"/><rect x="1131.35" y="803.0" width="1.3" height="7" fill="#46b862"/><rect x="1133.46" y="803.0" width="1.3" height="7" fill="#46b862"/><rect x="1135.56" y="803.0" width="1.3" height="7" fill="#46b862"/><rect x="1137.67" y="803.0" width="1.3" height="7" fill="#46b862"/><rect x="1139.78" y="803.0" width="1.3" height="7" fill="#46b862"/><rect x="1141.89" y="803.0" width="1.3" height="7" fill="#46b862"/><rect x="1144.00" y="803.0" width="1.3" height="7" fill="#46b862"/><rect x="1146.11" y="803.0" width="1.3" height="7" fill="#46b862"/><rect x="1148.22" y="803.0" width="1.3" height="7" fill="#46b862"/><rect x="1150.32" y="803.0" width="2.05" height="7" fill="#dcf8e2"/><rect x="1152.43" y="803.0" width="1.3" height="7" fill="#46b862"/><rect x="1154.54" y="803.0" width="1.3" height="7" fill="#46b862"/><rect x="1156.65" y="803.0" width="1.3" height="7" fill="#46b862"/><rect x="1158.76" y="803.0" width="1.3" height="7" fill="#46b862"/><rect x="1160.87" y="803.0" width="1.3" height="7" fill="#46b862"/><rect x="1162.97" y="803.0" width="1.3" height="7" fill="#46b862"/><rect x="1165.08" y="803.0" width="1.3" height="7" fill="#46b862"/><rect x="1167.19" y="803.0" width="1.3" height="7" fill="#46b862"/><rect x="1169.30" y="803.0" width="1.3" height="7" fill="#46b862"/><rect x="1171.41" y="803.0" width="1.3" height="7" fill="#46b862"/><rect x="1173.52" y="803.0" width="1.3" height="7" fill="#46b862"/><rect x="1175.62" y="803.0" width="1.3" height="7" fill="#46b862"/><rect x="1177.73" y="803.0" width="1.3" height="7" fill="#46b862"/><rect x="1179.84" y="803.0" width="1.3" height="7" fill="#46b862"/><rect x="1181.95" y="803.0" width="1.3" height="7" fill="#46b862"/><rect x="1184.06" y="803.0" width="2.05" height="7" fill="#dcf8e2"/><rect x="1186.17" y="803.0" width="1.3" height="7" fill="#46b862"/><rect x="1188.28" y="803.0" width="1.3" height="7" fill="#46b862"/><rect x="1190.38" y="803.0" width="1.3" height="7" fill="#46b862"/><rect x="1192.49" y="803.0" width="1.3" height="7" fill="#46b862"/><rect x="1194.60" y="803.0" width="1.3" height="7" fill="#46b862"/><rect x="1196.71" y="803.0" width="1.3" height="7" fill="#46b862"/><rect x="1198.82" y="803.0" width="1.3" height="7" fill="#46b862"/><rect x="1200.93" y="803.0" width="1.3" height="7" fill="#46b862"/><rect x="1203.03" y="803.0" width="1.3" height="7" fill="#46b862"/><rect x="1205.14" y="803.0" width="1.3" height="7" fill="#46b862"/><rect x="1207.25" y="803.0" width="1.3" height="7" fill="#46b862"/><rect x="669.60" y="812.1" width="1.3" height="7" fill="#46b862"/><rect x="671.71" y="812.1" width="1.3" height="7" fill="#46b862"/><rect x="673.82" y="812.1" width="1.3" height="7" fill="#46b862"/><rect x="675.93" y="812.1" width="1.3" height="7" fill="#46b862"/><rect x="678.03" y="812.1" width="2.05" height="7" fill="#dcf8e2"/><rect x="680.14" y="812.1" width="1.3" height="7" fill="#46b862"/><rect x="682.25" y="812.1" width="1.3" height="7" fill="#46b862"/><rect x="684.36" y="812.1" width="1.3" height="7" fill="#46b862"/><rect x="686.47" y="812.1" width="1.3" height="7" fill="#46b862"/><rect x="688.58" y="812.1" width="1.3" height="7" fill="#46b862"/><rect x="690.68" y="812.1" width="1.3" height="7" fill="#46b862"/><rect x="692.79" y="812.1" width="1.3" height="7" fill="#46b862"/><rect x="694.90" y="812.1" width="1.3" height="7" fill="#46b862"/><rect x="697.01" y="812.1" width="1.3" height="7" fill="#46b862"/><rect x="699.12" y="812.1" width="1.3" height="7" fill="#46b862"/><rect x="701.23" y="812.1" width="1.3" height="7" fill="#46b862"/><rect x="703.34" y="812.1" width="1.3" height="7" fill="#46b862"/><rect x="705.44" y="812.1" width="1.3" height="7" fill="#46b862"/><rect x="707.55" y="812.1" width="2.05" height="7" fill="#dcf8e2"/><rect x="709.66" y="812.1" width="1.3" height="7" fill="#46b862"/><rect x="711.77" y="812.1" width="1.3" height="7" fill="#46b862"/><rect x="713.88" y="812.1" width="1.3" height="7" fill="#46b862"/><rect x="715.99" y="812.1" width="1.3" height="7" fill="#46b862"/><rect x="718.09" y="812.1" width="1.3" height="7" fill="#46b862"/><rect x="720.20" y="812.1" width="1.3" height="7" fill="#46b862"/><rect x="722.31" y="812.1" width="1.3" height="7" fill="#46b862"/><rect x="724.42" y="812.1" width="1.3" height="7" fill="#46b862"/><rect x="726.53" y="812.1" width="1.3" height="7" fill="#46b862"/><rect x="728.64" y="812.1" width="1.3" height="7" fill="#46b862"/><rect x="730.74" y="812.1" width="1.3" height="7" fill="#46b862"/><rect x="732.85" y="812.1" width="1.3" height="7" fill="#46b862"/><rect x="734.96" y="812.1" width="1.3" height="7" fill="#46b862"/><rect x="737.07" y="812.1" width="1.3" height="7" fill="#46b862"/><rect x="739.18" y="812.1" width="1.3" height="7" fill="#46b862"/><rect x="741.29" y="812.1" width="1.3" height="7" fill="#46b862"/><rect x="743.40" y="812.1" width="1.3" height="7" fill="#46b862"/><rect x="745.50" y="812.1" width="2.05" height="7" fill="#dcf8e2"/><rect x="747.61" y="812.1" width="1.3" height="7" fill="#46b862"/><rect x="749.72" y="812.1" width="1.3" height="7" fill="#46b862"/><rect x="751.83" y="812.1" width="1.3" height="7" fill="#46b862"/><rect x="753.94" y="812.1" width="1.3" height="7" fill="#46b862"/><rect x="756.05" y="812.1" width="1.3" height="7" fill="#46b862"/><rect x="758.15" y="812.1" width="1.3" height="7" fill="#46b862"/><rect x="760.26" y="812.1" width="1.3" height="7" fill="#46b862"/><rect x="762.37" y="812.1" width="1.3" height="7" fill="#46b862"/><rect x="764.48" y="812.1" width="1.3" height="7" fill="#46b862"/><rect x="766.59" y="812.1" width="1.3" height="7" fill="#46b862"/><rect x="768.70" y="812.1" width="1.3" height="7" fill="#46b862"/><rect x="770.81" y="812.1" width="1.3" height="7" fill="#46b862"/><rect x="772.91" y="812.1" width="1.3" height="7" fill="#46b862"/><rect x="775.02" y="812.1" width="2.05" height="7" fill="#dcf8e2"/><rect x="777.13" y="812.1" width="1.3" height="7" fill="#46b862"/><rect x="779.24" y="812.1" width="1.3" height="7" fill="#46b862"/><rect x="781.35" y="812.1" width="1.3" height="7" fill="#46b862"/><rect x="783.46" y="812.1" width="1.3" height="7" fill="#46b862"/><rect x="785.56" y="812.1" width="1.3" height="7" fill="#46b862"/><rect x="787.67" y="812.1" width="1.3" height="7" fill="#46b862"/><rect x="789.78" y="812.1" width="1.3" height="7" fill="#46b862"/><rect x="791.89" y="812.1" width="1.3" height="7" fill="#46b862"/><rect x="794.00" y="812.1" width="1.3" height="7" fill="#46b862"/><rect x="796.11" y="812.1" width="1.3" height="7" fill="#46b862"/><rect x="798.21" y="812.1" width="1.3" height="7" fill="#46b862"/><rect x="800.32" y="812.1" width="1.3" height="7" fill="#46b862"/><rect x="802.43" y="812.1" width="1.3" height="7" fill="#46b862"/><rect x="804.54" y="812.1" width="1.3" height="7" fill="#46b862"/><rect x="806.65" y="812.1" width="1.3" height="7" fill="#46b862"/><rect x="808.76" y="812.1" width="1.3" height="7" fill="#46b862"/><rect x="810.87" y="812.1" width="1.3" height="7" fill="#46b862"/><rect x="812.97" y="812.1" width="2.05" height="7" fill="#dcf8e2"/><rect x="815.08" y="812.1" width="1.3" height="7" fill="#46b862"/><rect x="817.19" y="812.1" width="1.3" height="7" fill="#46b862"/><rect x="819.30" y="812.1" width="1.3" height="7" fill="#46b862"/><rect x="821.41" y="812.1" width="1.3" height="7" fill="#46b862"/><rect x="823.52" y="812.1" width="1.3" height="7" fill="#46b862"/><rect x="825.62" y="812.1" width="1.3" height="7" fill="#46b862"/><rect x="827.73" y="812.1" width="1.3" height="7" fill="#46b862"/><rect x="829.84" y="812.1" width="1.3" height="7" fill="#46b862"/><rect x="831.95" y="812.1" width="1.3" height="7" fill="#46b862"/><rect x="834.06" y="812.1" width="1.3" height="7" fill="#46b862"/><rect x="836.17" y="812.1" width="1.3" height="7" fill="#46b862"/><rect x="838.28" y="812.1" width="1.3" height="7" fill="#46b862"/><rect x="840.38" y="812.1" width="1.3" height="7" fill="#46b862"/><rect x="842.49" y="812.1" width="2.05" height="7" fill="#dcf8e2"/><rect x="844.60" y="812.1" width="1.3" height="7" fill="#46b862"/><rect x="846.71" y="812.1" width="1.3" height="7" fill="#46b862"/><rect x="848.82" y="812.1" width="1.3" height="7" fill="#46b862"/><rect x="850.93" y="812.1" width="1.3" height="7" fill="#46b862"/><rect x="853.03" y="812.1" width="1.3" height="7" fill="#46b862"/><rect x="855.14" y="812.1" width="1.3" height="7" fill="#46b862"/><rect x="857.25" y="812.1" width="1.3" height="7" fill="#46b862"/><rect x="859.36" y="812.1" width="1.3" height="7" fill="#46b862"/><rect x="861.47" y="812.1" width="1.3" height="7" fill="#46b862"/><rect x="863.58" y="812.1" width="1.3" height="7" fill="#46b862"/><rect x="865.68" y="812.1" width="1.3" height="7" fill="#46b862"/><rect x="867.79" y="812.1" width="1.3" height="7" fill="#46b862"/><rect x="869.90" y="812.1" width="1.3" height="7" fill="#46b862"/><rect x="872.01" y="812.1" width="1.3" height="7" fill="#30ad4e"/><rect x="874.12" y="812.1" width="1.3" height="7" fill="#30ad4e"/><rect x="876.23" y="812.1" width="1.3" height="7" fill="#30ad4e"/><rect x="878.34" y="812.1" width="1.3" height="7" fill="#30ad4e"/><rect x="880.44" y="812.1" width="2.05" height="7" fill="#5cc878"/><rect x="882.55" y="812.1" width="1.3" height="7" fill="#30ad4e"/><rect x="884.66" y="812.1" width="1.3" height="7" fill="#30ad4e"/><rect x="886.77" y="812.1" width="1.3" height="7" fill="#30ad4e"/><rect x="888.88" y="812.1" width="1.3" height="7" fill="#30ad4e"/><rect x="890.99" y="812.1" width="1.3" height="7" fill="#30ad4e"/><rect x="893.09" y="812.1" width="1.3" height="7" fill="#30ad4e"/><rect x="895.20" y="812.1" width="1.3" height="7" fill="#30ad4e"/><rect x="897.31" y="812.1" width="1.3" height="7" fill="#30ad4e"/><rect x="899.42" y="812.1" width="1.3" height="7" fill="#30ad4e"/><rect x="901.53" y="812.1" width="1.3" height="7" fill="#30ad4e"/><rect x="903.64" y="812.1" width="1.3" height="7" fill="#30ad4e"/><rect x="905.75" y="812.1" width="1.3" height="7" fill="#30ad4e"/><rect x="907.85" y="812.1" width="1.3" height="7" fill="#30ad4e"/><rect x="909.96" y="812.1" width="2.05" height="7" fill="#5cc878"/><rect x="912.07" y="812.1" width="1.3" height="7" fill="#30ad4e"/><rect x="914.18" y="812.1" width="1.3" height="7" fill="#30ad4e"/><rect x="916.29" y="812.1" width="1.3" height="7" fill="#30ad4e"/><rect x="918.40" y="812.1" width="1.3" height="7" fill="#30ad4e"/><rect x="920.50" y="812.1" width="1.3" height="7" fill="#30ad4e"/><rect x="922.61" y="812.1" width="1.3" height="7" fill="#30ad4e"/><rect x="924.72" y="812.1" width="1.3" height="7" fill="#30ad4e"/><rect x="926.83" y="812.1" width="1.3" height="7" fill="#30ad4e"/><rect x="928.94" y="812.1" width="1.3" height="7" fill="#30ad4e"/><rect x="931.05" y="812.1" width="1.3" height="7" fill="#30ad4e"/><rect x="933.15" y="812.1" width="1.3" height="7" fill="#30ad4e"/><rect x="935.26" y="812.1" width="1.3" height="7" fill="#30ad4e"/><rect x="937.37" y="812.1" width="1.3" height="7" fill="#30ad4e"/><rect x="939.48" y="812.1" width="1.3" height="7" fill="#46b862"/><rect x="941.59" y="812.1" width="1.3" height="7" fill="#46b862"/><rect x="943.70" y="812.1" width="1.3" height="7" fill="#46b862"/><rect x="945.81" y="812.1" width="1.3" height="7" fill="#46b862"/><rect x="947.91" y="812.1" width="2.05" height="7" fill="#dcf8e2"/><rect x="950.02" y="812.1" width="1.3" height="7" fill="#46b862"/><rect x="952.13" y="812.1" width="1.3" height="7" fill="#46b862"/><rect x="954.24" y="812.1" width="1.3" height="7" fill="#46b862"/><rect x="956.35" y="812.1" width="1.3" height="7" fill="#46b862"/><rect x="958.46" y="812.1" width="1.3" height="7" fill="#46b862"/><rect x="960.56" y="812.1" width="1.3" height="7" fill="#46b862"/><rect x="962.67" y="812.1" width="1.3" height="7" fill="#46b862"/><rect x="964.78" y="812.1" width="1.3" height="7" fill="#46b862"/><rect x="966.89" y="812.1" width="1.3" height="7" fill="#46b862"/><rect x="969.00" y="812.1" width="1.3" height="7" fill="#46b862"/><rect x="971.11" y="812.1" width="1.3" height="7" fill="#46b862"/><rect x="973.22" y="812.1" width="1.3" height="7" fill="#46b862"/><rect x="975.32" y="812.1" width="1.3" height="7" fill="#46b862"/><rect x="977.43" y="812.1" width="2.05" height="7" fill="#dcf8e2"/><rect x="979.54" y="812.1" width="1.3" height="7" fill="#46b862"/><rect x="981.65" y="812.1" width="1.3" height="7" fill="#46b862"/><rect x="983.76" y="812.1" width="1.3" height="7" fill="#46b862"/><rect x="985.87" y="812.1" width="1.3" height="7" fill="#46b862"/><rect x="987.97" y="812.1" width="1.3" height="7" fill="#46b862"/><rect x="990.08" y="812.1" width="1.3" height="7" fill="#46b862"/><rect x="992.19" y="812.1" width="1.3" height="7" fill="#46b862"/><rect x="994.30" y="812.1" width="1.3" height="7" fill="#46b862"/><rect x="996.41" y="812.1" width="1.3" height="7" fill="#46b862"/><rect x="998.52" y="812.1" width="1.3" height="7" fill="#46b862"/><rect x="1000.62" y="812.1" width="1.3" height="7" fill="#46b862"/><rect x="1002.73" y="812.1" width="1.3" height="7" fill="#46b862"/><rect x="1004.84" y="812.1" width="1.3" height="7" fill="#46b862"/><rect x="1006.95" y="812.1" width="1.3" height="7" fill="#46b862"/><rect x="1009.06" y="812.1" width="1.3" height="7" fill="#46b862"/><rect x="1011.17" y="812.1" width="1.3" height="7" fill="#46b862"/><rect x="1013.28" y="812.1" width="1.3" height="7" fill="#46b862"/><rect x="1015.38" y="812.1" width="2.05" height="7" fill="#dcf8e2"/><rect x="1017.49" y="812.1" width="1.3" height="7" fill="#46b862"/><rect x="1019.60" y="812.1" width="1.3" height="7" fill="#46b862"/><rect x="1021.71" y="812.1" width="1.3" height="7" fill="#46b862"/><rect x="1023.82" y="812.1" width="1.3" height="7" fill="#46b862"/><rect x="1025.93" y="812.1" width="1.3" height="7" fill="#46b862"/><rect x="1028.03" y="812.1" width="1.3" height="7" fill="#46b862"/><rect x="1030.14" y="812.1" width="1.3" height="7" fill="#46b862"/><rect x="1032.25" y="812.1" width="1.3" height="7" fill="#46b862"/><rect x="1034.36" y="812.1" width="1.3" height="7" fill="#46b862"/><rect x="1036.47" y="812.1" width="1.3" height="7" fill="#46b862"/><rect x="1038.58" y="812.1" width="1.3" height="7" fill="#46b862"/><rect x="1040.68" y="812.1" width="1.3" height="7" fill="#46b862"/><rect x="1042.79" y="812.1" width="1.3" height="7" fill="#46b862"/><rect x="1044.90" y="812.1" width="2.05" height="7" fill="#dcf8e2"/><rect x="1047.01" y="812.1" width="1.3" height="7" fill="#46b862"/><rect x="1049.12" y="812.1" width="1.3" height="7" fill="#46b862"/><rect x="1051.23" y="812.1" width="1.3" height="7" fill="#46b862"/><rect x="1053.34" y="812.1" width="1.3" height="7" fill="#46b862"/><rect x="1055.44" y="812.1" width="1.3" height="7" fill="#46b862"/><rect x="1057.55" y="812.1" width="1.3" height="7" fill="#46b862"/><rect x="1059.66" y="812.1" width="1.3" height="7" fill="#46b862"/><rect x="1061.77" y="812.1" width="1.3" height="7" fill="#46b862"/><rect x="1063.88" y="812.1" width="1.3" height="7" fill="#46b862"/><rect x="1065.99" y="812.1" width="1.3" height="7" fill="#46b862"/><rect x="1068.09" y="812.1" width="1.3" height="7" fill="#46b862"/><rect x="1070.20" y="812.1" width="1.3" height="7" fill="#46b862"/><rect x="1072.31" y="812.1" width="1.3" height="7" fill="#46b862"/><rect x="1074.42" y="812.1" width="1.3" height="7" fill="#46b862"/><rect x="1076.53" y="812.1" width="1.3" height="7" fill="#46b862"/><rect x="1078.64" y="812.1" width="1.3" height="7" fill="#46b862"/><rect x="1080.75" y="812.1" width="1.3" height="7" fill="#46b862"/><rect x="1082.85" y="812.1" width="2.05" height="7" fill="#dcf8e2"/><rect x="1084.96" y="812.1" width="1.3" height="7" fill="#46b862"/><rect x="1087.07" y="812.1" width="1.3" height="7" fill="#46b862"/><rect x="1089.18" y="812.1" width="1.3" height="7" fill="#46b862"/><rect x="1091.29" y="812.1" width="1.3" height="7" fill="#46b862"/><rect x="1093.40" y="812.1" width="1.3" height="7" fill="#46b862"/><rect x="1095.50" y="812.1" width="1.3" height="7" fill="#46b862"/><rect x="1097.61" y="812.1" width="1.3" height="7" fill="#46b862"/><rect x="1099.72" y="812.1" width="1.3" height="7" fill="#46b862"/><rect x="1101.83" y="812.1" width="1.3" height="7" fill="#46b862"/><rect x="1103.94" y="812.1" width="1.3" height="7" fill="#46b862"/><rect x="1106.05" y="812.1" width="1.3" height="7" fill="#46b862"/><rect x="1108.15" y="812.1" width="1.3" height="7" fill="#46b862"/><rect x="1110.26" y="812.1" width="1.3" height="7" fill="#46b862"/><rect x="1112.37" y="812.1" width="2.05" height="7" fill="#dcf8e2"/><rect x="1114.48" y="812.1" width="1.3" height="7" fill="#46b862"/><rect x="1116.59" y="812.1" width="1.3" height="7" fill="#46b862"/><rect x="1118.70" y="812.1" width="1.3" height="7" fill="#46b862"/><rect x="1120.81" y="812.1" width="1.3" height="7" fill="#46b862"/><rect x="1122.91" y="812.1" width="1.3" height="7" fill="#46b862"/><rect x="1125.02" y="812.1" width="1.3" height="7" fill="#46b862"/><rect x="1127.13" y="812.1" width="1.3" height="7" fill="#46b862"/><rect x="1129.24" y="812.1" width="1.3" height="7" fill="#46b862"/><rect x="1131.35" y="812.1" width="1.3" height="7" fill="#46b862"/><rect x="1133.46" y="812.1" width="1.3" height="7" fill="#46b862"/><rect x="1135.56" y="812.1" width="1.3" height="7" fill="#46b862"/><rect x="1137.67" y="812.1" width="1.3" height="7" fill="#46b862"/><rect x="1139.78" y="812.1" width="1.3" height="7" fill="#46b862"/><rect x="1141.89" y="812.1" width="1.3" height="7" fill="#46b862"/><rect x="1144.00" y="812.1" width="1.3" height="7" fill="#46b862"/><rect x="1146.11" y="812.1" width="1.3" height="7" fill="#46b862"/><rect x="1148.22" y="812.1" width="1.3" height="7" fill="#46b862"/><rect x="1150.32" y="812.1" width="2.05" height="7" fill="#dcf8e2"/><rect x="1152.43" y="812.1" width="1.3" height="7" fill="#46b862"/><rect x="1154.54" y="812.1" width="1.3" height="7" fill="#46b862"/><rect x="1156.65" y="812.1" width="1.3" height="7" fill="#46b862"/><rect x="1158.76" y="812.1" width="1.3" height="7" fill="#46b862"/><rect x="1160.87" y="812.1" width="1.3" height="7" fill="#46b862"/><rect x="1162.97" y="812.1" width="1.3" height="7" fill="#46b862"/><rect x="1165.08" y="812.1" width="1.3" height="7" fill="#46b862"/><rect x="1167.19" y="812.1" width="1.3" height="7" fill="#46b862"/><rect x="1169.30" y="812.1" width="1.3" height="7" fill="#46b862"/><rect x="1171.41" y="812.1" width="1.3" height="7" fill="#46b862"/><rect x="1173.52" y="812.1" width="1.3" height="7" fill="#46b862"/><rect x="1175.62" y="812.1" width="1.3" height="7" fill="#46b862"/><rect x="1177.73" y="812.1" width="1.3" height="7" fill="#46b862"/><rect x="1179.84" y="812.1" width="2.05" height="7" fill="#dcf8e2"/><rect x="1181.95" y="812.1" width="1.3" height="7" fill="#46b862"/><rect x="1184.06" y="812.1" width="1.3" height="7" fill="#46b862"/><rect x="1186.17" y="812.1" width="1.3" height="7" fill="#46b862"/><rect x="1188.28" y="812.1" width="1.3" height="7" fill="#46b862"/><rect x="1190.38" y="812.1" width="1.3" height="7" fill="#46b862"/><rect x="1192.49" y="812.1" width="1.3" height="7" fill="#46b862"/><rect x="1194.60" y="812.1" width="1.3" height="7" fill="#46b862"/><rect x="1196.71" y="812.1" width="1.3" height="7" fill="#46b862"/><rect x="1198.82" y="812.1" width="1.3" height="7" fill="#46b862"/><rect x="1200.93" y="812.1" width="1.3" height="7" fill="#46b862"/><rect x="1203.03" y="812.1" width="1.3" height="7" fill="#46b862"/><rect x="1205.14" y="812.1" width="1.3" height="7" fill="#46b862"/><rect x="1207.25" y="812.1" width="1.3" height="7" fill="#46b862"/></svg>
<div style="left:871.1px;top:761.56px;width:1px;height:68px;background:#12401c;"></div>
<div style="left:939px;top:761.56px;width:1.2px;height:68px;background:#0c2a12;"></div>
<div style="left:872.2px;top:176px;width:0.9px;height:644.2px;background:#2c2d30;"></div>
<div style="left:873px;top:176px;width:1.3px;height:644.2px;background:#cdcdd1;"></div>
<svg style="left:866px;top:174px;" width="16" height="22" viewBox="0 0 16 22"><path d="M2.300 3.800a2 2 0 0 1 2-2h7a2 2 0 0 1 2 2v10.800l-5.500 5.600-5.500-5.600z" fill="#85868a" stroke="#d2d2d6" stroke-width="1"/></svg>
<div style="left:90px;top:820.1px;width:1119px;height:2.8px;background:#000;"></div>
<div style="left:90px;top:822.8px;width:1119px;height:62px;background:#212226;"></div>
<div style="left:98px;top:831px;width:36px;height:26.5px;background:#aeaeb3;border-radius:6px;"></div>
<svg style="left:106px;top:834px;" width="20" height="20" viewBox="0 0 20 20"><rect x="2.200" y="3" width="11.600" height="9" rx="2" fill="none" stroke="#111" stroke-width="1.400"/><rect x="5.600" y="6.600" width="12.600" height="10" rx="2.200" fill="#111" stroke="#aeaeb3" stroke-width="1"/><path d="M10.600 14.200v-4.400l3.600-.8v4.200" fill="none" stroke="#aeaeb3" stroke-width="1"/><circle cx="9.900" cy="14.300" r="1.100" fill="#aeaeb3"/><circle cx="13.500" cy="13.300" r="1.100" fill="#aeaeb3"/></svg>
<svg style="left:145px;top:836px;" width="16" height="16" viewBox="0 0 16 16"><rect x="1.600" y="1.800" width="12.800" height="5.400" rx="2.700" fill="none" stroke="#f2f2f4" stroke-width="1.300"/><circle cx="10.900" cy="4.500" r="2.300" fill="#f2f2f4"/><rect x="1.600" y="9" width="12.800" height="5.400" rx="2.700" fill="#f2f2f4" stroke="#f2f2f4" stroke-width="1.300"/><circle cx="5" cy="11.700" r="1.700" fill="#212226"/></svg>
<svg style="left:184px;top:836px;" width="14" height="16" viewBox="0 0 14 16"><rect x="2" y="1.600" width="10" height="12.800" rx="1.800" fill="none" stroke="#f2f2f4" stroke-width="1.300"/><circle cx="7" cy="6.400" r="1.500" fill="none" stroke="#f2f2f4" stroke-width="1.100"/><path d="M7 7.800v3.600" stroke="#f2f2f4" stroke-width="1.100" stroke-linecap="round"/></svg>
<svg style="left:603px;top:836px;" width="16" height="16" viewBox="0 0 16 16"><path d="M3.500 13.700L12.900 3.300l1.500 1.400L4.700 14.400z" fill="#f2f2f4" stroke="#f2f2f4" stroke-width=".5" stroke-linejoin="round"/></svg>
<svg style="left:640px;top:835.8px;" width="18" height="18" viewBox="0 0 18 18"><circle cx="9" cy="9.600" r="4.600" fill="none" stroke="#f2f2f4" stroke-width="1.300"/><path d="M9 6.800v3" stroke="#f2f2f4" stroke-width="1.300" stroke-linecap="round"/><g fill="#f2f2f4"><circle cx="9" cy="2.400" r=".8"/><circle cx="3.600" cy="4.600" r=".8"/><circle cx="14.400" cy="4.600" r=".8"/><circle cx="1.800" cy="9.600" r=".8"/><circle cx="16.200" cy="9.600" r=".8"/><circle cx="3.400" cy="14.800" r=".8"/><circle cx="14.600" cy="14.800" r=".8"/></g></svg>
<svg style="left:678.4px;top:836px;" width="16" height="16" viewBox="0 0 16 16"><g stroke="#f2f2f4" stroke-width="1.100" stroke-linecap="round" fill="#212226"><path d="M3 2.400v11.400M8.100 2.400v11.400M13.300 2.400v11.400"/><ellipse cx="3" cy="9.600" rx="1.150" ry="2.100"/><ellipse cx="8.100" cy="6.800" rx="1.150" ry="2.100"/><ellipse cx="13.300" cy="9.600" rx="1.150" ry="2.100"/></g></svg>
<svg style="left:1173px;top:837px;" width="18" height="14" viewBox="0 0 18 14"><rect x="1" y="1" width="15.600" height="11.600" rx="2" fill="#f2f2f4"/><path d="M5.400 1v6.400M8.800 1v6.400M12.200 1v6.400" stroke="#212226" stroke-width="1.700"/><path d="M5.400 7v5.600M8.800 7v5.600M12.200 7v5.600" stroke="#212226" stroke-width=".7"/></svg>
<svg style="left:1180px;top:856px;" width="28" height="28" viewBox="0 0 28 28"><path d="M6 23.400A17 17 0 0 0 23.400 6" fill="none" stroke="#f2f2f4" stroke-width="2.300" stroke-linecap="round"/></svg>
</div></div>
</div></body></html>
